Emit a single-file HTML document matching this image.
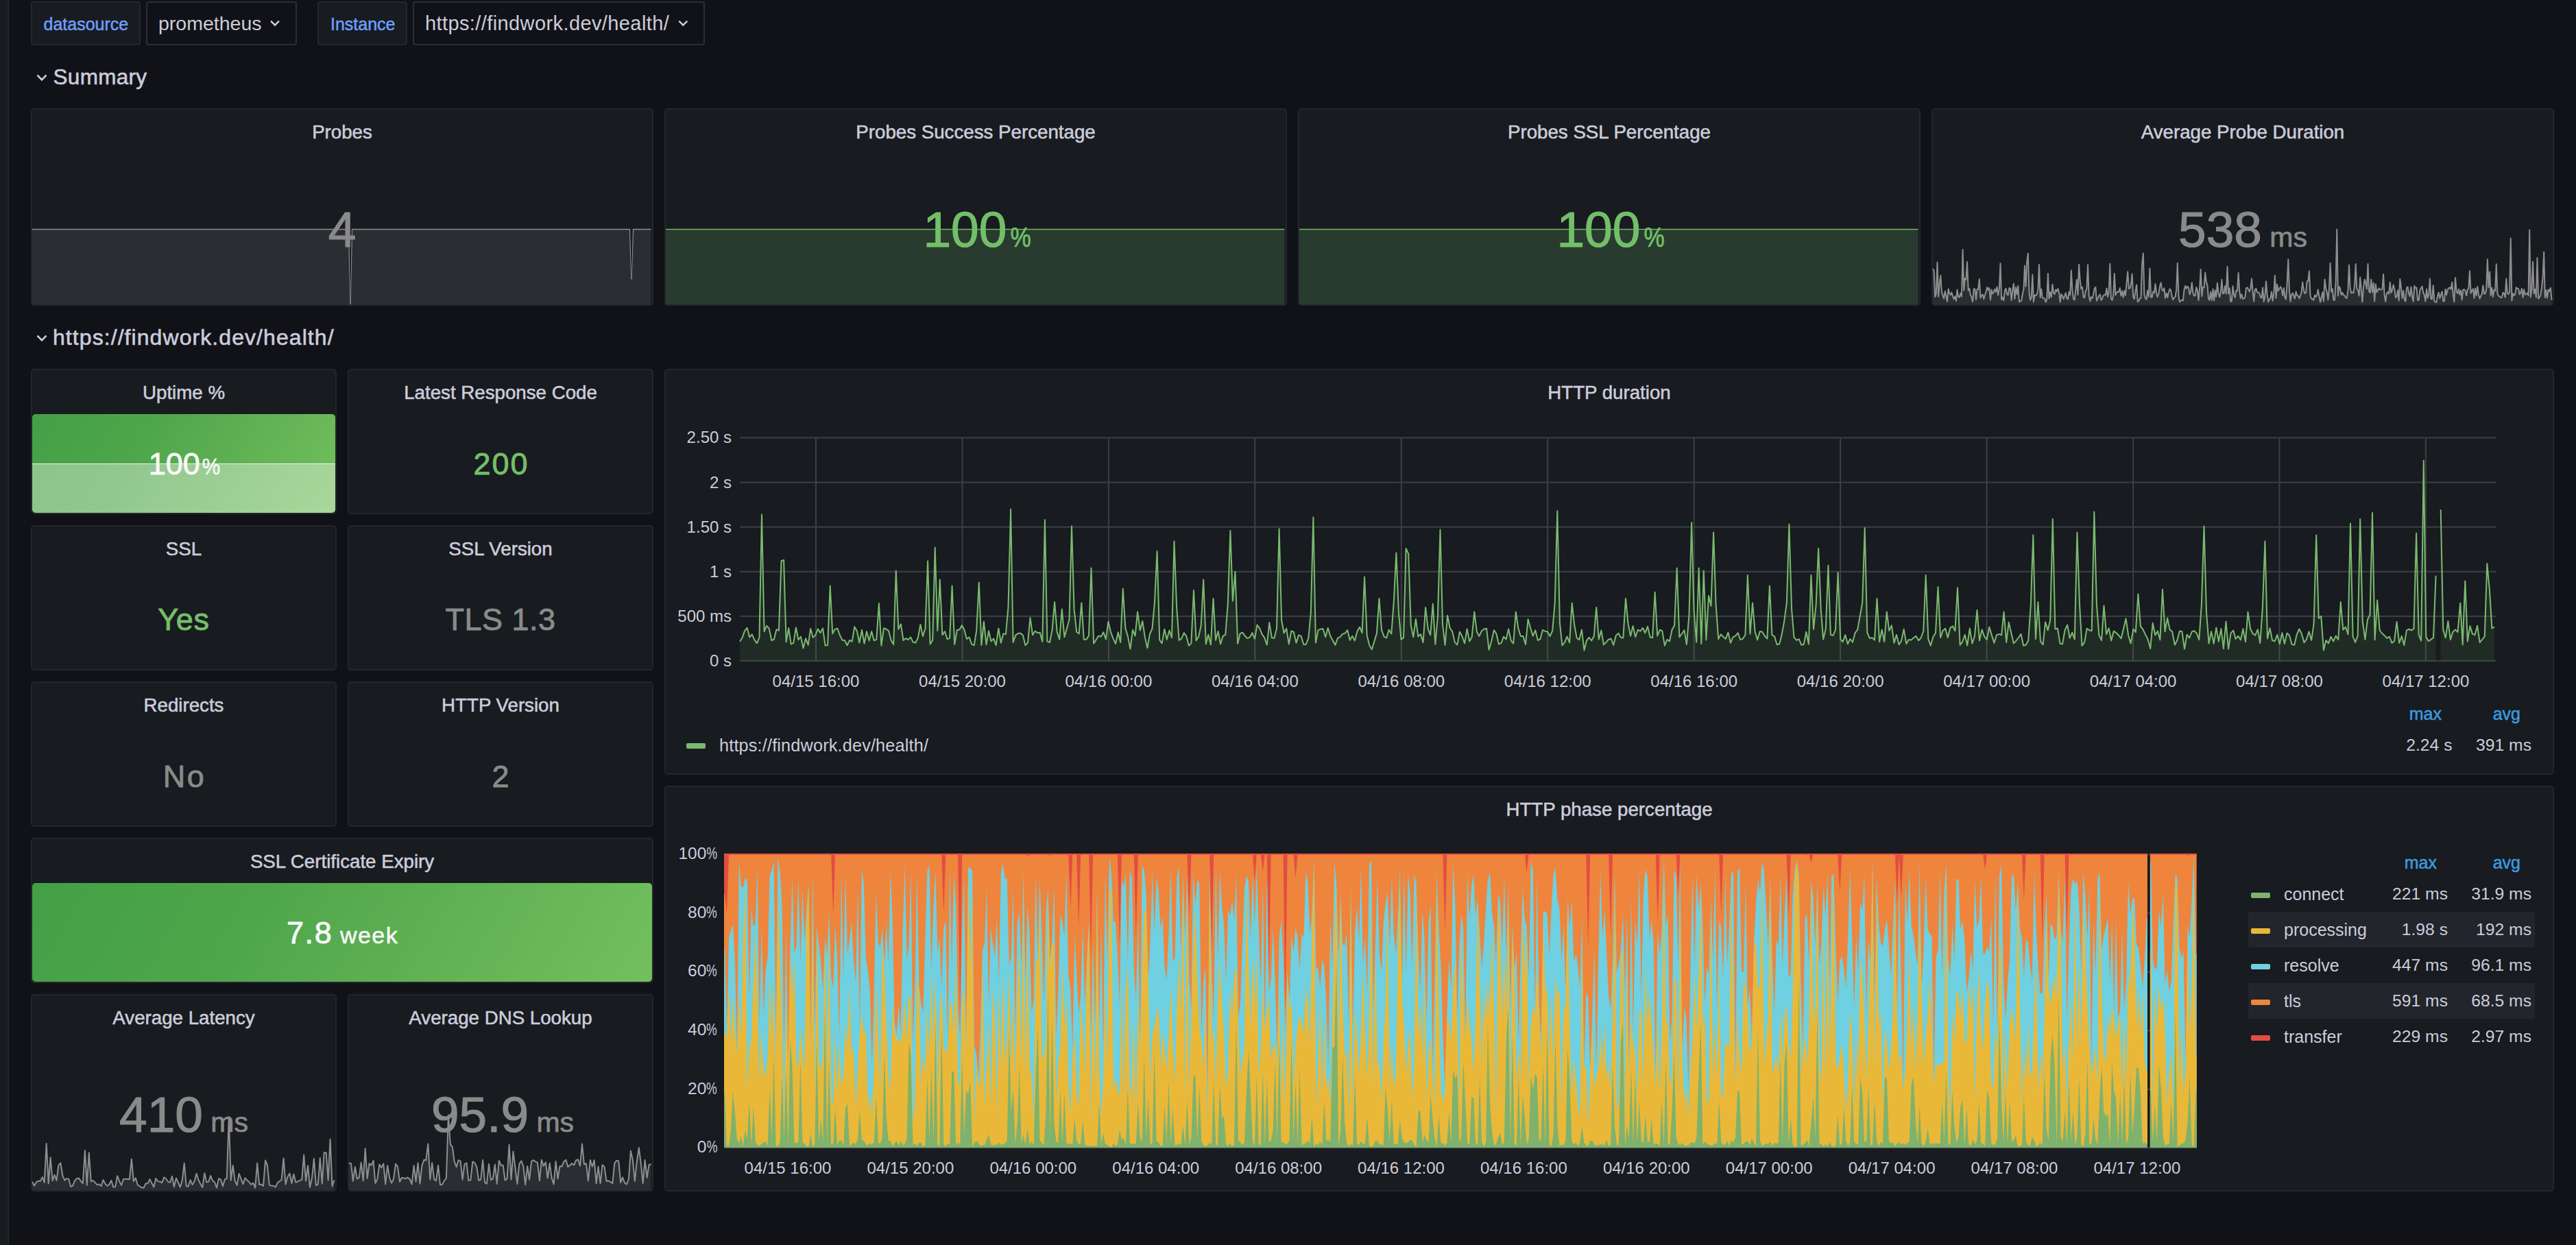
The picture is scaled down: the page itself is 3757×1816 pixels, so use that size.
<!DOCTYPE html>
<html lang="en"><head><meta charset="utf-8"><title>Blackbox Exporter (HTTP prober) - Grafana</title>
<style>
html,body{margin:0;padding:0}
body{width:3757px;height:1816px;background:#111217;overflow:hidden;position:relative;font-family:"Liberation Sans", sans-serif;}
div{position:absolute;box-sizing:border-box}
.t{white-space:pre}
.panel{background:#181b1f;border:2px solid #24262c;border-radius:5px;overflow:hidden}
.lbl{background:#181b1f;border:2px solid #24272c;border-radius:4px}
.val{background:#111217;border:2px solid #2c2f35;border-radius:4px}
svg{position:absolute;left:0;top:0;overflow:visible}
</style></head><body>

<div class="" style="left:0px;top:0px;width:13px;height:1816px;background:#181b1f;border-right:2px solid #23262b"></div>
<div class="lbl" style="left:45px;top:2px;width:160px;height:64px;"></div>
<div class="t" style="left:63.5px;top:22.54px;font-size:25px;line-height:25px;color:#6e9fff;font-weight:400;-webkit-text-stroke:0.5px #6e9fff;">datasource</div>
<div class="val" style="left:213px;top:2px;width:220px;height:64px;"></div>
<div class="t" style="left:231px;top:20.37px;font-size:28.5px;line-height:28.5px;color:#ccccdc;font-weight:400;">prometheus</div>
<div class="lbl" style="left:463px;top:2px;width:131px;height:64px;"></div>
<div class="t" style="left:482px;top:22.54px;font-size:25px;line-height:25px;color:#6e9fff;font-weight:400;-webkit-text-stroke:0.5px #6e9fff;">Instance</div>
<div class="val" style="left:602px;top:2px;width:426px;height:64px;"></div>
<div class="t" style="left:620px;top:19.95px;font-size:29px;line-height:29px;color:#ccccdc;font-weight:400;letter-spacing:0.4px;">https://findwork.dev/health/</div>
<svg width="3757" height="1816" style="pointer-events:none"><path d="M395.00 30.70 L401.00 36.70 L407.00 30.70" fill="none" stroke="#ccccdc" stroke-width="2.4" stroke-linejoin="miter"/></svg>
<svg width="3757" height="1816" style="pointer-events:none"><path d="M990.30 30.70 L996.30 36.70 L1002.30 30.70" fill="none" stroke="#ccccdc" stroke-width="2.4" stroke-linejoin="miter"/></svg>
<svg width="3757" height="1816" style="pointer-events:none"><path d="M54.50 109.60 L61.00 116.40 L67.50 109.60" fill="none" stroke="#ccccdc" stroke-width="2.7" stroke-linejoin="miter"/></svg>
<div class="t" style="left:77.5px;top:96.64px;font-size:31.5px;line-height:31.5px;color:#ccccdc;font-weight:400;letter-spacing:0.3px;-webkit-text-stroke:0.6px #ccccdc;">Summary</div>
<svg width="3757" height="1816" style="pointer-events:none"><path d="M54.50 489.60 L61.00 496.40 L67.50 489.60" fill="none" stroke="#ccccdc" stroke-width="2.7" stroke-linejoin="miter"/></svg>
<div class="t" style="left:77px;top:476.21px;font-size:32px;line-height:32px;color:#ccccdc;font-weight:400;letter-spacing:1.07px;-webkit-text-stroke:0.6px #ccccdc;">https://findwork.dev/health/</div>
<div class="panel" style="left:45px;top:158px;width:908px;height:288px;"></div>
<div class="t" style="left:499.0px;top:178.55px;font-size:27.7px;line-height:27.7px;color:#ccccdc;font-weight:400;-webkit-text-stroke:0.55px #ccccdc;transform:translateX(-50%);">Probes</div>
<div class="panel" style="left:969px;top:158px;width:908px;height:288px;"></div>
<div class="t" style="left:1423.0px;top:178.55px;font-size:27.7px;line-height:27.7px;color:#ccccdc;font-weight:400;-webkit-text-stroke:0.55px #ccccdc;transform:translateX(-50%);">Probes Success Percentage</div>
<div class="panel" style="left:1893px;top:158px;width:908px;height:288px;"></div>
<div class="t" style="left:2347.0px;top:178.55px;font-size:27.7px;line-height:27.7px;color:#ccccdc;font-weight:400;-webkit-text-stroke:0.55px #ccccdc;transform:translateX(-50%);">Probes SSL Percentage</div>
<div class="panel" style="left:2817px;top:158px;width:908px;height:288px;"></div>
<div class="t" style="left:3271.0px;top:178.55px;font-size:27.7px;line-height:27.7px;color:#ccccdc;font-weight:400;-webkit-text-stroke:0.55px #ccccdc;transform:translateX(-50%);">Average Probe Duration</div>
<svg width="3757" height="1816">
<rect x="47" y="334.5" width="902.5" height="109.5" fill="#2a2e32"/>
<path d="M47 334.5 L508.6 334.5 L511 444 L513.4 334.5 L918.6 334.5 L921 407.5 L923.4 334.5 L949.5 334.5" fill="none" stroke="#8e8e8e" stroke-width="1.5"/>
<path d="M509.2 334.5 L511 444 L512.8 334.5 Z M919.2 334.5 L921 407.5 L922.8 334.5 Z" fill="#181b1f"/>
<rect x="971" y="334.5" width="902.5" height="109.5" fill="#293b2e"/>
<rect x="971" y="333.8" width="902.5" height="1.4" fill="#73bf69"/>
<rect x="1895" y="334.5" width="902.5" height="109.5" fill="#293b2e"/>
<rect x="1895" y="333.8" width="902.5" height="1.4" fill="#73bf69"/>
</svg>
<div class="t" style="left:499.0px;top:297.71px;line-height:73px;color:#8a8a8a;transform:translateX(-50%)"><span style="font-size:73px;letter-spacing:0px;-webkit-text-stroke:1.2px #8a8a8a">4</span></div>
<div class="t" style="left:1425.0px;top:297.71px;line-height:73px;color:#73bf69;transform:translateX(-50%)"><span style="font-size:73px;letter-spacing:0px;-webkit-text-stroke:1.2px #73bf69">100</span><span style="font-size:41px;letter-spacing:0px;-webkit-text-stroke:0.72px #73bf69;margin-left:5px;display:inline-block;transform:scaleX(0.83);transform-origin:0 50%;margin-right:-6.2px;">%</span></div>
<div class="t" style="left:2349.0px;top:297.71px;line-height:73px;color:#73bf69;transform:translateX(-50%)"><span style="font-size:73px;letter-spacing:0px;-webkit-text-stroke:1.2px #73bf69">100</span><span style="font-size:41px;letter-spacing:0px;-webkit-text-stroke:0.72px #73bf69;margin-left:5px;display:inline-block;transform:scaleX(0.83);transform-origin:0 50%;margin-right:-6.2px;">%</span></div>
<svg width="3757" height="1816">
<path d="M2819.0 392.0 L2820.6 395.0 L2822.2 433.1 L2823.8 429.1 L2825.5 382.5 L2827.1 432.7 L2828.7 414.6 L2830.3 401.8 L2831.9 425.8 L2833.5 430.8 L2835.1 435.4 L2836.8 424.7 L2838.4 431.6 L2840.0 439.9 L2841.6 421.5 L2843.2 428.0 L2844.8 430.3 L2846.4 426.5 L2848.1 432.3 L2849.7 436.2 L2851.3 432.3 L2852.9 439.0 L2854.5 422.8 L2856.1 432.9 L2857.7 433.5 L2859.4 427.8 L2861.0 432.6 L2862.6 364.1 L2864.2 423.6 L2865.8 405.9 L2867.4 407.9 L2869.0 382.0 L2870.7 423.7 L2872.3 420.7 L2873.9 430.5 L2875.5 433.2 L2877.1 440.2 L2878.7 421.3 L2880.4 421.8 L2882.0 437.1 L2883.6 421.9 L2885.2 422.0 L2886.8 407.0 L2888.4 434.6 L2890.0 430.9 L2891.7 429.5 L2893.3 436.2 L2894.9 430.2 L2896.5 426.2 L2898.1 419.0 L2899.7 423.2 L2901.3 420.0 L2903.0 437.4 L2904.6 422.6 L2906.2 428.5 L2907.8 426.5 L2909.4 421.6 L2911.0 426.0 L2912.6 418.6 L2914.3 430.7 L2915.9 420.6 L2917.5 384.2 L2919.1 436.9 L2920.7 433.6 L2922.3 438.4 L2923.9 423.8 L2925.6 420.7 L2927.2 429.5 L2928.8 430.2 L2930.4 420.1 L2932.0 420.6 L2933.6 438.1 L2935.2 423.5 L2936.9 413.7 L2938.5 435.9 L2940.1 419.0 L2941.7 429.4 L2943.3 417.0 L2944.9 440.3 L2946.5 439.3 L2948.2 438.4 L2949.8 428.8 L2951.4 422.8 L2953.0 387.5 L2954.6 418.0 L2956.2 382.4 L2957.8 369.5 L2959.5 427.3 L2961.1 437.6 L2962.7 433.9 L2964.3 400.5 L2965.9 440.4 L2967.5 430.3 L2969.1 431.3 L2970.8 429.6 L2972.4 422.5 L2974.0 386.0 L2975.6 433.9 L2977.2 421.7 L2978.8 434.3 L2980.4 434.9 L2982.1 435.4 L2983.7 440.7 L2985.3 436.3 L2986.9 398.9 L2988.5 435.6 L2990.1 426.3 L2991.8 433.6 L2993.4 414.7 L2995.0 427.0 L2996.6 429.2 L2998.2 422.6 L2999.8 425.1 L3001.4 420.9 L3003.1 427.0 L3004.7 440.6 L3006.3 429.0 L3007.9 431.4 L3009.5 436.2 L3011.1 432.3 L3012.7 427.2 L3014.4 435.2 L3016.0 436.6 L3017.6 425.6 L3019.2 430.5 L3020.8 394.3 L3022.4 422.8 L3024.0 436.1 L3025.7 437.6 L3027.3 422.8 L3028.9 407.8 L3030.5 429.9 L3032.1 385.7 L3033.7 409.2 L3035.3 421.0 L3037.0 418.8 L3038.6 433.2 L3040.2 434.5 L3041.8 424.2 L3043.4 421.3 L3045.0 386.2 L3046.6 430.8 L3048.3 439.6 L3049.9 433.2 L3051.5 435.0 L3053.1 429.8 L3054.7 420.9 L3056.3 418.9 L3057.9 438.7 L3059.6 435.1 L3061.2 431.7 L3062.8 429.4 L3064.4 438.0 L3066.0 436.0 L3067.6 431.0 L3069.2 430.1 L3070.9 430.4 L3072.5 420.4 L3074.1 433.1 L3075.7 425.8 L3077.3 384.7 L3078.9 435.6 L3080.5 437.9 L3082.2 430.8 L3083.8 399.0 L3085.4 430.6 L3087.0 426.8 L3088.6 425.3 L3090.2 425.9 L3091.8 420.0 L3093.5 431.5 L3095.1 424.5 L3096.7 433.9 L3098.3 424.1 L3099.9 430.7 L3101.5 414.3 L3103.2 396.2 L3104.8 421.0 L3106.4 420.3 L3108.0 414.9 L3109.6 399.6 L3111.2 433.0 L3112.8 436.2 L3114.5 424.5 L3116.1 415.4 L3117.7 440.1 L3119.3 438.9 L3120.9 435.1 L3122.5 434.8 L3124.1 385.5 L3125.8 369.5 L3127.4 430.3 L3129.0 435.2 L3130.6 436.7 L3132.2 423.8 L3133.8 432.8 L3135.4 391.5 L3137.1 433.6 L3138.7 433.5 L3140.3 425.2 L3141.9 427.1 L3143.5 414.2 L3145.1 428.3 L3146.7 433.1 L3148.4 428.1 L3150.0 418.1 L3151.6 412.3 L3153.2 422.3 L3154.8 424.3 L3156.4 420.3 L3158.0 435.0 L3159.7 427.7 L3161.3 434.0 L3162.9 426.3 L3164.5 421.4 L3166.1 423.3 L3167.7 432.1 L3169.3 437.1 L3171.0 434.0 L3172.6 432.9 L3174.2 422.4 L3175.8 383.8 L3177.4 431.8 L3179.0 440.4 L3180.6 438.8 L3182.3 437.5 L3183.9 438.3 L3185.5 423.0 L3187.1 417.0 L3188.7 420.9 L3190.3 417.7 L3191.9 419.5 L3193.6 429.4 L3195.2 424.8 L3196.8 412.2 L3198.4 427.6 L3200.0 431.5 L3201.6 430.9 L3203.2 419.1 L3204.9 423.9 L3206.5 437.9 L3208.1 420.5 L3209.7 393.0 L3211.3 432.4 L3212.9 418.9 L3214.6 419.2 L3216.2 397.5 L3217.8 411.4 L3219.4 415.7 L3221.0 436.2 L3222.6 437.6 L3224.2 425.8 L3225.9 438.2 L3227.5 421.6 L3229.1 438.4 L3230.7 423.2 L3232.3 432.8 L3233.9 412.8 L3235.5 426.7 L3237.2 433.4 L3238.8 427.2 L3240.4 407.8 L3242.0 427.9 L3243.6 427.9 L3245.2 417.0 L3246.8 428.4 L3248.5 388.8 L3250.1 428.4 L3251.7 420.2 L3253.3 439.8 L3254.9 439.4 L3256.5 417.3 L3258.1 429.6 L3259.8 433.9 L3261.4 423.6 L3263.0 424.4 L3264.6 397.9 L3266.2 424.3 L3267.8 434.9 L3269.4 429.3 L3271.1 436.0 L3272.7 435.5 L3274.3 433.6 L3275.9 420.8 L3277.5 419.3 L3279.1 421.9 L3280.7 425.1 L3282.4 420.4 L3284.0 406.6 L3285.6 425.5 L3287.2 439.3 L3288.8 422.8 L3290.4 420.7 L3292.0 426.2 L3293.7 426.8 L3295.3 427.7 L3296.9 433.7 L3298.5 434.5 L3300.1 419.6 L3301.7 440.0 L3303.3 433.1 L3305.0 410.2 L3306.6 429.8 L3308.2 440.6 L3309.8 436.7 L3311.4 435.0 L3313.0 425.4 L3314.6 438.9 L3316.3 427.0 L3317.9 401.8 L3319.5 435.0 L3321.1 414.8 L3322.7 424.2 L3324.3 421.6 L3325.9 418.2 L3327.6 421.5 L3329.2 431.2 L3330.8 420.0 L3332.4 433.6 L3334.0 436.6 L3335.6 414.2 L3337.3 378.3 L3338.9 423.8 L3340.5 440.0 L3342.1 429.8 L3343.7 427.5 L3345.3 431.3 L3346.9 435.7 L3348.6 425.4 L3350.2 430.8 L3351.8 431.5 L3353.4 435.2 L3355.0 431.8 L3356.6 426.4 L3358.2 411.6 L3359.9 423.6 L3361.5 428.1 L3363.1 426.7 L3364.7 410.2 L3366.3 410.0 L3367.9 395.5 L3369.5 431.5 L3371.2 435.8 L3372.8 435.9 L3374.4 437.9 L3376.0 430.4 L3377.6 433.0 L3379.2 430.5 L3380.8 422.5 L3382.5 432.5 L3384.1 440.7 L3385.7 434.1 L3387.3 426.3 L3388.9 439.5 L3390.5 407.5 L3392.1 419.9 L3393.8 426.5 L3395.4 437.4 L3397.0 421.2 L3398.6 383.8 L3400.2 425.5 L3401.8 421.4 L3403.4 437.7 L3405.1 437.6 L3406.7 409.8 L3408.3 334.5 L3409.9 431.5 L3411.5 418.1 L3413.1 420.3 L3414.7 430.1 L3416.4 427.0 L3418.0 430.3 L3419.6 431.2 L3421.2 434.3 L3422.8 434.8 L3424.4 423.4 L3426.0 386.5 L3427.7 421.3 L3429.3 427.5 L3430.9 426.3 L3432.5 427.2 L3434.1 416.3 L3435.7 385.0 L3437.3 420.7 L3439.0 423.5 L3440.6 431.5 L3442.2 404.4 L3443.8 423.0 L3445.4 440.4 L3447.0 419.2 L3448.7 407.7 L3450.3 412.0 L3451.9 421.4 L3453.5 385.0 L3455.1 425.1 L3456.7 426.9 L3458.3 407.4 L3460.0 426.5 L3461.6 412.5 L3463.2 439.4 L3464.8 414.5 L3466.4 426.6 L3468.0 423.5 L3469.6 420.4 L3471.3 422.6 L3472.9 422.5 L3474.5 421.3 L3476.1 400.1 L3477.7 431.5 L3479.3 439.8 L3480.9 428.2 L3482.6 425.7 L3484.2 428.6 L3485.8 411.7 L3487.4 426.9 L3489.0 423.4 L3490.6 415.6 L3492.2 421.3 L3493.9 434.0 L3495.5 432.8 L3497.1 423.3 L3498.7 438.4 L3500.3 406.9 L3501.9 419.0 L3503.5 435.0 L3505.2 423.9 L3506.8 437.3 L3508.4 439.6 L3510.0 420.0 L3511.6 418.4 L3513.2 428.4 L3514.8 432.1 L3516.5 418.4 L3518.1 433.0 L3519.7 439.7 L3521.3 417.1 L3522.9 420.1 L3524.5 419.5 L3526.1 438.0 L3527.8 437.6 L3529.4 423.2 L3531.0 420.3 L3532.6 417.7 L3534.2 427.0 L3535.8 430.3 L3537.4 439.5 L3539.1 421.6 L3540.7 434.8 L3542.3 430.0 L3543.9 406.5 L3545.5 436.1 L3547.1 436.3 L3548.7 416.3 L3550.4 439.5 L3552.0 440.4 L3553.6 440.7 L3555.2 431.2 L3556.8 426.7 L3558.4 435.2 L3560.1 429.9 L3561.7 425.2 L3563.3 439.3 L3564.9 439.5 L3566.5 421.8 L3568.1 430.3 L3569.7 422.5 L3571.4 420.3 L3573.0 419.3 L3574.6 421.8 L3576.2 411.8 L3577.8 429.9 L3579.4 440.3 L3581.0 405.0 L3582.7 425.2 L3584.3 428.1 L3585.9 421.7 L3587.5 429.9 L3589.1 423.4 L3590.7 437.5 L3592.3 422.6 L3594.0 422.3 L3595.6 423.7 L3597.2 431.2 L3598.8 422.9 L3600.4 419.7 L3602.0 395.1 L3603.6 427.7 L3605.3 423.7 L3606.9 421.3 L3608.5 434.9 L3610.1 420.5 L3611.7 431.2 L3613.3 418.1 L3614.9 429.5 L3616.6 435.6 L3618.2 431.8 L3619.8 428.8 L3621.4 416.4 L3623.0 428.7 L3624.6 428.1 L3626.2 422.9 L3627.9 378.3 L3629.5 419.1 L3631.1 396.4 L3632.7 431.1 L3634.3 419.7 L3635.9 433.0 L3637.5 422.7 L3639.2 424.1 L3640.8 385.2 L3642.4 427.9 L3644.0 431.6 L3645.6 432.4 L3647.2 434.3 L3648.8 433.7 L3650.5 426.7 L3652.1 428.1 L3653.7 433.6 L3655.3 406.5 L3656.9 428.3 L3658.5 428.9 L3660.1 425.7 L3661.8 347.6 L3663.4 438.5 L3665.0 428.1 L3666.6 431.1 L3668.2 429.1 L3669.8 419.3 L3671.5 421.1 L3673.1 421.3 L3674.7 429.5 L3676.3 426.9 L3677.9 420.9 L3679.5 434.0 L3681.1 422.3 L3682.8 429.8 L3684.4 429.1 L3686.0 427.2 L3687.6 431.1 L3689.2 335.6 L3690.8 433.6 L3692.4 422.0 L3694.1 381.5 L3695.7 428.0 L3697.3 422.0 L3698.9 433.8 L3700.5 376.1 L3702.1 435.4 L3703.7 433.9 L3705.4 430.3 L3707.0 419.4 L3708.6 404.2 L3710.2 367.4 L3711.8 434.0 L3713.4 423.2 L3715.0 434.8 L3716.7 422.4 L3718.3 424.9 L3719.9 419.9 L3721.5 437.8 L3721.5 444.0 L2819.0 444.0 Z" fill="#2a2e32"/><path d="M2819.0 392.0 L2820.6 395.0 L2822.2 433.1 L2823.8 429.1 L2825.5 382.5 L2827.1 432.7 L2828.7 414.6 L2830.3 401.8 L2831.9 425.8 L2833.5 430.8 L2835.1 435.4 L2836.8 424.7 L2838.4 431.6 L2840.0 439.9 L2841.6 421.5 L2843.2 428.0 L2844.8 430.3 L2846.4 426.5 L2848.1 432.3 L2849.7 436.2 L2851.3 432.3 L2852.9 439.0 L2854.5 422.8 L2856.1 432.9 L2857.7 433.5 L2859.4 427.8 L2861.0 432.6 L2862.6 364.1 L2864.2 423.6 L2865.8 405.9 L2867.4 407.9 L2869.0 382.0 L2870.7 423.7 L2872.3 420.7 L2873.9 430.5 L2875.5 433.2 L2877.1 440.2 L2878.7 421.3 L2880.4 421.8 L2882.0 437.1 L2883.6 421.9 L2885.2 422.0 L2886.8 407.0 L2888.4 434.6 L2890.0 430.9 L2891.7 429.5 L2893.3 436.2 L2894.9 430.2 L2896.5 426.2 L2898.1 419.0 L2899.7 423.2 L2901.3 420.0 L2903.0 437.4 L2904.6 422.6 L2906.2 428.5 L2907.8 426.5 L2909.4 421.6 L2911.0 426.0 L2912.6 418.6 L2914.3 430.7 L2915.9 420.6 L2917.5 384.2 L2919.1 436.9 L2920.7 433.6 L2922.3 438.4 L2923.9 423.8 L2925.6 420.7 L2927.2 429.5 L2928.8 430.2 L2930.4 420.1 L2932.0 420.6 L2933.6 438.1 L2935.2 423.5 L2936.9 413.7 L2938.5 435.9 L2940.1 419.0 L2941.7 429.4 L2943.3 417.0 L2944.9 440.3 L2946.5 439.3 L2948.2 438.4 L2949.8 428.8 L2951.4 422.8 L2953.0 387.5 L2954.6 418.0 L2956.2 382.4 L2957.8 369.5 L2959.5 427.3 L2961.1 437.6 L2962.7 433.9 L2964.3 400.5 L2965.9 440.4 L2967.5 430.3 L2969.1 431.3 L2970.8 429.6 L2972.4 422.5 L2974.0 386.0 L2975.6 433.9 L2977.2 421.7 L2978.8 434.3 L2980.4 434.9 L2982.1 435.4 L2983.7 440.7 L2985.3 436.3 L2986.9 398.9 L2988.5 435.6 L2990.1 426.3 L2991.8 433.6 L2993.4 414.7 L2995.0 427.0 L2996.6 429.2 L2998.2 422.6 L2999.8 425.1 L3001.4 420.9 L3003.1 427.0 L3004.7 440.6 L3006.3 429.0 L3007.9 431.4 L3009.5 436.2 L3011.1 432.3 L3012.7 427.2 L3014.4 435.2 L3016.0 436.6 L3017.6 425.6 L3019.2 430.5 L3020.8 394.3 L3022.4 422.8 L3024.0 436.1 L3025.7 437.6 L3027.3 422.8 L3028.9 407.8 L3030.5 429.9 L3032.1 385.7 L3033.7 409.2 L3035.3 421.0 L3037.0 418.8 L3038.6 433.2 L3040.2 434.5 L3041.8 424.2 L3043.4 421.3 L3045.0 386.2 L3046.6 430.8 L3048.3 439.6 L3049.9 433.2 L3051.5 435.0 L3053.1 429.8 L3054.7 420.9 L3056.3 418.9 L3057.9 438.7 L3059.6 435.1 L3061.2 431.7 L3062.8 429.4 L3064.4 438.0 L3066.0 436.0 L3067.6 431.0 L3069.2 430.1 L3070.9 430.4 L3072.5 420.4 L3074.1 433.1 L3075.7 425.8 L3077.3 384.7 L3078.9 435.6 L3080.5 437.9 L3082.2 430.8 L3083.8 399.0 L3085.4 430.6 L3087.0 426.8 L3088.6 425.3 L3090.2 425.9 L3091.8 420.0 L3093.5 431.5 L3095.1 424.5 L3096.7 433.9 L3098.3 424.1 L3099.9 430.7 L3101.5 414.3 L3103.2 396.2 L3104.8 421.0 L3106.4 420.3 L3108.0 414.9 L3109.6 399.6 L3111.2 433.0 L3112.8 436.2 L3114.5 424.5 L3116.1 415.4 L3117.7 440.1 L3119.3 438.9 L3120.9 435.1 L3122.5 434.8 L3124.1 385.5 L3125.8 369.5 L3127.4 430.3 L3129.0 435.2 L3130.6 436.7 L3132.2 423.8 L3133.8 432.8 L3135.4 391.5 L3137.1 433.6 L3138.7 433.5 L3140.3 425.2 L3141.9 427.1 L3143.5 414.2 L3145.1 428.3 L3146.7 433.1 L3148.4 428.1 L3150.0 418.1 L3151.6 412.3 L3153.2 422.3 L3154.8 424.3 L3156.4 420.3 L3158.0 435.0 L3159.7 427.7 L3161.3 434.0 L3162.9 426.3 L3164.5 421.4 L3166.1 423.3 L3167.7 432.1 L3169.3 437.1 L3171.0 434.0 L3172.6 432.9 L3174.2 422.4 L3175.8 383.8 L3177.4 431.8 L3179.0 440.4 L3180.6 438.8 L3182.3 437.5 L3183.9 438.3 L3185.5 423.0 L3187.1 417.0 L3188.7 420.9 L3190.3 417.7 L3191.9 419.5 L3193.6 429.4 L3195.2 424.8 L3196.8 412.2 L3198.4 427.6 L3200.0 431.5 L3201.6 430.9 L3203.2 419.1 L3204.9 423.9 L3206.5 437.9 L3208.1 420.5 L3209.7 393.0 L3211.3 432.4 L3212.9 418.9 L3214.6 419.2 L3216.2 397.5 L3217.8 411.4 L3219.4 415.7 L3221.0 436.2 L3222.6 437.6 L3224.2 425.8 L3225.9 438.2 L3227.5 421.6 L3229.1 438.4 L3230.7 423.2 L3232.3 432.8 L3233.9 412.8 L3235.5 426.7 L3237.2 433.4 L3238.8 427.2 L3240.4 407.8 L3242.0 427.9 L3243.6 427.9 L3245.2 417.0 L3246.8 428.4 L3248.5 388.8 L3250.1 428.4 L3251.7 420.2 L3253.3 439.8 L3254.9 439.4 L3256.5 417.3 L3258.1 429.6 L3259.8 433.9 L3261.4 423.6 L3263.0 424.4 L3264.6 397.9 L3266.2 424.3 L3267.8 434.9 L3269.4 429.3 L3271.1 436.0 L3272.7 435.5 L3274.3 433.6 L3275.9 420.8 L3277.5 419.3 L3279.1 421.9 L3280.7 425.1 L3282.4 420.4 L3284.0 406.6 L3285.6 425.5 L3287.2 439.3 L3288.8 422.8 L3290.4 420.7 L3292.0 426.2 L3293.7 426.8 L3295.3 427.7 L3296.9 433.7 L3298.5 434.5 L3300.1 419.6 L3301.7 440.0 L3303.3 433.1 L3305.0 410.2 L3306.6 429.8 L3308.2 440.6 L3309.8 436.7 L3311.4 435.0 L3313.0 425.4 L3314.6 438.9 L3316.3 427.0 L3317.9 401.8 L3319.5 435.0 L3321.1 414.8 L3322.7 424.2 L3324.3 421.6 L3325.9 418.2 L3327.6 421.5 L3329.2 431.2 L3330.8 420.0 L3332.4 433.6 L3334.0 436.6 L3335.6 414.2 L3337.3 378.3 L3338.9 423.8 L3340.5 440.0 L3342.1 429.8 L3343.7 427.5 L3345.3 431.3 L3346.9 435.7 L3348.6 425.4 L3350.2 430.8 L3351.8 431.5 L3353.4 435.2 L3355.0 431.8 L3356.6 426.4 L3358.2 411.6 L3359.9 423.6 L3361.5 428.1 L3363.1 426.7 L3364.7 410.2 L3366.3 410.0 L3367.9 395.5 L3369.5 431.5 L3371.2 435.8 L3372.8 435.9 L3374.4 437.9 L3376.0 430.4 L3377.6 433.0 L3379.2 430.5 L3380.8 422.5 L3382.5 432.5 L3384.1 440.7 L3385.7 434.1 L3387.3 426.3 L3388.9 439.5 L3390.5 407.5 L3392.1 419.9 L3393.8 426.5 L3395.4 437.4 L3397.0 421.2 L3398.6 383.8 L3400.2 425.5 L3401.8 421.4 L3403.4 437.7 L3405.1 437.6 L3406.7 409.8 L3408.3 334.5 L3409.9 431.5 L3411.5 418.1 L3413.1 420.3 L3414.7 430.1 L3416.4 427.0 L3418.0 430.3 L3419.6 431.2 L3421.2 434.3 L3422.8 434.8 L3424.4 423.4 L3426.0 386.5 L3427.7 421.3 L3429.3 427.5 L3430.9 426.3 L3432.5 427.2 L3434.1 416.3 L3435.7 385.0 L3437.3 420.7 L3439.0 423.5 L3440.6 431.5 L3442.2 404.4 L3443.8 423.0 L3445.4 440.4 L3447.0 419.2 L3448.7 407.7 L3450.3 412.0 L3451.9 421.4 L3453.5 385.0 L3455.1 425.1 L3456.7 426.9 L3458.3 407.4 L3460.0 426.5 L3461.6 412.5 L3463.2 439.4 L3464.8 414.5 L3466.4 426.6 L3468.0 423.5 L3469.6 420.4 L3471.3 422.6 L3472.9 422.5 L3474.5 421.3 L3476.1 400.1 L3477.7 431.5 L3479.3 439.8 L3480.9 428.2 L3482.6 425.7 L3484.2 428.6 L3485.8 411.7 L3487.4 426.9 L3489.0 423.4 L3490.6 415.6 L3492.2 421.3 L3493.9 434.0 L3495.5 432.8 L3497.1 423.3 L3498.7 438.4 L3500.3 406.9 L3501.9 419.0 L3503.5 435.0 L3505.2 423.9 L3506.8 437.3 L3508.4 439.6 L3510.0 420.0 L3511.6 418.4 L3513.2 428.4 L3514.8 432.1 L3516.5 418.4 L3518.1 433.0 L3519.7 439.7 L3521.3 417.1 L3522.9 420.1 L3524.5 419.5 L3526.1 438.0 L3527.8 437.6 L3529.4 423.2 L3531.0 420.3 L3532.6 417.7 L3534.2 427.0 L3535.8 430.3 L3537.4 439.5 L3539.1 421.6 L3540.7 434.8 L3542.3 430.0 L3543.9 406.5 L3545.5 436.1 L3547.1 436.3 L3548.7 416.3 L3550.4 439.5 L3552.0 440.4 L3553.6 440.7 L3555.2 431.2 L3556.8 426.7 L3558.4 435.2 L3560.1 429.9 L3561.7 425.2 L3563.3 439.3 L3564.9 439.5 L3566.5 421.8 L3568.1 430.3 L3569.7 422.5 L3571.4 420.3 L3573.0 419.3 L3574.6 421.8 L3576.2 411.8 L3577.8 429.9 L3579.4 440.3 L3581.0 405.0 L3582.7 425.2 L3584.3 428.1 L3585.9 421.7 L3587.5 429.9 L3589.1 423.4 L3590.7 437.5 L3592.3 422.6 L3594.0 422.3 L3595.6 423.7 L3597.2 431.2 L3598.8 422.9 L3600.4 419.7 L3602.0 395.1 L3603.6 427.7 L3605.3 423.7 L3606.9 421.3 L3608.5 434.9 L3610.1 420.5 L3611.7 431.2 L3613.3 418.1 L3614.9 429.5 L3616.6 435.6 L3618.2 431.8 L3619.8 428.8 L3621.4 416.4 L3623.0 428.7 L3624.6 428.1 L3626.2 422.9 L3627.9 378.3 L3629.5 419.1 L3631.1 396.4 L3632.7 431.1 L3634.3 419.7 L3635.9 433.0 L3637.5 422.7 L3639.2 424.1 L3640.8 385.2 L3642.4 427.9 L3644.0 431.6 L3645.6 432.4 L3647.2 434.3 L3648.8 433.7 L3650.5 426.7 L3652.1 428.1 L3653.7 433.6 L3655.3 406.5 L3656.9 428.3 L3658.5 428.9 L3660.1 425.7 L3661.8 347.6 L3663.4 438.5 L3665.0 428.1 L3666.6 431.1 L3668.2 429.1 L3669.8 419.3 L3671.5 421.1 L3673.1 421.3 L3674.7 429.5 L3676.3 426.9 L3677.9 420.9 L3679.5 434.0 L3681.1 422.3 L3682.8 429.8 L3684.4 429.1 L3686.0 427.2 L3687.6 431.1 L3689.2 335.6 L3690.8 433.6 L3692.4 422.0 L3694.1 381.5 L3695.7 428.0 L3697.3 422.0 L3698.9 433.8 L3700.5 376.1 L3702.1 435.4 L3703.7 433.9 L3705.4 430.3 L3707.0 419.4 L3708.6 404.2 L3710.2 367.4 L3711.8 434.0 L3713.4 423.2 L3715.0 434.8 L3716.7 422.4 L3718.3 424.9 L3719.9 419.9 L3721.5 437.8" fill="none" stroke="#8e8e8e" stroke-width="2" stroke-linejoin="round"/>
</svg>
<div class="t" style="left:3271.0px;top:297.71px;line-height:73px;color:#8a8a8a;transform:translateX(-50%)"><span style="font-size:73px;letter-spacing:0px;-webkit-text-stroke:1.2px #8a8a8a">538</span><span style="font-size:41px;letter-spacing:0px;-webkit-text-stroke:0.72px #8a8a8a;margin-left:0px;"> ms</span></div>
<div class="panel" style="left:45px;top:538px;width:446px;height:212px;"></div>
<div class="t" style="left:268.0px;top:558.55px;font-size:27.7px;line-height:27.7px;color:#ccccdc;font-weight:400;-webkit-text-stroke:0.55px #ccccdc;transform:translateX(-50%);">Uptime %</div>
<div class="panel" style="left:507px;top:538px;width:446px;height:212px;"></div>
<div class="t" style="left:730.0px;top:558.55px;font-size:27.7px;line-height:27.7px;color:#ccccdc;font-weight:400;-webkit-text-stroke:0.55px #ccccdc;transform:translateX(-50%);">Latest Response Code</div>
<div class="panel" style="left:45px;top:766px;width:446px;height:212px;"></div>
<div class="t" style="left:268.0px;top:786.55px;font-size:27.7px;line-height:27.7px;color:#ccccdc;font-weight:400;-webkit-text-stroke:0.55px #ccccdc;transform:translateX(-50%);">SSL</div>
<div class="panel" style="left:507px;top:766px;width:446px;height:212px;"></div>
<div class="t" style="left:730.0px;top:786.55px;font-size:27.7px;line-height:27.7px;color:#ccccdc;font-weight:400;-webkit-text-stroke:0.55px #ccccdc;transform:translateX(-50%);">SSL Version</div>
<div class="panel" style="left:45px;top:994px;width:446px;height:212px;"></div>
<div class="t" style="left:268.0px;top:1014.55px;font-size:27.7px;line-height:27.7px;color:#ccccdc;font-weight:400;-webkit-text-stroke:0.55px #ccccdc;transform:translateX(-50%);">Redirects</div>
<div class="panel" style="left:507px;top:994px;width:446px;height:212px;"></div>
<div class="t" style="left:730.0px;top:1014.55px;font-size:27.7px;line-height:27.7px;color:#ccccdc;font-weight:400;-webkit-text-stroke:0.55px #ccccdc;transform:translateX(-50%);">HTTP Version</div>
<div class="panel" style="left:45px;top:1222px;width:908px;height:212px;"></div>
<div class="t" style="left:499.0px;top:1242.55px;font-size:27.7px;line-height:27.7px;color:#ccccdc;font-weight:400;-webkit-text-stroke:0.55px #ccccdc;transform:translateX(-50%);">SSL Certificate Expiry</div>
<div class="panel" style="left:45px;top:1450px;width:446px;height:288px;"></div>
<div class="t" style="left:268.0px;top:1470.55px;font-size:27.7px;line-height:27.7px;color:#ccccdc;font-weight:400;-webkit-text-stroke:0.55px #ccccdc;transform:translateX(-50%);">Average Latency</div>
<div class="panel" style="left:507px;top:1450px;width:446px;height:288px;"></div>
<div class="t" style="left:730.0px;top:1470.55px;font-size:27.7px;line-height:27.7px;color:#ccccdc;font-weight:400;-webkit-text-stroke:0.55px #ccccdc;transform:translateX(-50%);">Average DNS Lookup</div>
<div class="" style="left:47px;top:604px;width:442px;height:144px;background:linear-gradient(120deg,#43a047 0%,#4fa64a 35%,#73bf5e 100%);border-radius:5px;overflow:hidden"><div style="left:0;top:72px;width:442px;height:72px;background:rgba(255,255,255,0.38)"></div><div style="left:0;top:71.5px;width:442px;height:1.2px;background:rgba(255,255,255,0.8)"></div></div>
<div class="t" style="left:269.0px;top:653.91px;line-height:45px;color:#f7f8fa;transform:translateX(-50%)"><span style="font-size:45px;letter-spacing:0px;-webkit-text-stroke:0.9px #f7f8fa">100</span><span style="font-size:33px;letter-spacing:0px;-webkit-text-stroke:0.54px #f7f8fa;margin-left:3px;display:inline-block;transform:scaleX(0.9);transform-origin:0 50%;margin-right:-2.9px;">%</span></div>
<div class="t" style="left:731.0px;top:653.61px;line-height:45px;color:#73bf69;transform:translateX(-50%)"><span style="font-size:45px;letter-spacing:2px;-webkit-text-stroke:0.9px #73bf69">200</span></div>
<div class="t" style="left:268.0px;top:881.41px;line-height:45px;color:#73bf69;transform:translateX(-50%)"><span style="font-size:45px;letter-spacing:0.7px;-webkit-text-stroke:0.9px #73bf69">Yes</span></div>
<div class="t" style="left:730.0px;top:881.41px;line-height:45px;color:#8a8a8a;transform:translateX(-50%)"><span style="font-size:45px;letter-spacing:0.5px;-webkit-text-stroke:0.9px #8a8a8a">TLS 1.3</span></div>
<div class="t" style="left:269.0px;top:1109.91px;line-height:45px;color:#8a8a8a;transform:translateX(-50%)"><span style="font-size:45px;letter-spacing:2.5px;-webkit-text-stroke:0.9px #8a8a8a">No</span></div>
<div class="t" style="left:730.0px;top:1109.91px;line-height:45px;color:#8a8a8a;transform:translateX(-50%)"><span style="font-size:45px;letter-spacing:0px;-webkit-text-stroke:0.9px #8a8a8a">2</span></div>
<div class="" style="left:47px;top:1288px;width:904px;height:144px;background:linear-gradient(120deg,#43a047 0%,#4fa64a 35%,#73bf5e 100%);border-radius:5px"></div>
<div class="t" style="left:499.5px;top:1337.91px;line-height:45px;color:#f7f8fa;transform:translateX(-50%)"><span style="font-size:45px;letter-spacing:1.6px;-webkit-text-stroke:0.9px #f7f8fa">7.8</span><span style="font-size:34px;letter-spacing:1.4px;-webkit-text-stroke:0.54px #f7f8fa;margin-left:0px;"> week</span></div>
<svg width="3757" height="1816">
<path d="M47.0 1723.7 L50.0 1729.5 L52.9 1724.4 L55.9 1722.6 L58.8 1722.9 L61.8 1717.0 L64.7 1725.0 L67.7 1668.1 L70.7 1726.5 L73.6 1688.3 L76.6 1722.5 L79.5 1713.6 L82.5 1721.9 L85.4 1699.6 L88.4 1696.3 L91.3 1714.6 L94.3 1721.7 L97.3 1719.1 L100.2 1719.8 L103.2 1730.9 L106.1 1729.5 L109.1 1722.1 L112.0 1719.0 L115.0 1718.5 L118.0 1723.1 L120.9 1726.1 L123.9 1678.0 L126.8 1728.7 L129.8 1681.2 L132.7 1723.3 L135.7 1721.9 L138.6 1724.8 L141.6 1728.1 L144.6 1727.6 L147.5 1730.1 L150.5 1721.0 L153.4 1726.6 L156.4 1729.7 L159.3 1727.7 L162.3 1721.7 L165.3 1731.4 L168.2 1731.0 L171.2 1715.2 L174.1 1723.1 L177.1 1728.7 L180.0 1719.8 L183.0 1719.8 L185.9 1720.0 L188.9 1720.1 L191.9 1690.7 L194.8 1723.1 L197.8 1718.2 L200.7 1728.1 L203.7 1730.2 L206.6 1732.1 L209.6 1732.7 L212.6 1726.2 L215.5 1726.3 L218.5 1720.1 L221.4 1725.9 L224.4 1731.4 L227.3 1718.8 L230.3 1723.2 L233.3 1723.4 L236.2 1725.3 L239.2 1717.3 L242.1 1719.3 L245.1 1723.8 L248.0 1724.8 L251.0 1715.7 L253.9 1731.3 L256.9 1718.5 L259.9 1724.8 L262.8 1731.6 L265.8 1721.8 L268.7 1696.6 L271.7 1730.1 L274.6 1730.6 L277.6 1721.1 L280.6 1728.1 L283.5 1723.2 L286.5 1711.9 L289.4 1721.0 L292.4 1727.0 L295.3 1732.0 L298.3 1711.2 L301.2 1724.4 L304.2 1723.6 L307.2 1714.9 L310.1 1722.2 L313.1 1724.5 L316.0 1732.5 L319.0 1719.3 L321.9 1720.2 L324.9 1730.3 L327.9 1720.1 L330.8 1719.0 L333.8 1628.7 L336.7 1721.5 L339.7 1700.0 L342.6 1722.4 L345.6 1728.7 L348.6 1711.9 L351.5 1719.3 L354.5 1727.2 L357.4 1718.3 L360.4 1721.4 L363.3 1724.3 L366.3 1727.8 L369.2 1725.5 L372.2 1732.6 L375.2 1696.5 L378.1 1728.0 L381.1 1727.5 L384.0 1730.0 L387.0 1692.5 L389.9 1699.5 L392.9 1728.6 L395.9 1729.6 L398.8 1729.7 L401.8 1731.5 L404.7 1725.3 L407.7 1722.9 L410.6 1721.2 L413.6 1689.4 L416.5 1727.6 L419.5 1716.4 L422.5 1711.5 L425.4 1726.1 L428.4 1712.8 L431.3 1724.5 L434.3 1723.5 L437.2 1721.8 L440.2 1720.9 L443.2 1684.5 L446.1 1722.7 L449.1 1700.2 L452.0 1731.8 L455.0 1718.3 L457.9 1690.0 L460.9 1729.0 L463.8 1727.4 L466.8 1689.0 L469.8 1726.6 L472.7 1681.2 L475.7 1681.2 L478.6 1721.6 L481.6 1661.5 L484.5 1730.3 L487.5 1721.2 L487.5 1736.0 L47.0 1736.0 Z" fill="#2a2e32"/><path d="M47.0 1723.7 L50.0 1729.5 L52.9 1724.4 L55.9 1722.6 L58.8 1722.9 L61.8 1717.0 L64.7 1725.0 L67.7 1668.1 L70.7 1726.5 L73.6 1688.3 L76.6 1722.5 L79.5 1713.6 L82.5 1721.9 L85.4 1699.6 L88.4 1696.3 L91.3 1714.6 L94.3 1721.7 L97.3 1719.1 L100.2 1719.8 L103.2 1730.9 L106.1 1729.5 L109.1 1722.1 L112.0 1719.0 L115.0 1718.5 L118.0 1723.1 L120.9 1726.1 L123.9 1678.0 L126.8 1728.7 L129.8 1681.2 L132.7 1723.3 L135.7 1721.9 L138.6 1724.8 L141.6 1728.1 L144.6 1727.6 L147.5 1730.1 L150.5 1721.0 L153.4 1726.6 L156.4 1729.7 L159.3 1727.7 L162.3 1721.7 L165.3 1731.4 L168.2 1731.0 L171.2 1715.2 L174.1 1723.1 L177.1 1728.7 L180.0 1719.8 L183.0 1719.8 L185.9 1720.0 L188.9 1720.1 L191.9 1690.7 L194.8 1723.1 L197.8 1718.2 L200.7 1728.1 L203.7 1730.2 L206.6 1732.1 L209.6 1732.7 L212.6 1726.2 L215.5 1726.3 L218.5 1720.1 L221.4 1725.9 L224.4 1731.4 L227.3 1718.8 L230.3 1723.2 L233.3 1723.4 L236.2 1725.3 L239.2 1717.3 L242.1 1719.3 L245.1 1723.8 L248.0 1724.8 L251.0 1715.7 L253.9 1731.3 L256.9 1718.5 L259.9 1724.8 L262.8 1731.6 L265.8 1721.8 L268.7 1696.6 L271.7 1730.1 L274.6 1730.6 L277.6 1721.1 L280.6 1728.1 L283.5 1723.2 L286.5 1711.9 L289.4 1721.0 L292.4 1727.0 L295.3 1732.0 L298.3 1711.2 L301.2 1724.4 L304.2 1723.6 L307.2 1714.9 L310.1 1722.2 L313.1 1724.5 L316.0 1732.5 L319.0 1719.3 L321.9 1720.2 L324.9 1730.3 L327.9 1720.1 L330.8 1719.0 L333.8 1628.7 L336.7 1721.5 L339.7 1700.0 L342.6 1722.4 L345.6 1728.7 L348.6 1711.9 L351.5 1719.3 L354.5 1727.2 L357.4 1718.3 L360.4 1721.4 L363.3 1724.3 L366.3 1727.8 L369.2 1725.5 L372.2 1732.6 L375.2 1696.5 L378.1 1728.0 L381.1 1727.5 L384.0 1730.0 L387.0 1692.5 L389.9 1699.5 L392.9 1728.6 L395.9 1729.6 L398.8 1729.7 L401.8 1731.5 L404.7 1725.3 L407.7 1722.9 L410.6 1721.2 L413.6 1689.4 L416.5 1727.6 L419.5 1716.4 L422.5 1711.5 L425.4 1726.1 L428.4 1712.8 L431.3 1724.5 L434.3 1723.5 L437.2 1721.8 L440.2 1720.9 L443.2 1684.5 L446.1 1722.7 L449.1 1700.2 L452.0 1731.8 L455.0 1718.3 L457.9 1690.0 L460.9 1729.0 L463.8 1727.4 L466.8 1689.0 L469.8 1726.6 L472.7 1681.2 L475.7 1681.2 L478.6 1721.6 L481.6 1661.5 L484.5 1730.3 L487.5 1721.2" fill="none" stroke="#8e8e8e" stroke-width="2" stroke-linejoin="round"/>
<path d="M509.0 1696.4 L512.0 1697.0 L514.9 1722.7 L517.9 1702.0 L520.8 1719.5 L523.8 1717.6 L526.7 1695.7 L529.7 1722.5 L532.7 1675.2 L535.6 1719.1 L538.6 1697.1 L541.5 1699.8 L544.5 1693.0 L547.4 1725.8 L550.4 1719.9 L553.3 1698.5 L556.3 1703.1 L559.3 1697.5 L562.2 1727.5 L565.2 1699.9 L568.1 1717.8 L571.1 1725.6 L574.0 1719.6 L577.0 1697.8 L580.0 1701.6 L582.9 1723.7 L585.9 1717.7 L588.8 1718.6 L591.8 1719.0 L594.7 1717.5 L597.7 1719.9 L600.6 1727.5 L603.6 1700.2 L606.6 1723.4 L609.5 1696.2 L612.5 1726.6 L615.4 1700.1 L618.4 1691.8 L621.3 1692.5 L624.3 1668.6 L627.3 1720.6 L630.2 1696.0 L633.2 1720.4 L636.1 1722.2 L639.1 1699.8 L642.0 1728.2 L645.0 1727.7 L647.9 1722.1 L650.9 1718.6 L653.9 1626.5 L656.8 1669.3 L659.8 1672.9 L662.7 1694.4 L665.7 1702.2 L668.6 1692.3 L671.6 1693.6 L674.6 1720.8 L677.5 1698.1 L680.5 1696.3 L683.4 1722.0 L686.4 1721.3 L689.3 1694.4 L692.3 1696.2 L695.3 1702.1 L698.2 1721.8 L701.2 1720.7 L704.1 1692.1 L707.1 1725.0 L710.0 1726.5 L713.0 1697.8 L715.9 1721.0 L718.9 1719.5 L721.9 1698.5 L724.8 1726.8 L727.8 1692.9 L730.7 1699.8 L733.7 1699.8 L736.6 1721.5 L739.6 1719.1 L742.6 1669.8 L745.5 1720.6 L748.5 1679.5 L751.4 1702.9 L754.4 1726.8 L757.3 1697.8 L760.3 1693.4 L763.2 1700.7 L766.2 1728.2 L769.2 1701.0 L772.1 1720.7 L775.1 1694.0 L778.0 1692.2 L781.0 1694.4 L783.9 1695.6 L786.9 1722.1 L789.9 1691.8 L792.8 1700.7 L795.8 1695.4 L798.7 1718.5 L801.7 1696.7 L804.6 1718.4 L807.6 1727.4 L810.6 1693.9 L813.5 1719.5 L816.5 1701.1 L819.4 1701.5 L822.4 1694.4 L825.3 1691.8 L828.3 1702.1 L831.2 1699.7 L834.2 1696.9 L837.2 1699.4 L840.1 1692.3 L843.1 1691.5 L846.0 1700.7 L849.0 1668.5 L851.9 1698.3 L854.9 1697.2 L857.9 1722.4 L860.8 1692.0 L863.8 1701.6 L866.7 1692.3 L869.7 1726.2 L872.6 1701.6 L875.6 1726.2 L878.5 1699.3 L881.5 1701.9 L884.5 1722.7 L887.4 1722.5 L890.4 1723.8 L893.3 1726.1 L896.3 1696.8 L899.2 1692.8 L902.2 1693.4 L905.2 1724.9 L908.1 1717.4 L911.1 1725.7 L914.0 1727.3 L917.0 1719.7 L919.9 1678.6 L922.9 1692.2 L925.8 1722.8 L928.8 1694.9 L931.8 1674.0 L934.7 1696.3 L937.7 1726.1 L940.6 1692.0 L943.6 1717.9 L946.5 1699.2 L949.5 1698.0 L949.5 1736.0 L509.0 1736.0 Z" fill="#2a2e32"/><path d="M509.0 1696.4 L512.0 1697.0 L514.9 1722.7 L517.9 1702.0 L520.8 1719.5 L523.8 1717.6 L526.7 1695.7 L529.7 1722.5 L532.7 1675.2 L535.6 1719.1 L538.6 1697.1 L541.5 1699.8 L544.5 1693.0 L547.4 1725.8 L550.4 1719.9 L553.3 1698.5 L556.3 1703.1 L559.3 1697.5 L562.2 1727.5 L565.2 1699.9 L568.1 1717.8 L571.1 1725.6 L574.0 1719.6 L577.0 1697.8 L580.0 1701.6 L582.9 1723.7 L585.9 1717.7 L588.8 1718.6 L591.8 1719.0 L594.7 1717.5 L597.7 1719.9 L600.6 1727.5 L603.6 1700.2 L606.6 1723.4 L609.5 1696.2 L612.5 1726.6 L615.4 1700.1 L618.4 1691.8 L621.3 1692.5 L624.3 1668.6 L627.3 1720.6 L630.2 1696.0 L633.2 1720.4 L636.1 1722.2 L639.1 1699.8 L642.0 1728.2 L645.0 1727.7 L647.9 1722.1 L650.9 1718.6 L653.9 1626.5 L656.8 1669.3 L659.8 1672.9 L662.7 1694.4 L665.7 1702.2 L668.6 1692.3 L671.6 1693.6 L674.6 1720.8 L677.5 1698.1 L680.5 1696.3 L683.4 1722.0 L686.4 1721.3 L689.3 1694.4 L692.3 1696.2 L695.3 1702.1 L698.2 1721.8 L701.2 1720.7 L704.1 1692.1 L707.1 1725.0 L710.0 1726.5 L713.0 1697.8 L715.9 1721.0 L718.9 1719.5 L721.9 1698.5 L724.8 1726.8 L727.8 1692.9 L730.7 1699.8 L733.7 1699.8 L736.6 1721.5 L739.6 1719.1 L742.6 1669.8 L745.5 1720.6 L748.5 1679.5 L751.4 1702.9 L754.4 1726.8 L757.3 1697.8 L760.3 1693.4 L763.2 1700.7 L766.2 1728.2 L769.2 1701.0 L772.1 1720.7 L775.1 1694.0 L778.0 1692.2 L781.0 1694.4 L783.9 1695.6 L786.9 1722.1 L789.9 1691.8 L792.8 1700.7 L795.8 1695.4 L798.7 1718.5 L801.7 1696.7 L804.6 1718.4 L807.6 1727.4 L810.6 1693.9 L813.5 1719.5 L816.5 1701.1 L819.4 1701.5 L822.4 1694.4 L825.3 1691.8 L828.3 1702.1 L831.2 1699.7 L834.2 1696.9 L837.2 1699.4 L840.1 1692.3 L843.1 1691.5 L846.0 1700.7 L849.0 1668.5 L851.9 1698.3 L854.9 1697.2 L857.9 1722.4 L860.8 1692.0 L863.8 1701.6 L866.7 1692.3 L869.7 1726.2 L872.6 1701.6 L875.6 1726.2 L878.5 1699.3 L881.5 1701.9 L884.5 1722.7 L887.4 1722.5 L890.4 1723.8 L893.3 1726.1 L896.3 1696.8 L899.2 1692.8 L902.2 1693.4 L905.2 1724.9 L908.1 1717.4 L911.1 1725.7 L914.0 1727.3 L917.0 1719.7 L919.9 1678.6 L922.9 1692.2 L925.8 1722.8 L928.8 1694.9 L931.8 1674.0 L934.7 1696.3 L937.7 1726.1 L940.6 1692.0 L943.6 1717.9 L946.5 1699.2 L949.5 1698.0" fill="none" stroke="#8e8e8e" stroke-width="2" stroke-linejoin="round"/>
</svg>
<div class="t" style="left:268.0px;top:1589.21px;line-height:73px;color:#8a8a8a;transform:translateX(-50%)"><span style="font-size:73px;letter-spacing:0px;-webkit-text-stroke:1.2px #8a8a8a">410</span><span style="font-size:41px;letter-spacing:0px;-webkit-text-stroke:0.72px #8a8a8a;margin-left:0px;"> ms</span></div>
<div class="t" style="left:733.0px;top:1589.21px;line-height:73px;color:#8a8a8a;transform:translateX(-50%)"><span style="font-size:73px;letter-spacing:0px;-webkit-text-stroke:1.2px #8a8a8a">95.9</span><span style="font-size:41px;letter-spacing:0px;-webkit-text-stroke:0.72px #8a8a8a;margin-left:0px;"> ms</span></div>
<div class="panel" style="left:969px;top:538px;width:2756px;height:592px;"></div>
<div class="t" style="left:2347.0px;top:558.55px;font-size:27.7px;line-height:27.7px;color:#ccccdc;font-weight:400;-webkit-text-stroke:0.55px #ccccdc;transform:translateX(-50%);">HTTP duration</div>
<svg width="3757" height="1816">
<rect x="1079" y="963.0" width="2562" height="2" fill="#3d3f44"/>
<rect x="1079" y="897.9" width="2562" height="2" fill="#3d3f44"/>
<rect x="1079" y="832.8" width="2562" height="2" fill="#3d3f44"/>
<rect x="1079" y="767.7" width="2562" height="2" fill="#3d3f44"/>
<rect x="1079" y="702.6" width="2562" height="2" fill="#3d3f44"/>
<rect x="1079" y="637.5" width="2562" height="2" fill="#3d3f44"/>
<rect x="1189.0" y="638" width="2" height="327" fill="#3d3f44"/>
<rect x="1402.5" y="638" width="2" height="327" fill="#3d3f44"/>
<rect x="1615.9" y="638" width="2" height="327" fill="#3d3f44"/>
<rect x="1829.3" y="638" width="2" height="327" fill="#3d3f44"/>
<rect x="2042.8" y="638" width="2" height="327" fill="#3d3f44"/>
<rect x="2256.2" y="638" width="2" height="327" fill="#3d3f44"/>
<rect x="2469.7" y="638" width="2" height="327" fill="#3d3f44"/>
<rect x="2683.1" y="638" width="2" height="327" fill="#3d3f44"/>
<rect x="2896.6" y="638" width="2" height="327" fill="#3d3f44"/>
<rect x="3110.1" y="638" width="2" height="327" fill="#3d3f44"/>
<rect x="3323.5" y="638" width="2" height="327" fill="#3d3f44"/>
<rect x="3536.9" y="638" width="2" height="327" fill="#3d3f44"/>
<path d="M1079.0 935.7 L1082.6 930.2 L1086.1 920.1 L1089.7 915.9 L1093.2 929.5 L1096.8 925.3 L1100.4 933.4 L1103.9 938.3 L1107.5 929.6 L1111.0 750.5 L1114.6 921.0 L1118.2 912.8 L1121.7 916.7 L1125.3 934.0 L1128.8 932.7 L1132.4 918.3 L1135.9 919.6 L1139.5 818.2 L1143.1 816.9 L1146.6 936.4 L1150.2 916.1 L1153.7 939.6 L1157.3 937.9 L1160.9 915.3 L1164.4 933.2 L1168.0 928.7 L1171.5 945.6 L1175.1 931.2 L1178.7 940.8 L1182.2 916.9 L1185.8 929.9 L1189.3 926.4 L1192.9 917.4 L1196.5 923.1 L1200.0 916.4 L1203.6 941.6 L1207.1 941.3 L1210.7 854.6 L1214.2 924.2 L1217.8 917.7 L1221.4 916.8 L1224.9 926.4 L1228.5 933.7 L1232.0 934.0 L1235.6 941.2 L1239.2 933.8 L1242.7 935.7 L1246.3 914.3 L1249.8 920.2 L1253.4 937.5 L1257.0 918.8 L1260.5 938.7 L1264.1 920.9 L1267.6 934.6 L1271.2 920.9 L1274.8 934.3 L1278.3 932.8 L1281.9 880.0 L1285.4 941.7 L1289.0 916.2 L1292.5 917.7 L1296.1 920.1 L1299.7 934.3 L1303.2 940.1 L1306.8 832.5 L1310.3 917.8 L1313.9 910.3 L1317.5 934.1 L1321.0 931.1 L1324.6 933.0 L1328.1 929.4 L1331.7 936.7 L1335.3 937.4 L1338.8 930.5 L1342.4 910.9 L1345.9 928.1 L1349.5 916.8 L1353.1 818.2 L1356.6 939.6 L1360.2 933.7 L1363.7 798.6 L1367.3 920.0 L1370.8 845.5 L1374.4 926.1 L1378.0 921.0 L1381.5 932.2 L1385.1 930.9 L1388.6 854.6 L1392.2 940.0 L1395.8 919.0 L1399.3 918.5 L1402.9 912.1 L1406.4 918.8 L1410.0 932.0 L1413.6 929.5 L1417.1 939.3 L1420.7 941.3 L1424.2 919.9 L1427.8 849.4 L1431.4 940.9 L1434.9 906.7 L1438.5 940.3 L1442.0 920.3 L1445.6 935.4 L1449.1 931.6 L1452.7 941.2 L1456.3 916.5 L1459.8 937.7 L1463.4 924.3 L1466.9 925.1 L1470.5 885.5 L1474.1 742.7 L1477.6 937.0 L1481.2 926.6 L1484.7 923.9 L1488.3 923.5 L1491.9 926.6 L1495.4 941.3 L1499.0 937.4 L1502.5 901.0 L1506.1 926.3 L1509.7 920.5 L1513.2 923.1 L1516.8 922.8 L1520.3 935.9 L1523.9 758.3 L1527.4 935.6 L1531.0 937.0 L1534.6 918.4 L1538.1 878.1 L1541.7 921.6 L1545.2 932.6 L1548.8 888.5 L1552.4 929.2 L1555.9 917.0 L1559.5 903.8 L1563.0 767.4 L1566.6 888.9 L1570.2 921.8 L1573.7 924.3 L1577.3 879.4 L1580.8 932.8 L1584.4 932.7 L1588.0 927.1 L1591.5 828.6 L1595.1 938.7 L1598.6 933.2 L1602.2 927.4 L1605.7 928.7 L1609.3 922.2 L1612.9 932.5 L1616.4 906.7 L1620.0 921.8 L1623.5 931.4 L1627.1 939.0 L1630.7 922.2 L1634.2 937.1 L1637.8 858.5 L1641.3 915.8 L1644.9 928.1 L1648.5 946.6 L1652.0 918.7 L1655.6 927.5 L1659.1 892.4 L1662.7 919.5 L1666.3 906.0 L1669.8 929.1 L1673.4 945.3 L1676.9 925.0 L1680.5 916.9 L1684.0 878.3 L1687.6 803.9 L1691.2 933.5 L1694.7 938.4 L1698.3 917.7 L1701.8 932.9 L1705.4 919.4 L1709.0 930.3 L1712.5 789.5 L1716.1 884.8 L1719.6 933.9 L1723.2 931.4 L1726.8 923.1 L1730.3 928.1 L1733.9 941.8 L1737.4 938.1 L1741.0 861.1 L1744.6 934.4 L1748.1 928.8 L1751.7 912.8 L1755.2 845.5 L1758.8 939.4 L1762.3 925.7 L1765.9 940.5 L1769.5 872.9 L1773.0 934.0 L1776.6 920.7 L1780.1 939.4 L1783.7 927.5 L1787.3 925.9 L1790.8 880.4 L1794.4 773.9 L1797.9 876.6 L1801.5 833.8 L1805.1 938.9 L1808.6 924.2 L1812.2 922.6 L1815.7 927.5 L1819.3 931.1 L1822.9 929.4 L1826.4 923.1 L1830.0 931.8 L1833.5 911.6 L1837.1 916.3 L1840.6 925.1 L1844.2 930.2 L1847.8 940.7 L1851.3 908.1 L1854.9 930.3 L1858.4 931.1 L1862.0 916.7 L1865.6 771.3 L1869.1 904.5 L1872.7 923.5 L1876.2 916.7 L1879.8 939.6 L1883.4 920.3 L1886.9 922.0 L1890.5 937.7 L1894.0 926.4 L1897.6 927.8 L1901.2 939.9 L1904.7 940.0 L1908.3 930.9 L1911.8 893.8 L1915.4 754.4 L1918.9 937.6 L1922.5 919.1 L1926.1 917.6 L1929.6 917.2 L1933.2 929.3 L1936.7 915.9 L1940.3 928.0 L1943.9 934.2 L1947.4 940.8 L1951.0 930.6 L1954.5 929.1 L1958.1 924.7 L1961.7 923.6 L1965.2 919.1 L1968.8 933.7 L1972.3 927.8 L1975.9 934.4 L1979.5 920.8 L1983.0 914.7 L1986.6 923.2 L1990.1 841.6 L1993.7 927.0 L1997.3 941.5 L2000.8 947.3 L2004.4 935.4 L2007.9 923.9 L2011.5 872.9 L2015.0 918.7 L2018.6 928.6 L2022.2 930.4 L2025.7 918.5 L2029.3 924.5 L2032.8 877.7 L2036.4 806.5 L2040.0 894.7 L2043.5 932.7 L2047.1 930.1 L2050.6 799.9 L2054.2 807.8 L2057.8 912.3 L2061.3 929.2 L2064.9 902.9 L2068.4 928.5 L2072.0 925.1 L2075.6 937.1 L2079.1 885.9 L2082.7 917.3 L2086.2 926.4 L2089.8 880.7 L2093.3 939.8 L2096.9 900.5 L2100.5 772.6 L2104.0 910.7 L2107.6 940.9 L2111.1 897.7 L2114.7 916.0 L2118.3 921.4 L2121.8 936.9 L2125.4 940.6 L2128.9 921.4 L2132.5 928.2 L2136.1 938.3 L2139.6 917.4 L2143.2 935.5 L2146.7 929.2 L2150.3 892.4 L2153.9 921.5 L2157.4 927.9 L2161.0 920.2 L2164.5 917.6 L2168.1 916.8 L2171.6 947.8 L2175.2 935.2 L2178.8 919.2 L2182.3 924.0 L2185.9 939.5 L2189.4 938.1 L2193.0 928.7 L2196.6 932.5 L2200.1 917.5 L2203.7 934.4 L2207.2 938.7 L2210.8 892.4 L2214.4 916.7 L2217.9 928.0 L2221.5 928.1 L2225.0 940.1 L2228.6 903.3 L2232.2 916.3 L2235.7 927.6 L2239.3 919.3 L2242.8 934.0 L2246.4 932.2 L2249.9 919.0 L2253.5 920.6 L2257.1 921.5 L2260.6 928.0 L2264.2 920.1 L2267.7 879.7 L2271.3 745.3 L2274.9 908.6 L2278.4 941.3 L2282.0 937.1 L2285.5 928.5 L2289.1 937.5 L2292.7 879.4 L2296.2 912.0 L2299.8 930.9 L2303.3 933.2 L2306.9 918.8 L2310.5 948.4 L2314.0 934.3 L2317.6 929.7 L2321.1 934.5 L2324.7 928.1 L2328.2 885.9 L2331.8 932.6 L2335.4 919.5 L2338.9 940.3 L2342.5 936.8 L2346.0 932.7 L2349.6 931.5 L2353.2 940.9 L2356.7 927.3 L2360.3 923.6 L2363.8 929.7 L2367.4 930.4 L2371.0 872.9 L2374.5 909.4 L2378.1 927.8 L2381.6 913.1 L2385.2 929.1 L2388.8 918.5 L2392.3 920.6 L2395.9 915.9 L2399.4 923.2 L2403.0 913.8 L2406.5 929.4 L2410.1 930.2 L2413.7 863.7 L2417.2 927.5 L2420.8 918.8 L2424.3 920.1 L2427.9 941.6 L2431.5 932.7 L2435.0 935.4 L2438.6 918.5 L2442.1 912.4 L2445.7 828.6 L2449.3 929.3 L2452.8 924.5 L2456.4 919.2 L2459.9 940.1 L2463.5 897.4 L2467.1 762.2 L2470.6 891.2 L2474.2 936.7 L2477.7 828.6 L2481.3 939.3 L2484.8 832.5 L2488.4 933.4 L2492.0 869.0 L2495.5 883.9 L2499.1 776.5 L2502.6 881.8 L2506.2 932.1 L2509.8 925.2 L2513.3 928.7 L2516.9 931.9 L2520.4 922.4 L2524.0 937.7 L2527.6 929.2 L2531.1 927.7 L2534.7 923.2 L2538.2 933.0 L2541.8 931.7 L2545.4 926.0 L2548.9 839.0 L2552.5 924.7 L2556.0 879.4 L2559.6 920.9 L2563.1 933.4 L2566.7 921.0 L2570.3 921.8 L2573.8 927.7 L2577.4 931.6 L2580.9 854.6 L2584.5 926.2 L2588.1 928.3 L2591.6 940.2 L2595.2 939.3 L2598.7 925.6 L2602.3 905.7 L2605.9 878.8 L2609.4 764.8 L2613.0 887.5 L2616.5 929.3 L2620.1 933.9 L2623.7 932.1 L2627.2 940.7 L2630.8 939.7 L2634.3 921.8 L2637.9 939.7 L2641.4 839.0 L2645.0 917.7 L2648.6 882.7 L2652.1 799.9 L2655.7 888.4 L2659.2 932.6 L2662.8 917.0 L2666.4 824.7 L2669.9 926.0 L2673.5 926.9 L2677.0 918.9 L2680.6 835.1 L2684.2 932.4 L2687.7 936.2 L2691.3 926.1 L2694.8 939.2 L2698.4 932.0 L2702.0 936.7 L2705.5 923.2 L2709.1 918.7 L2712.6 899.3 L2716.2 879.4 L2719.7 770.0 L2723.3 923.0 L2726.9 930.9 L2730.4 930.3 L2734.0 933.6 L2737.5 872.9 L2741.1 936.1 L2744.7 918.4 L2748.2 936.2 L2751.8 892.4 L2755.3 920.1 L2758.9 912.4 L2762.5 937.8 L2766.0 925.9 L2769.6 940.4 L2773.1 934.4 L2776.7 917.8 L2780.3 939.1 L2783.8 932.9 L2787.4 933.5 L2790.9 930.3 L2794.5 927.7 L2798.1 934.3 L2801.6 930.5 L2805.2 920.5 L2808.7 839.0 L2812.3 932.1 L2815.8 941.6 L2819.4 929.0 L2823.0 923.2 L2826.5 855.9 L2830.1 930.0 L2833.6 920.0 L2837.2 916.8 L2840.8 930.1 L2844.3 915.9 L2847.9 913.3 L2851.4 920.2 L2855.0 857.2 L2858.6 940.9 L2862.1 936.3 L2865.7 925.7 L2869.2 941.5 L2872.8 916.6 L2876.4 938.5 L2879.9 928.3 L2883.5 889.8 L2887.0 934.5 L2890.6 918.4 L2894.1 928.3 L2897.7 933.1 L2901.3 914.5 L2904.8 926.4 L2908.4 937.8 L2911.9 926.2 L2915.5 924.9 L2919.1 926.2 L2922.6 892.4 L2926.2 936.9 L2929.7 907.6 L2933.3 923.3 L2936.9 938.4 L2940.4 934.6 L2944.0 930.0 L2947.5 924.7 L2951.1 941.8 L2954.7 940.7 L2958.2 934.2 L2961.8 882.4 L2965.3 780.4 L2968.9 932.1 L2972.4 878.1 L2976.0 935.7 L2979.6 940.3 L2983.1 907.2 L2986.7 919.4 L2990.2 904.5 L2993.8 757.0 L2997.4 917.6 L3000.9 916.5 L3004.5 938.7 L3008.0 939.4 L3011.6 919.0 L3015.2 911.5 L3018.7 930.7 L3022.3 922.6 L3025.8 932.6 L3029.4 776.5 L3033.0 881.6 L3036.5 941.9 L3040.1 936.8 L3043.6 916.8 L3047.2 919.2 L3050.7 920.3 L3054.3 746.6 L3057.9 881.4 L3061.4 926.9 L3065.0 934.0 L3068.5 883.3 L3072.1 925.1 L3075.7 916.4 L3079.2 934.6 L3082.8 920.5 L3086.3 923.1 L3089.9 926.5 L3093.5 931.4 L3097.0 917.2 L3100.6 902.3 L3104.1 926.7 L3107.7 938.6 L3111.3 917.6 L3114.8 922.2 L3118.4 866.4 L3121.9 913.4 L3125.5 918.1 L3129.0 925.6 L3132.6 932.6 L3136.2 946.1 L3139.7 908.7 L3143.3 926.5 L3146.8 920.4 L3150.4 933.5 L3154.0 859.8 L3157.5 921.2 L3161.1 901.5 L3164.6 918.5 L3168.2 921.4 L3171.8 940.7 L3175.3 934.0 L3178.9 920.4 L3182.4 920.9 L3186.0 946.5 L3189.6 925.7 L3193.1 930.5 L3196.7 921.5 L3200.2 920.1 L3203.8 923.7 L3207.3 933.1 L3210.9 881.2 L3214.5 767.4 L3218.0 893.5 L3221.6 938.6 L3225.1 921.1 L3228.7 938.9 L3232.3 915.6 L3235.8 935.7 L3239.4 917.0 L3242.9 946.2 L3246.5 906.6 L3250.1 946.6 L3253.6 923.4 L3257.2 919.6 L3260.7 931.9 L3264.3 927.6 L3267.9 933.5 L3271.4 917.3 L3275.0 936.3 L3278.5 892.4 L3282.1 917.3 L3285.6 924.1 L3289.2 926.7 L3292.8 918.2 L3296.3 938.1 L3299.9 886.4 L3303.4 789.5 L3307.0 931.5 L3310.6 916.2 L3314.1 934.0 L3317.7 935.2 L3321.2 926.0 L3324.8 939.3 L3328.4 923.3 L3331.9 939.0 L3335.5 923.4 L3339.0 926.7 L3342.6 939.9 L3346.2 940.8 L3349.7 925.9 L3353.3 917.5 L3356.8 924.2 L3360.4 937.3 L3363.9 932.7 L3367.5 921.2 L3371.1 933.8 L3374.6 910.2 L3378.2 780.4 L3381.7 901.8 L3385.3 898.9 L3388.9 948.4 L3392.4 934.0 L3396.0 938.3 L3399.5 928.7 L3403.1 935.4 L3406.7 927.5 L3410.2 933.0 L3413.8 878.1 L3417.3 918.6 L3420.9 914.5 L3424.5 925.2 L3428.0 763.5 L3431.6 928.3 L3435.1 936.9 L3438.7 927.2 L3442.2 757.0 L3445.8 906.5 L3449.4 932.9 L3452.9 903.9 L3456.5 896.8 L3460.0 747.9 L3463.6 933.2 L3467.2 875.5 L3470.7 919.5 L3474.3 924.0 L3477.8 927.1 L3481.4 930.9 L3485.0 928.6 L3488.5 938.0 L3492.1 934.7 L3495.6 907.1 L3499.2 938.0 L3502.8 927.9 L3506.3 941.2 L3509.9 919.6 L3513.4 917.6 L3517.0 919.5 L3520.5 916.9 L3524.1 777.8 L3527.7 926.2 L3531.2 934.7 L3534.8 671.7 L3538.3 928.7 L3541.9 935.2 L3545.5 932.8 L3549.0 930.1 L3552.6 839.7 L3552.6 964 L1079.0 964 Z" fill="rgba(115,191,105,0.10)"/><path d="M1079.0 935.7 L1082.6 930.2 L1086.1 920.1 L1089.7 915.9 L1093.2 929.5 L1096.8 925.3 L1100.4 933.4 L1103.9 938.3 L1107.5 929.6 L1111.0 750.5 L1114.6 921.0 L1118.2 912.8 L1121.7 916.7 L1125.3 934.0 L1128.8 932.7 L1132.4 918.3 L1135.9 919.6 L1139.5 818.2 L1143.1 816.9 L1146.6 936.4 L1150.2 916.1 L1153.7 939.6 L1157.3 937.9 L1160.9 915.3 L1164.4 933.2 L1168.0 928.7 L1171.5 945.6 L1175.1 931.2 L1178.7 940.8 L1182.2 916.9 L1185.8 929.9 L1189.3 926.4 L1192.9 917.4 L1196.5 923.1 L1200.0 916.4 L1203.6 941.6 L1207.1 941.3 L1210.7 854.6 L1214.2 924.2 L1217.8 917.7 L1221.4 916.8 L1224.9 926.4 L1228.5 933.7 L1232.0 934.0 L1235.6 941.2 L1239.2 933.8 L1242.7 935.7 L1246.3 914.3 L1249.8 920.2 L1253.4 937.5 L1257.0 918.8 L1260.5 938.7 L1264.1 920.9 L1267.6 934.6 L1271.2 920.9 L1274.8 934.3 L1278.3 932.8 L1281.9 880.0 L1285.4 941.7 L1289.0 916.2 L1292.5 917.7 L1296.1 920.1 L1299.7 934.3 L1303.2 940.1 L1306.8 832.5 L1310.3 917.8 L1313.9 910.3 L1317.5 934.1 L1321.0 931.1 L1324.6 933.0 L1328.1 929.4 L1331.7 936.7 L1335.3 937.4 L1338.8 930.5 L1342.4 910.9 L1345.9 928.1 L1349.5 916.8 L1353.1 818.2 L1356.6 939.6 L1360.2 933.7 L1363.7 798.6 L1367.3 920.0 L1370.8 845.5 L1374.4 926.1 L1378.0 921.0 L1381.5 932.2 L1385.1 930.9 L1388.6 854.6 L1392.2 940.0 L1395.8 919.0 L1399.3 918.5 L1402.9 912.1 L1406.4 918.8 L1410.0 932.0 L1413.6 929.5 L1417.1 939.3 L1420.7 941.3 L1424.2 919.9 L1427.8 849.4 L1431.4 940.9 L1434.9 906.7 L1438.5 940.3 L1442.0 920.3 L1445.6 935.4 L1449.1 931.6 L1452.7 941.2 L1456.3 916.5 L1459.8 937.7 L1463.4 924.3 L1466.9 925.1 L1470.5 885.5 L1474.1 742.7 L1477.6 937.0 L1481.2 926.6 L1484.7 923.9 L1488.3 923.5 L1491.9 926.6 L1495.4 941.3 L1499.0 937.4 L1502.5 901.0 L1506.1 926.3 L1509.7 920.5 L1513.2 923.1 L1516.8 922.8 L1520.3 935.9 L1523.9 758.3 L1527.4 935.6 L1531.0 937.0 L1534.6 918.4 L1538.1 878.1 L1541.7 921.6 L1545.2 932.6 L1548.8 888.5 L1552.4 929.2 L1555.9 917.0 L1559.5 903.8 L1563.0 767.4 L1566.6 888.9 L1570.2 921.8 L1573.7 924.3 L1577.3 879.4 L1580.8 932.8 L1584.4 932.7 L1588.0 927.1 L1591.5 828.6 L1595.1 938.7 L1598.6 933.2 L1602.2 927.4 L1605.7 928.7 L1609.3 922.2 L1612.9 932.5 L1616.4 906.7 L1620.0 921.8 L1623.5 931.4 L1627.1 939.0 L1630.7 922.2 L1634.2 937.1 L1637.8 858.5 L1641.3 915.8 L1644.9 928.1 L1648.5 946.6 L1652.0 918.7 L1655.6 927.5 L1659.1 892.4 L1662.7 919.5 L1666.3 906.0 L1669.8 929.1 L1673.4 945.3 L1676.9 925.0 L1680.5 916.9 L1684.0 878.3 L1687.6 803.9 L1691.2 933.5 L1694.7 938.4 L1698.3 917.7 L1701.8 932.9 L1705.4 919.4 L1709.0 930.3 L1712.5 789.5 L1716.1 884.8 L1719.6 933.9 L1723.2 931.4 L1726.8 923.1 L1730.3 928.1 L1733.9 941.8 L1737.4 938.1 L1741.0 861.1 L1744.6 934.4 L1748.1 928.8 L1751.7 912.8 L1755.2 845.5 L1758.8 939.4 L1762.3 925.7 L1765.9 940.5 L1769.5 872.9 L1773.0 934.0 L1776.6 920.7 L1780.1 939.4 L1783.7 927.5 L1787.3 925.9 L1790.8 880.4 L1794.4 773.9 L1797.9 876.6 L1801.5 833.8 L1805.1 938.9 L1808.6 924.2 L1812.2 922.6 L1815.7 927.5 L1819.3 931.1 L1822.9 929.4 L1826.4 923.1 L1830.0 931.8 L1833.5 911.6 L1837.1 916.3 L1840.6 925.1 L1844.2 930.2 L1847.8 940.7 L1851.3 908.1 L1854.9 930.3 L1858.4 931.1 L1862.0 916.7 L1865.6 771.3 L1869.1 904.5 L1872.7 923.5 L1876.2 916.7 L1879.8 939.6 L1883.4 920.3 L1886.9 922.0 L1890.5 937.7 L1894.0 926.4 L1897.6 927.8 L1901.2 939.9 L1904.7 940.0 L1908.3 930.9 L1911.8 893.8 L1915.4 754.4 L1918.9 937.6 L1922.5 919.1 L1926.1 917.6 L1929.6 917.2 L1933.2 929.3 L1936.7 915.9 L1940.3 928.0 L1943.9 934.2 L1947.4 940.8 L1951.0 930.6 L1954.5 929.1 L1958.1 924.7 L1961.7 923.6 L1965.2 919.1 L1968.8 933.7 L1972.3 927.8 L1975.9 934.4 L1979.5 920.8 L1983.0 914.7 L1986.6 923.2 L1990.1 841.6 L1993.7 927.0 L1997.3 941.5 L2000.8 947.3 L2004.4 935.4 L2007.9 923.9 L2011.5 872.9 L2015.0 918.7 L2018.6 928.6 L2022.2 930.4 L2025.7 918.5 L2029.3 924.5 L2032.8 877.7 L2036.4 806.5 L2040.0 894.7 L2043.5 932.7 L2047.1 930.1 L2050.6 799.9 L2054.2 807.8 L2057.8 912.3 L2061.3 929.2 L2064.9 902.9 L2068.4 928.5 L2072.0 925.1 L2075.6 937.1 L2079.1 885.9 L2082.7 917.3 L2086.2 926.4 L2089.8 880.7 L2093.3 939.8 L2096.9 900.5 L2100.5 772.6 L2104.0 910.7 L2107.6 940.9 L2111.1 897.7 L2114.7 916.0 L2118.3 921.4 L2121.8 936.9 L2125.4 940.6 L2128.9 921.4 L2132.5 928.2 L2136.1 938.3 L2139.6 917.4 L2143.2 935.5 L2146.7 929.2 L2150.3 892.4 L2153.9 921.5 L2157.4 927.9 L2161.0 920.2 L2164.5 917.6 L2168.1 916.8 L2171.6 947.8 L2175.2 935.2 L2178.8 919.2 L2182.3 924.0 L2185.9 939.5 L2189.4 938.1 L2193.0 928.7 L2196.6 932.5 L2200.1 917.5 L2203.7 934.4 L2207.2 938.7 L2210.8 892.4 L2214.4 916.7 L2217.9 928.0 L2221.5 928.1 L2225.0 940.1 L2228.6 903.3 L2232.2 916.3 L2235.7 927.6 L2239.3 919.3 L2242.8 934.0 L2246.4 932.2 L2249.9 919.0 L2253.5 920.6 L2257.1 921.5 L2260.6 928.0 L2264.2 920.1 L2267.7 879.7 L2271.3 745.3 L2274.9 908.6 L2278.4 941.3 L2282.0 937.1 L2285.5 928.5 L2289.1 937.5 L2292.7 879.4 L2296.2 912.0 L2299.8 930.9 L2303.3 933.2 L2306.9 918.8 L2310.5 948.4 L2314.0 934.3 L2317.6 929.7 L2321.1 934.5 L2324.7 928.1 L2328.2 885.9 L2331.8 932.6 L2335.4 919.5 L2338.9 940.3 L2342.5 936.8 L2346.0 932.7 L2349.6 931.5 L2353.2 940.9 L2356.7 927.3 L2360.3 923.6 L2363.8 929.7 L2367.4 930.4 L2371.0 872.9 L2374.5 909.4 L2378.1 927.8 L2381.6 913.1 L2385.2 929.1 L2388.8 918.5 L2392.3 920.6 L2395.9 915.9 L2399.4 923.2 L2403.0 913.8 L2406.5 929.4 L2410.1 930.2 L2413.7 863.7 L2417.2 927.5 L2420.8 918.8 L2424.3 920.1 L2427.9 941.6 L2431.5 932.7 L2435.0 935.4 L2438.6 918.5 L2442.1 912.4 L2445.7 828.6 L2449.3 929.3 L2452.8 924.5 L2456.4 919.2 L2459.9 940.1 L2463.5 897.4 L2467.1 762.2 L2470.6 891.2 L2474.2 936.7 L2477.7 828.6 L2481.3 939.3 L2484.8 832.5 L2488.4 933.4 L2492.0 869.0 L2495.5 883.9 L2499.1 776.5 L2502.6 881.8 L2506.2 932.1 L2509.8 925.2 L2513.3 928.7 L2516.9 931.9 L2520.4 922.4 L2524.0 937.7 L2527.6 929.2 L2531.1 927.7 L2534.7 923.2 L2538.2 933.0 L2541.8 931.7 L2545.4 926.0 L2548.9 839.0 L2552.5 924.7 L2556.0 879.4 L2559.6 920.9 L2563.1 933.4 L2566.7 921.0 L2570.3 921.8 L2573.8 927.7 L2577.4 931.6 L2580.9 854.6 L2584.5 926.2 L2588.1 928.3 L2591.6 940.2 L2595.2 939.3 L2598.7 925.6 L2602.3 905.7 L2605.9 878.8 L2609.4 764.8 L2613.0 887.5 L2616.5 929.3 L2620.1 933.9 L2623.7 932.1 L2627.2 940.7 L2630.8 939.7 L2634.3 921.8 L2637.9 939.7 L2641.4 839.0 L2645.0 917.7 L2648.6 882.7 L2652.1 799.9 L2655.7 888.4 L2659.2 932.6 L2662.8 917.0 L2666.4 824.7 L2669.9 926.0 L2673.5 926.9 L2677.0 918.9 L2680.6 835.1 L2684.2 932.4 L2687.7 936.2 L2691.3 926.1 L2694.8 939.2 L2698.4 932.0 L2702.0 936.7 L2705.5 923.2 L2709.1 918.7 L2712.6 899.3 L2716.2 879.4 L2719.7 770.0 L2723.3 923.0 L2726.9 930.9 L2730.4 930.3 L2734.0 933.6 L2737.5 872.9 L2741.1 936.1 L2744.7 918.4 L2748.2 936.2 L2751.8 892.4 L2755.3 920.1 L2758.9 912.4 L2762.5 937.8 L2766.0 925.9 L2769.6 940.4 L2773.1 934.4 L2776.7 917.8 L2780.3 939.1 L2783.8 932.9 L2787.4 933.5 L2790.9 930.3 L2794.5 927.7 L2798.1 934.3 L2801.6 930.5 L2805.2 920.5 L2808.7 839.0 L2812.3 932.1 L2815.8 941.6 L2819.4 929.0 L2823.0 923.2 L2826.5 855.9 L2830.1 930.0 L2833.6 920.0 L2837.2 916.8 L2840.8 930.1 L2844.3 915.9 L2847.9 913.3 L2851.4 920.2 L2855.0 857.2 L2858.6 940.9 L2862.1 936.3 L2865.7 925.7 L2869.2 941.5 L2872.8 916.6 L2876.4 938.5 L2879.9 928.3 L2883.5 889.8 L2887.0 934.5 L2890.6 918.4 L2894.1 928.3 L2897.7 933.1 L2901.3 914.5 L2904.8 926.4 L2908.4 937.8 L2911.9 926.2 L2915.5 924.9 L2919.1 926.2 L2922.6 892.4 L2926.2 936.9 L2929.7 907.6 L2933.3 923.3 L2936.9 938.4 L2940.4 934.6 L2944.0 930.0 L2947.5 924.7 L2951.1 941.8 L2954.7 940.7 L2958.2 934.2 L2961.8 882.4 L2965.3 780.4 L2968.9 932.1 L2972.4 878.1 L2976.0 935.7 L2979.6 940.3 L2983.1 907.2 L2986.7 919.4 L2990.2 904.5 L2993.8 757.0 L2997.4 917.6 L3000.9 916.5 L3004.5 938.7 L3008.0 939.4 L3011.6 919.0 L3015.2 911.5 L3018.7 930.7 L3022.3 922.6 L3025.8 932.6 L3029.4 776.5 L3033.0 881.6 L3036.5 941.9 L3040.1 936.8 L3043.6 916.8 L3047.2 919.2 L3050.7 920.3 L3054.3 746.6 L3057.9 881.4 L3061.4 926.9 L3065.0 934.0 L3068.5 883.3 L3072.1 925.1 L3075.7 916.4 L3079.2 934.6 L3082.8 920.5 L3086.3 923.1 L3089.9 926.5 L3093.5 931.4 L3097.0 917.2 L3100.6 902.3 L3104.1 926.7 L3107.7 938.6 L3111.3 917.6 L3114.8 922.2 L3118.4 866.4 L3121.9 913.4 L3125.5 918.1 L3129.0 925.6 L3132.6 932.6 L3136.2 946.1 L3139.7 908.7 L3143.3 926.5 L3146.8 920.4 L3150.4 933.5 L3154.0 859.8 L3157.5 921.2 L3161.1 901.5 L3164.6 918.5 L3168.2 921.4 L3171.8 940.7 L3175.3 934.0 L3178.9 920.4 L3182.4 920.9 L3186.0 946.5 L3189.6 925.7 L3193.1 930.5 L3196.7 921.5 L3200.2 920.1 L3203.8 923.7 L3207.3 933.1 L3210.9 881.2 L3214.5 767.4 L3218.0 893.5 L3221.6 938.6 L3225.1 921.1 L3228.7 938.9 L3232.3 915.6 L3235.8 935.7 L3239.4 917.0 L3242.9 946.2 L3246.5 906.6 L3250.1 946.6 L3253.6 923.4 L3257.2 919.6 L3260.7 931.9 L3264.3 927.6 L3267.9 933.5 L3271.4 917.3 L3275.0 936.3 L3278.5 892.4 L3282.1 917.3 L3285.6 924.1 L3289.2 926.7 L3292.8 918.2 L3296.3 938.1 L3299.9 886.4 L3303.4 789.5 L3307.0 931.5 L3310.6 916.2 L3314.1 934.0 L3317.7 935.2 L3321.2 926.0 L3324.8 939.3 L3328.4 923.3 L3331.9 939.0 L3335.5 923.4 L3339.0 926.7 L3342.6 939.9 L3346.2 940.8 L3349.7 925.9 L3353.3 917.5 L3356.8 924.2 L3360.4 937.3 L3363.9 932.7 L3367.5 921.2 L3371.1 933.8 L3374.6 910.2 L3378.2 780.4 L3381.7 901.8 L3385.3 898.9 L3388.9 948.4 L3392.4 934.0 L3396.0 938.3 L3399.5 928.7 L3403.1 935.4 L3406.7 927.5 L3410.2 933.0 L3413.8 878.1 L3417.3 918.6 L3420.9 914.5 L3424.5 925.2 L3428.0 763.5 L3431.6 928.3 L3435.1 936.9 L3438.7 927.2 L3442.2 757.0 L3445.8 906.5 L3449.4 932.9 L3452.9 903.9 L3456.5 896.8 L3460.0 747.9 L3463.6 933.2 L3467.2 875.5 L3470.7 919.5 L3474.3 924.0 L3477.8 927.1 L3481.4 930.9 L3485.0 928.6 L3488.5 938.0 L3492.1 934.7 L3495.6 907.1 L3499.2 938.0 L3502.8 927.9 L3506.3 941.2 L3509.9 919.6 L3513.4 917.6 L3517.0 919.5 L3520.5 916.9 L3524.1 777.8 L3527.7 926.2 L3531.2 934.7 L3534.8 671.7 L3538.3 928.7 L3541.9 935.2 L3545.5 932.8 L3549.0 930.1 L3552.6 839.7" fill="none" stroke="#7ab96f" stroke-width="2" stroke-linejoin="round"/>
<path d="M3559.7 743.3 L3563.3 918.4 L3566.8 930.3 L3570.4 905.9 L3573.9 933.0 L3577.5 921.4 L3581.1 918.4 L3584.6 922.0 L3588.2 879.4 L3591.7 940.5 L3595.3 847.5 L3598.8 935.6 L3602.4 913.1 L3606.0 924.6 L3609.5 926.2 L3613.1 912.7 L3616.6 937.1 L3620.2 932.8 L3623.8 928.3 L3627.3 822.1 L3630.9 859.8 L3634.4 916.4 L3638.0 914.5 L3638.0 964 L3559.7 964 Z" fill="rgba(115,191,105,0.10)"/><path d="M3559.7 743.3 L3563.3 918.4 L3566.8 930.3 L3570.4 905.9 L3573.9 933.0 L3577.5 921.4 L3581.1 918.4 L3584.6 922.0 L3588.2 879.4 L3591.7 940.5 L3595.3 847.5 L3598.8 935.6 L3602.4 913.1 L3606.0 924.6 L3609.5 926.2 L3613.1 912.7 L3616.6 937.1 L3620.2 932.8 L3623.8 928.3 L3627.3 822.1 L3630.9 859.8 L3634.4 916.4 L3638.0 914.5" fill="none" stroke="#7ab96f" stroke-width="2" stroke-linejoin="round"/>
</svg>
<div class="t" style="left:1067px;top:951.98px;font-size:24px;line-height:24px;color:#ccccdc;font-weight:400;transform:translateX(-100%);">0 s</div>
<div class="t" style="left:1067px;top:886.88px;font-size:24px;line-height:24px;color:#ccccdc;font-weight:400;transform:translateX(-100%);">500 ms</div>
<div class="t" style="left:1067px;top:821.78px;font-size:24px;line-height:24px;color:#ccccdc;font-weight:400;transform:translateX(-100%);">1 s</div>
<div class="t" style="left:1067px;top:756.68px;font-size:24px;line-height:24px;color:#ccccdc;font-weight:400;transform:translateX(-100%);">1.50 s</div>
<div class="t" style="left:1067px;top:691.58px;font-size:24px;line-height:24px;color:#ccccdc;font-weight:400;transform:translateX(-100%);">2 s</div>
<div class="t" style="left:1067px;top:626.48px;font-size:24px;line-height:24px;color:#ccccdc;font-weight:400;transform:translateX(-100%);">2.50 s</div>
<div class="t" style="left:1190.0px;top:982.18px;font-size:24px;line-height:24px;color:#ccccdc;font-weight:400;transform:translateX(-50%);">04/15 16:00</div>
<div class="t" style="left:1403.45px;top:982.18px;font-size:24px;line-height:24px;color:#ccccdc;font-weight:400;transform:translateX(-50%);">04/15 20:00</div>
<div class="t" style="left:1616.9px;top:982.18px;font-size:24px;line-height:24px;color:#ccccdc;font-weight:400;transform:translateX(-50%);">04/16 00:00</div>
<div class="t" style="left:1830.35px;top:982.18px;font-size:24px;line-height:24px;color:#ccccdc;font-weight:400;transform:translateX(-50%);">04/16 04:00</div>
<div class="t" style="left:2043.8px;top:982.18px;font-size:24px;line-height:24px;color:#ccccdc;font-weight:400;transform:translateX(-50%);">04/16 08:00</div>
<div class="t" style="left:2257.25px;top:982.18px;font-size:24px;line-height:24px;color:#ccccdc;font-weight:400;transform:translateX(-50%);">04/16 12:00</div>
<div class="t" style="left:2470.7px;top:982.18px;font-size:24px;line-height:24px;color:#ccccdc;font-weight:400;transform:translateX(-50%);">04/16 16:00</div>
<div class="t" style="left:2684.1499999999996px;top:982.18px;font-size:24px;line-height:24px;color:#ccccdc;font-weight:400;transform:translateX(-50%);">04/16 20:00</div>
<div class="t" style="left:2897.6px;top:982.18px;font-size:24px;line-height:24px;color:#ccccdc;font-weight:400;transform:translateX(-50%);">04/17 00:00</div>
<div class="t" style="left:3111.05px;top:982.18px;font-size:24px;line-height:24px;color:#ccccdc;font-weight:400;transform:translateX(-50%);">04/17 04:00</div>
<div class="t" style="left:3324.5px;top:982.18px;font-size:24px;line-height:24px;color:#ccccdc;font-weight:400;transform:translateX(-50%);">04/17 08:00</div>
<div class="t" style="left:3537.95px;top:982.18px;font-size:24px;line-height:24px;color:#ccccdc;font-weight:400;transform:translateX(-50%);">04/17 12:00</div>
<div class="" style="left:1001px;top:1084px;width:28px;height:8px;background:#7ab96f;border-radius:2px"></div>
<div class="t" style="left:1049px;top:1074.58px;font-size:25.3px;line-height:25.3px;color:#ccccdc;font-weight:400;letter-spacing:0.15px;">https://findwork.dev/health/</div>
<div class="t" style="left:3561px;top:1028.84px;font-size:25px;line-height:25px;color:#3c9be0;font-weight:400;-webkit-text-stroke:0.5px #3c9be0;transform:translateX(-100%);">max</div>
<div class="t" style="left:3676px;top:1028.84px;font-size:25px;line-height:25px;color:#3c9be0;font-weight:400;-webkit-text-stroke:0.5px #3c9be0;transform:translateX(-100%);">avg</div>
<div class="t" style="left:3576.5px;top:1075.09px;font-size:24.7px;line-height:24.7px;color:#ccccdc;font-weight:400;transform:translateX(-100%);">2.24 s</div>
<div class="t" style="left:3692px;top:1075.09px;font-size:24.7px;line-height:24.7px;color:#ccccdc;font-weight:400;transform:translateX(-100%);">391 ms</div>
<div class="panel" style="left:969px;top:1146px;width:2756px;height:592px;"></div>
<div class="t" style="left:2347.0px;top:1166.55px;font-size:27.7px;line-height:27.7px;color:#ccccdc;font-weight:400;-webkit-text-stroke:0.55px #ccccdc;transform:translateX(-50%);">HTTP phase percentage</div>
<svg width="3757" height="1816">
<rect x="1057" y="1673.5" width="2147.0" height="2" fill="#3d3f44"/>
<rect x="1057" y="1587.9" width="2147.0" height="2" fill="#3d3f44"/>
<rect x="1057" y="1502.3" width="2147.0" height="2" fill="#3d3f44"/>
<rect x="1057" y="1416.7" width="2147.0" height="2" fill="#3d3f44"/>
<rect x="1057" y="1331.1" width="2147.0" height="2" fill="#3d3f44"/>
<rect x="1057" y="1245.5" width="2147.0" height="2" fill="#3d3f44"/>
<path d="M1056.0 1674 L1056.0 1245.0 L1057.0 1245.0 L1060.0 1245.0 L1063.0 1245.0 L1066.0 1245.0 L1068.9 1245.0 L1071.9 1245.0 L1074.9 1245.0 L1077.9 1245.0 L1080.9 1245.0 L1083.9 1245.0 L1086.8 1245.0 L1089.8 1245.0 L1092.8 1245.0 L1095.8 1245.0 L1098.8 1245.0 L1101.8 1245.0 L1104.7 1245.0 L1107.7 1245.0 L1110.7 1245.0 L1113.7 1245.0 L1116.7 1245.0 L1119.7 1245.0 L1122.6 1245.0 L1125.6 1245.0 L1128.6 1245.0 L1131.6 1245.0 L1134.6 1245.0 L1137.6 1245.0 L1140.6 1245.0 L1143.5 1245.0 L1146.5 1245.0 L1149.5 1245.0 L1152.5 1245.0 L1155.5 1245.0 L1158.5 1245.0 L1161.4 1245.0 L1164.4 1245.0 L1167.4 1245.0 L1170.4 1245.0 L1173.4 1245.0 L1176.4 1245.0 L1179.3 1245.0 L1182.3 1245.0 L1185.3 1245.0 L1188.3 1245.0 L1191.3 1245.0 L1194.3 1245.0 L1197.2 1245.0 L1200.2 1245.0 L1203.2 1245.0 L1206.2 1245.0 L1209.2 1245.0 L1212.2 1245.0 L1215.2 1245.0 L1218.1 1245.0 L1221.1 1245.0 L1224.1 1245.0 L1227.1 1245.0 L1230.1 1245.0 L1233.1 1245.0 L1236.0 1245.0 L1239.0 1245.0 L1242.0 1245.0 L1245.0 1245.0 L1248.0 1245.0 L1251.0 1245.0 L1253.9 1245.0 L1256.9 1245.0 L1259.9 1245.0 L1262.9 1245.0 L1265.9 1245.0 L1268.9 1245.0 L1271.8 1245.0 L1274.8 1245.0 L1277.8 1245.0 L1280.8 1245.0 L1283.8 1245.0 L1286.8 1245.0 L1289.8 1245.0 L1292.7 1245.0 L1295.7 1245.0 L1298.7 1245.0 L1301.7 1245.0 L1304.7 1245.0 L1307.7 1245.0 L1310.6 1245.0 L1313.6 1245.0 L1316.6 1245.0 L1319.6 1245.0 L1322.6 1245.0 L1325.6 1245.0 L1328.5 1245.0 L1331.5 1245.0 L1334.5 1245.0 L1337.5 1245.0 L1340.5 1245.0 L1343.5 1245.0 L1346.4 1245.0 L1349.4 1245.0 L1352.4 1245.0 L1355.4 1245.0 L1358.4 1245.0 L1361.4 1245.0 L1364.4 1245.0 L1367.3 1245.0 L1370.3 1245.0 L1373.3 1245.0 L1376.3 1245.0 L1379.3 1245.0 L1382.3 1245.0 L1385.2 1245.0 L1388.2 1245.0 L1391.2 1245.0 L1394.2 1245.0 L1397.2 1245.0 L1400.2 1245.0 L1403.1 1245.0 L1406.1 1245.0 L1409.1 1245.0 L1412.1 1245.0 L1415.1 1245.0 L1418.1 1245.0 L1421.0 1245.0 L1424.0 1245.0 L1427.0 1245.0 L1430.0 1245.0 L1433.0 1245.0 L1436.0 1245.0 L1439.0 1245.0 L1441.9 1245.0 L1444.9 1245.0 L1447.9 1245.0 L1450.9 1245.0 L1453.9 1245.0 L1456.9 1245.0 L1459.8 1245.0 L1462.8 1245.0 L1465.8 1245.0 L1468.8 1245.0 L1471.8 1245.0 L1474.8 1245.0 L1477.7 1245.0 L1480.7 1245.0 L1483.7 1245.0 L1486.7 1245.0 L1489.7 1245.0 L1492.7 1245.0 L1495.6 1245.0 L1498.6 1245.0 L1501.6 1245.0 L1504.6 1245.0 L1507.6 1245.0 L1510.6 1245.0 L1513.6 1245.0 L1516.5 1245.0 L1519.5 1245.0 L1522.5 1245.0 L1525.5 1245.0 L1528.5 1245.0 L1531.5 1245.0 L1534.4 1245.0 L1537.4 1245.0 L1540.4 1245.0 L1543.4 1245.0 L1546.4 1245.0 L1549.4 1245.0 L1552.3 1245.0 L1555.3 1245.0 L1558.3 1245.0 L1561.3 1245.0 L1564.3 1245.0 L1567.3 1245.0 L1570.2 1245.0 L1573.2 1245.0 L1576.2 1245.0 L1579.2 1245.0 L1582.2 1245.0 L1585.2 1245.0 L1588.2 1245.0 L1591.1 1245.0 L1594.1 1245.0 L1597.1 1245.0 L1600.1 1245.0 L1603.1 1245.0 L1606.1 1245.0 L1609.0 1245.0 L1612.0 1245.0 L1615.0 1245.0 L1618.0 1245.0 L1621.0 1245.0 L1624.0 1245.0 L1626.9 1245.0 L1629.9 1245.0 L1632.9 1245.0 L1635.9 1245.0 L1638.9 1245.0 L1641.9 1245.0 L1644.8 1245.0 L1647.8 1245.0 L1650.8 1245.0 L1653.8 1245.0 L1656.8 1245.0 L1659.8 1245.0 L1662.8 1245.0 L1665.7 1245.0 L1668.7 1245.0 L1671.7 1245.0 L1674.7 1245.0 L1677.7 1245.0 L1680.7 1245.0 L1683.6 1245.0 L1686.6 1245.0 L1689.6 1245.0 L1692.6 1245.0 L1695.6 1245.0 L1698.6 1245.0 L1701.5 1245.0 L1704.5 1245.0 L1707.5 1245.0 L1710.5 1245.0 L1713.5 1245.0 L1716.5 1245.0 L1719.4 1245.0 L1722.4 1245.0 L1725.4 1245.0 L1728.4 1245.0 L1731.4 1245.0 L1734.4 1245.0 L1737.4 1245.0 L1740.3 1245.0 L1743.3 1245.0 L1746.3 1245.0 L1749.3 1245.0 L1752.3 1245.0 L1755.3 1245.0 L1758.2 1245.0 L1761.2 1245.0 L1764.2 1245.0 L1767.2 1245.0 L1770.2 1245.0 L1773.2 1245.0 L1776.1 1245.0 L1779.1 1245.0 L1782.1 1245.0 L1785.1 1245.0 L1788.1 1245.0 L1791.1 1245.0 L1794.0 1245.0 L1797.0 1245.0 L1800.0 1245.0 L1803.0 1245.0 L1806.0 1245.0 L1809.0 1245.0 L1812.0 1245.0 L1814.9 1245.0 L1817.9 1245.0 L1820.9 1245.0 L1823.9 1245.0 L1826.9 1245.0 L1829.9 1245.0 L1832.8 1245.0 L1835.8 1245.0 L1838.8 1245.0 L1841.8 1245.0 L1844.8 1245.0 L1847.8 1245.0 L1850.7 1245.0 L1853.7 1245.0 L1856.7 1245.0 L1859.7 1245.0 L1862.7 1245.0 L1865.7 1245.0 L1868.6 1245.0 L1871.6 1245.0 L1874.6 1245.0 L1877.6 1245.0 L1880.6 1245.0 L1883.6 1245.0 L1886.6 1245.0 L1889.5 1245.0 L1892.5 1245.0 L1895.5 1245.0 L1898.5 1245.0 L1901.5 1245.0 L1904.5 1245.0 L1907.4 1245.0 L1910.4 1245.0 L1913.4 1245.0 L1916.4 1245.0 L1919.4 1245.0 L1922.4 1245.0 L1925.3 1245.0 L1928.3 1245.0 L1931.3 1245.0 L1934.3 1245.0 L1937.3 1245.0 L1940.3 1245.0 L1943.2 1245.0 L1946.2 1245.0 L1949.2 1245.0 L1952.2 1245.0 L1955.2 1245.0 L1958.2 1245.0 L1961.2 1245.0 L1964.1 1245.0 L1967.1 1245.0 L1970.1 1245.0 L1973.1 1245.0 L1976.1 1245.0 L1979.1 1245.0 L1982.0 1245.0 L1985.0 1245.0 L1988.0 1245.0 L1991.0 1245.0 L1994.0 1245.0 L1997.0 1245.0 L1999.9 1245.0 L2002.9 1245.0 L2005.9 1245.0 L2008.9 1245.0 L2011.9 1245.0 L2014.9 1245.0 L2017.8 1245.0 L2020.8 1245.0 L2023.8 1245.0 L2026.8 1245.0 L2029.8 1245.0 L2032.8 1245.0 L2035.8 1245.0 L2038.7 1245.0 L2041.7 1245.0 L2044.7 1245.0 L2047.7 1245.0 L2050.7 1245.0 L2053.7 1245.0 L2056.6 1245.0 L2059.6 1245.0 L2062.6 1245.0 L2065.6 1245.0 L2068.6 1245.0 L2071.6 1245.0 L2074.5 1245.0 L2077.5 1245.0 L2080.5 1245.0 L2083.5 1245.0 L2086.5 1245.0 L2089.5 1245.0 L2092.4 1245.0 L2095.4 1245.0 L2098.4 1245.0 L2101.4 1245.0 L2104.4 1245.0 L2107.4 1245.0 L2110.4 1245.0 L2113.3 1245.0 L2116.3 1245.0 L2119.3 1245.0 L2122.3 1245.0 L2125.3 1245.0 L2128.3 1245.0 L2131.2 1245.0 L2134.2 1245.0 L2137.2 1245.0 L2140.2 1245.0 L2143.2 1245.0 L2146.2 1245.0 L2149.1 1245.0 L2152.1 1245.0 L2155.1 1245.0 L2158.1 1245.0 L2161.1 1245.0 L2164.1 1245.0 L2167.1 1245.0 L2170.0 1245.0 L2173.0 1245.0 L2176.0 1245.0 L2179.0 1245.0 L2182.0 1245.0 L2185.0 1245.0 L2187.9 1245.0 L2190.9 1245.0 L2193.9 1245.0 L2196.9 1245.0 L2199.9 1245.0 L2202.9 1245.0 L2205.8 1245.0 L2208.8 1245.0 L2211.8 1245.0 L2214.8 1245.0 L2217.8 1245.0 L2220.8 1245.0 L2223.7 1245.0 L2226.7 1245.0 L2229.7 1245.0 L2232.7 1245.0 L2235.7 1245.0 L2238.7 1245.0 L2241.7 1245.0 L2244.6 1245.0 L2247.6 1245.0 L2250.6 1245.0 L2253.6 1245.0 L2256.6 1245.0 L2259.6 1245.0 L2262.5 1245.0 L2265.5 1245.0 L2268.5 1245.0 L2271.5 1245.0 L2274.5 1245.0 L2277.5 1245.0 L2280.4 1245.0 L2283.4 1245.0 L2286.4 1245.0 L2289.4 1245.0 L2292.4 1245.0 L2295.4 1245.0 L2298.3 1245.0 L2301.3 1245.0 L2304.3 1245.0 L2307.3 1245.0 L2310.3 1245.0 L2313.3 1245.0 L2316.3 1245.0 L2319.2 1245.0 L2322.2 1245.0 L2325.2 1245.0 L2328.2 1245.0 L2331.2 1245.0 L2334.2 1245.0 L2337.1 1245.0 L2340.1 1245.0 L2343.1 1245.0 L2346.1 1245.0 L2349.1 1245.0 L2352.1 1245.0 L2355.0 1245.0 L2358.0 1245.0 L2361.0 1245.0 L2364.0 1245.0 L2367.0 1245.0 L2370.0 1245.0 L2372.9 1245.0 L2375.9 1245.0 L2378.9 1245.0 L2381.9 1245.0 L2384.9 1245.0 L2387.9 1245.0 L2390.9 1245.0 L2393.8 1245.0 L2396.8 1245.0 L2399.8 1245.0 L2402.8 1245.0 L2405.8 1245.0 L2408.8 1245.0 L2411.7 1245.0 L2414.7 1245.0 L2417.7 1245.0 L2420.7 1245.0 L2423.7 1245.0 L2426.7 1245.0 L2429.6 1245.0 L2432.6 1245.0 L2435.6 1245.0 L2438.6 1245.0 L2441.6 1245.0 L2444.6 1245.0 L2447.5 1245.0 L2450.5 1245.0 L2453.5 1245.0 L2456.5 1245.0 L2459.5 1245.0 L2462.5 1245.0 L2465.5 1245.0 L2468.4 1245.0 L2471.4 1245.0 L2474.4 1245.0 L2477.4 1245.0 L2480.4 1245.0 L2483.4 1245.0 L2486.3 1245.0 L2489.3 1245.0 L2492.3 1245.0 L2495.3 1245.0 L2498.3 1245.0 L2501.3 1245.0 L2504.2 1245.0 L2507.2 1245.0 L2510.2 1245.0 L2513.2 1245.0 L2516.2 1245.0 L2519.2 1245.0 L2522.1 1245.0 L2525.1 1245.0 L2528.1 1245.0 L2531.1 1245.0 L2534.1 1245.0 L2537.1 1245.0 L2540.1 1245.0 L2543.0 1245.0 L2546.0 1245.0 L2549.0 1245.0 L2552.0 1245.0 L2555.0 1245.0 L2558.0 1245.0 L2560.9 1245.0 L2563.9 1245.0 L2566.9 1245.0 L2569.9 1245.0 L2572.9 1245.0 L2575.9 1245.0 L2578.8 1245.0 L2581.8 1245.0 L2584.8 1245.0 L2587.8 1245.0 L2590.8 1245.0 L2593.8 1245.0 L2596.7 1245.0 L2599.7 1245.0 L2602.7 1245.0 L2605.7 1245.0 L2608.7 1245.0 L2611.7 1245.0 L2614.7 1245.0 L2617.6 1245.0 L2620.6 1245.0 L2623.6 1245.0 L2626.6 1245.0 L2629.6 1245.0 L2632.6 1245.0 L2635.5 1245.0 L2638.5 1245.0 L2641.5 1245.0 L2644.5 1245.0 L2647.5 1245.0 L2650.5 1245.0 L2653.4 1245.0 L2656.4 1245.0 L2659.4 1245.0 L2662.4 1245.0 L2665.4 1245.0 L2668.4 1245.0 L2671.3 1245.0 L2674.3 1245.0 L2677.3 1245.0 L2680.3 1245.0 L2683.3 1245.0 L2686.3 1245.0 L2689.3 1245.0 L2692.2 1245.0 L2695.2 1245.0 L2698.2 1245.0 L2701.2 1245.0 L2704.2 1245.0 L2707.2 1245.0 L2710.1 1245.0 L2713.1 1245.0 L2716.1 1245.0 L2719.1 1245.0 L2722.1 1245.0 L2725.1 1245.0 L2728.0 1245.0 L2731.0 1245.0 L2734.0 1245.0 L2737.0 1245.0 L2740.0 1245.0 L2743.0 1245.0 L2745.9 1245.0 L2748.9 1245.0 L2751.9 1245.0 L2754.9 1245.0 L2757.9 1245.0 L2760.9 1245.0 L2763.9 1245.0 L2766.8 1245.0 L2769.8 1245.0 L2772.8 1245.0 L2775.8 1245.0 L2778.8 1245.0 L2781.8 1245.0 L2784.7 1245.0 L2787.7 1245.0 L2790.7 1245.0 L2793.7 1245.0 L2796.7 1245.0 L2799.7 1245.0 L2802.6 1245.0 L2805.6 1245.0 L2808.6 1245.0 L2811.6 1245.0 L2814.6 1245.0 L2817.6 1245.0 L2820.5 1245.0 L2823.5 1245.0 L2826.5 1245.0 L2829.5 1245.0 L2832.5 1245.0 L2835.5 1245.0 L2838.5 1245.0 L2841.4 1245.0 L2844.4 1245.0 L2847.4 1245.0 L2850.4 1245.0 L2853.4 1245.0 L2856.4 1245.0 L2859.3 1245.0 L2862.3 1245.0 L2865.3 1245.0 L2868.3 1245.0 L2871.3 1245.0 L2874.3 1245.0 L2877.2 1245.0 L2880.2 1245.0 L2883.2 1245.0 L2886.2 1245.0 L2889.2 1245.0 L2892.2 1245.0 L2895.1 1245.0 L2898.1 1245.0 L2901.1 1245.0 L2904.1 1245.0 L2907.1 1245.0 L2910.1 1245.0 L2913.1 1245.0 L2916.0 1245.0 L2919.0 1245.0 L2922.0 1245.0 L2925.0 1245.0 L2928.0 1245.0 L2931.0 1245.0 L2933.9 1245.0 L2936.9 1245.0 L2939.9 1245.0 L2942.9 1245.0 L2945.9 1245.0 L2948.9 1245.0 L2951.8 1245.0 L2954.8 1245.0 L2957.8 1245.0 L2960.8 1245.0 L2963.8 1245.0 L2966.8 1245.0 L2969.7 1245.0 L2972.7 1245.0 L2975.7 1245.0 L2978.7 1245.0 L2981.7 1245.0 L2984.7 1245.0 L2987.7 1245.0 L2990.6 1245.0 L2993.6 1245.0 L2996.6 1245.0 L2999.6 1245.0 L3002.6 1245.0 L3005.6 1245.0 L3008.5 1245.0 L3011.5 1245.0 L3014.5 1245.0 L3017.5 1245.0 L3020.5 1245.0 L3023.5 1245.0 L3026.4 1245.0 L3029.4 1245.0 L3032.4 1245.0 L3035.4 1245.0 L3038.4 1245.0 L3041.4 1245.0 L3044.3 1245.0 L3047.3 1245.0 L3050.3 1245.0 L3053.3 1245.0 L3056.3 1245.0 L3059.3 1245.0 L3062.3 1245.0 L3065.2 1245.0 L3068.2 1245.0 L3071.2 1245.0 L3074.2 1245.0 L3077.2 1245.0 L3080.2 1245.0 L3083.1 1245.0 L3086.1 1245.0 L3089.1 1245.0 L3092.1 1245.0 L3095.1 1245.0 L3098.1 1245.0 L3101.0 1245.0 L3104.0 1245.0 L3107.0 1245.0 L3110.0 1245.0 L3113.0 1245.0 L3116.0 1245.0 L3118.9 1245.0 L3121.9 1245.0 L3124.9 1245.0 L3127.9 1245.0 L3130.9 1245.0 L3131.9 1245.0 L3131.9 1674 Z" fill="#e24d42"/>
<path d="M1056.0 1674 L1056.0 1304.0 L1057.0 1304.0 L1060.0 1332.6 L1063.0 1245.4 L1066.0 1245.4 L1068.9 1245.3 L1071.9 1245.3 L1074.9 1246.1 L1077.9 1245.6 L1080.9 1247.2 L1083.9 1245.3 L1086.8 1245.1 L1089.8 1245.8 L1092.8 1245.1 L1095.8 1245.8 L1098.8 1245.3 L1101.8 1246.6 L1104.7 1245.4 L1107.7 1245.3 L1110.7 1245.3 L1113.7 1245.2 L1116.7 1245.3 L1119.7 1245.4 L1122.6 1245.5 L1125.6 1245.8 L1128.6 1245.5 L1131.6 1245.3 L1134.6 1245.1 L1137.6 1245.8 L1140.6 1245.4 L1143.5 1246.1 L1146.5 1245.1 L1149.5 1245.2 L1152.5 1245.5 L1155.5 1245.9 L1158.5 1245.3 L1161.4 1245.7 L1164.4 1245.2 L1167.4 1245.4 L1170.4 1245.2 L1173.4 1245.6 L1176.4 1245.1 L1179.3 1245.1 L1182.3 1247.3 L1185.3 1245.2 L1188.3 1245.1 L1191.3 1245.4 L1194.3 1245.5 L1197.2 1245.6 L1200.2 1245.9 L1203.2 1245.6 L1206.2 1245.4 L1209.2 1246.7 L1212.2 1245.3 L1215.2 1336.2 L1218.1 1245.1 L1221.1 1245.3 L1224.1 1246.0 L1227.1 1245.9 L1230.1 1245.7 L1233.1 1245.2 L1236.0 1245.6 L1239.0 1245.1 L1242.0 1245.3 L1245.0 1245.4 L1248.0 1245.5 L1251.0 1245.6 L1253.9 1245.5 L1256.9 1245.8 L1259.9 1246.0 L1262.9 1245.3 L1265.9 1245.1 L1268.9 1245.4 L1271.8 1245.4 L1274.8 1245.9 L1277.8 1245.5 L1280.8 1246.0 L1283.8 1245.4 L1286.8 1246.9 L1289.8 1245.2 L1292.7 1245.2 L1295.7 1245.9 L1298.7 1245.8 L1301.7 1245.2 L1304.7 1245.9 L1307.7 1246.1 L1310.6 1245.5 L1313.6 1246.0 L1316.6 1245.6 L1319.6 1245.6 L1322.6 1246.4 L1325.6 1245.1 L1328.5 1245.7 L1331.5 1245.2 L1334.5 1245.6 L1337.5 1245.5 L1340.5 1245.8 L1343.5 1245.7 L1346.4 1245.3 L1349.4 1245.5 L1352.4 1245.3 L1355.4 1245.5 L1358.4 1245.7 L1361.4 1245.6 L1364.4 1245.4 L1367.3 1245.5 L1370.3 1245.2 L1373.3 1245.2 L1376.3 1333.5 L1379.3 1245.2 L1382.3 1245.5 L1385.2 1245.6 L1388.2 1245.2 L1391.2 1245.8 L1394.2 1245.5 L1397.2 1246.1 L1400.2 1480.4 L1403.1 1245.6 L1406.1 1247.2 L1409.1 1246.0 L1412.1 1246.2 L1415.1 1245.7 L1418.1 1245.1 L1421.0 1246.3 L1424.0 1246.3 L1427.0 1247.1 L1430.0 1245.1 L1433.0 1245.8 L1436.0 1245.7 L1439.0 1247.0 L1441.9 1245.6 L1444.9 1245.4 L1447.9 1245.3 L1450.9 1245.7 L1453.9 1246.0 L1456.9 1245.5 L1459.8 1245.8 L1462.8 1245.4 L1465.8 1245.7 L1468.8 1245.6 L1471.8 1246.0 L1474.8 1245.6 L1477.7 1246.1 L1480.7 1245.3 L1483.7 1245.2 L1486.7 1245.1 L1489.7 1245.3 L1492.7 1245.1 L1495.6 1245.7 L1498.6 1249.8 L1501.6 1245.6 L1504.6 1245.3 L1507.6 1245.2 L1510.6 1245.3 L1513.6 1246.0 L1516.5 1245.1 L1519.5 1245.2 L1522.5 1245.5 L1525.5 1245.9 L1528.5 1246.0 L1531.5 1248.6 L1534.4 1245.3 L1537.4 1245.3 L1540.4 1246.0 L1543.4 1245.5 L1546.4 1245.5 L1549.4 1245.4 L1552.3 1245.5 L1555.3 1245.9 L1558.3 1245.6 L1561.3 1326.8 L1564.3 1246.0 L1567.3 1245.5 L1570.2 1245.4 L1573.2 1353.5 L1576.2 1246.3 L1579.2 1245.6 L1582.2 1245.2 L1585.2 1245.7 L1588.2 1245.4 L1591.1 1396.0 L1594.1 1245.6 L1597.1 1245.7 L1600.1 1245.3 L1603.1 1245.5 L1606.1 1245.6 L1609.0 1245.4 L1612.0 1245.6 L1615.0 1245.6 L1618.0 1245.1 L1621.0 1245.0 L1624.0 1245.1 L1626.9 1245.8 L1629.9 1245.4 L1632.9 1380.2 L1635.9 1246.5 L1638.9 1246.0 L1641.9 1246.1 L1644.8 1245.4 L1647.8 1246.2 L1650.8 1245.8 L1653.8 1245.4 L1656.8 1370.3 L1659.8 1245.6 L1662.8 1246.8 L1665.7 1245.1 L1668.7 1245.5 L1671.7 1246.1 L1674.7 1245.6 L1677.7 1245.7 L1680.7 1246.2 L1683.6 1245.5 L1686.6 1245.9 L1689.6 1246.5 L1692.6 1245.3 L1695.6 1245.1 L1698.6 1245.8 L1701.5 1245.9 L1704.5 1245.2 L1707.5 1245.3 L1710.5 1245.5 L1713.5 1245.4 L1716.5 1245.6 L1719.4 1246.0 L1722.4 1245.8 L1725.4 1245.2 L1728.4 1245.4 L1731.4 1246.0 L1734.4 1337.5 L1737.4 1246.7 L1740.3 1245.8 L1743.3 1245.5 L1746.3 1246.3 L1749.3 1246.1 L1752.3 1246.8 L1755.3 1245.8 L1758.2 1245.6 L1761.2 1245.5 L1764.2 1246.1 L1767.2 1391.2 L1770.2 1245.9 L1773.2 1245.4 L1776.1 1245.5 L1779.1 1245.2 L1782.1 1245.1 L1785.1 1245.4 L1788.1 1245.5 L1791.1 1245.3 L1794.0 1245.7 L1797.0 1245.7 L1800.0 1245.4 L1803.0 1245.4 L1806.0 1246.3 L1809.0 1246.1 L1812.0 1245.3 L1814.9 1245.9 L1817.9 1246.4 L1820.9 1245.8 L1823.9 1245.4 L1826.9 1245.6 L1829.9 1284.7 L1832.8 1245.6 L1835.8 1245.5 L1838.8 1245.8 L1841.8 1271.4 L1844.8 1245.3 L1847.8 1245.4 L1850.7 1423.6 L1853.7 1245.6 L1856.7 1245.3 L1859.7 1245.1 L1862.7 1246.0 L1865.7 1245.8 L1868.6 1245.8 L1871.6 1245.4 L1874.6 1471.2 L1877.6 1245.2 L1880.6 1245.3 L1883.6 1245.6 L1886.6 1245.7 L1889.5 1281.6 L1892.5 1245.5 L1895.5 1245.3 L1898.5 1245.1 L1901.5 1245.5 L1904.5 1245.9 L1907.4 1246.1 L1910.4 1245.3 L1913.4 1245.1 L1916.4 1245.1 L1919.4 1245.9 L1922.4 1245.4 L1925.3 1245.4 L1928.3 1245.5 L1931.3 1245.4 L1934.3 1245.2 L1937.3 1245.3 L1940.3 1245.2 L1943.2 1245.8 L1946.2 1245.6 L1949.2 1245.7 L1952.2 1245.6 L1955.2 1245.3 L1958.2 1245.8 L1961.2 1245.4 L1964.1 1245.5 L1967.1 1245.4 L1970.1 1245.7 L1973.1 1245.3 L1976.1 1245.5 L1979.1 1245.3 L1982.0 1245.6 L1985.0 1245.2 L1988.0 1245.9 L1991.0 1245.8 L1994.0 1245.5 L1997.0 1245.2 L1999.9 1245.2 L2002.9 1245.8 L2005.9 1245.3 L2008.9 1246.1 L2011.9 1245.1 L2014.9 1245.5 L2017.8 1245.2 L2020.8 1245.4 L2023.8 1245.1 L2026.8 1245.4 L2029.8 1246.0 L2032.8 1245.8 L2035.8 1245.2 L2038.7 1245.4 L2041.7 1245.2 L2044.7 1245.8 L2047.7 1245.1 L2050.7 1245.1 L2053.7 1246.9 L2056.6 1246.1 L2059.6 1246.0 L2062.6 1245.9 L2065.6 1245.1 L2068.6 1245.1 L2071.6 1245.4 L2074.5 1245.3 L2077.5 1247.2 L2080.5 1245.5 L2083.5 1245.8 L2086.5 1245.3 L2089.5 1245.7 L2092.4 1245.4 L2095.4 1245.2 L2098.4 1245.4 L2101.4 1245.3 L2104.4 1245.7 L2107.4 1360.0 L2110.4 1246.1 L2113.3 1245.1 L2116.3 1245.7 L2119.3 1245.7 L2122.3 1245.2 L2125.3 1246.7 L2128.3 1245.8 L2131.2 1246.0 L2134.2 1245.4 L2137.2 1245.3 L2140.2 1245.2 L2143.2 1245.1 L2146.2 1245.7 L2149.1 1245.5 L2152.1 1245.6 L2155.1 1245.3 L2158.1 1245.1 L2161.1 1245.6 L2164.1 1245.3 L2167.1 1246.4 L2170.0 1245.4 L2173.0 1245.2 L2176.0 1246.3 L2179.0 1245.4 L2182.0 1245.3 L2185.0 1245.7 L2187.9 1246.8 L2190.9 1245.6 L2193.9 1246.0 L2196.9 1245.5 L2199.9 1246.6 L2202.9 1245.1 L2205.8 1245.4 L2208.8 1245.2 L2211.8 1245.2 L2214.8 1245.5 L2217.8 1245.3 L2220.8 1245.2 L2223.7 1245.1 L2226.7 1272.6 L2229.7 1245.5 L2232.7 1245.7 L2235.7 1245.6 L2238.7 1245.6 L2241.7 1245.3 L2244.6 1246.5 L2247.6 1246.6 L2250.6 1245.4 L2253.6 1245.3 L2256.6 1245.8 L2259.6 1245.6 L2262.5 1245.3 L2265.5 1245.4 L2268.5 1245.4 L2271.5 1245.2 L2274.5 1245.3 L2277.5 1245.7 L2280.4 1245.2 L2283.4 1246.0 L2286.4 1245.3 L2289.4 1245.3 L2292.4 1246.5 L2295.4 1245.8 L2298.3 1245.7 L2301.3 1245.2 L2304.3 1245.3 L2307.3 1246.1 L2310.3 1246.5 L2313.3 1245.7 L2316.3 1381.1 L2319.2 1245.8 L2322.2 1245.6 L2325.2 1245.2 L2328.2 1245.1 L2331.2 1245.3 L2334.2 1245.3 L2337.1 1245.6 L2340.1 1245.5 L2343.1 1246.2 L2346.1 1245.1 L2349.1 1367.7 L2352.1 1245.1 L2355.0 1245.2 L2358.0 1245.3 L2361.0 1245.6 L2364.0 1245.5 L2367.0 1245.6 L2370.0 1245.2 L2372.9 1245.1 L2375.9 1246.4 L2378.9 1245.5 L2381.9 1245.7 L2384.9 1245.5 L2387.9 1245.9 L2390.9 1246.3 L2393.8 1245.2 L2396.8 1246.3 L2399.8 1245.5 L2402.8 1245.5 L2405.8 1245.2 L2408.8 1245.4 L2411.7 1245.6 L2414.7 1245.6 L2417.7 1347.2 L2420.7 1245.5 L2423.7 1245.6 L2426.7 1245.2 L2429.6 1245.6 L2432.6 1245.3 L2435.6 1245.2 L2438.6 1245.2 L2441.6 1245.4 L2444.6 1245.7 L2447.5 1304.2 L2450.5 1245.5 L2453.5 1246.3 L2456.5 1245.4 L2459.5 1245.4 L2462.5 1245.2 L2465.5 1246.0 L2468.4 1245.4 L2471.4 1245.3 L2474.4 1246.0 L2477.4 1245.2 L2480.4 1245.2 L2483.4 1245.2 L2486.3 1245.3 L2489.3 1245.2 L2492.3 1245.8 L2495.3 1245.3 L2498.3 1245.1 L2501.3 1245.7 L2504.2 1245.7 L2507.2 1245.3 L2510.2 1334.9 L2513.2 1245.5 L2516.2 1246.1 L2519.2 1245.3 L2522.1 1245.5 L2525.1 1245.2 L2528.1 1245.4 L2531.1 1246.8 L2534.1 1245.1 L2537.1 1245.9 L2540.1 1245.3 L2543.0 1245.9 L2546.0 1245.2 L2549.0 1245.3 L2552.0 1245.1 L2555.0 1245.6 L2558.0 1245.8 L2560.9 1245.2 L2563.9 1245.6 L2566.9 1246.4 L2569.9 1245.2 L2572.9 1245.2 L2575.9 1245.5 L2578.8 1245.2 L2581.8 1245.1 L2584.8 1245.2 L2587.8 1245.8 L2590.8 1245.5 L2593.8 1245.7 L2596.7 1245.5 L2599.7 1245.1 L2602.7 1245.5 L2605.7 1245.2 L2608.7 1337.1 L2611.7 1245.7 L2614.7 1245.2 L2617.6 1245.1 L2620.6 1245.2 L2623.6 1246.2 L2626.6 1245.4 L2629.6 1245.7 L2632.6 1247.3 L2635.5 1247.4 L2638.5 1245.9 L2641.5 1259.0 L2644.5 1245.1 L2647.5 1245.7 L2650.5 1245.2 L2653.4 1245.9 L2656.4 1245.9 L2659.4 1245.1 L2662.4 1245.3 L2665.4 1245.0 L2668.4 1245.5 L2671.3 1245.8 L2674.3 1245.1 L2677.3 1245.2 L2680.3 1245.3 L2683.3 1301.2 L2686.3 1245.5 L2689.3 1245.2 L2692.2 1246.1 L2695.2 1245.4 L2698.2 1245.3 L2701.2 1245.1 L2704.2 1246.0 L2707.2 1245.7 L2710.1 1245.7 L2713.1 1245.7 L2716.1 1245.2 L2719.1 1245.7 L2722.1 1245.3 L2725.1 1245.1 L2728.0 1245.5 L2731.0 1245.2 L2734.0 1245.4 L2737.0 1245.5 L2740.0 1245.2 L2743.0 1246.0 L2745.9 1245.9 L2748.9 1245.2 L2751.9 1245.4 L2754.9 1245.7 L2757.9 1245.5 L2760.9 1245.2 L2763.9 1245.0 L2766.8 1318.8 L2769.8 1245.6 L2772.8 1312.1 L2775.8 1245.3 L2778.8 1245.7 L2781.8 1245.8 L2784.7 1245.8 L2787.7 1245.5 L2790.7 1245.6 L2793.7 1245.5 L2796.7 1245.4 L2799.7 1245.4 L2802.6 1245.6 L2805.6 1245.4 L2808.6 1245.6 L2811.6 1245.1 L2814.6 1245.5 L2817.6 1245.2 L2820.5 1245.2 L2823.5 1245.6 L2826.5 1245.2 L2829.5 1245.6 L2832.5 1245.5 L2835.5 1245.7 L2838.5 1245.3 L2841.4 1245.5 L2844.4 1245.9 L2847.4 1245.4 L2850.4 1245.6 L2853.4 1246.4 L2856.4 1246.9 L2859.3 1245.3 L2862.3 1245.4 L2865.3 1245.3 L2868.3 1245.3 L2871.3 1245.5 L2874.3 1245.7 L2877.2 1246.5 L2880.2 1246.1 L2883.2 1245.3 L2886.2 1245.4 L2889.2 1245.8 L2892.2 1246.0 L2895.1 1268.1 L2898.1 1245.2 L2901.1 1245.3 L2904.1 1245.5 L2907.1 1245.4 L2910.1 1245.8 L2913.1 1245.4 L2916.0 1245.5 L2919.0 1245.4 L2922.0 1245.9 L2925.0 1246.0 L2928.0 1245.3 L2931.0 1245.3 L2933.9 1245.8 L2936.9 1246.2 L2939.9 1246.4 L2942.9 1245.1 L2945.9 1245.4 L2948.9 1245.6 L2951.8 1312.1 L2954.8 1245.4 L2957.8 1245.1 L2960.8 1245.4 L2963.8 1245.3 L2966.8 1245.7 L2969.7 1245.5 L2972.7 1245.2 L2975.7 1245.1 L2978.7 1375.6 L2981.7 1245.5 L2984.7 1247.7 L2987.7 1245.8 L2990.6 1245.6 L2993.6 1245.5 L2996.6 1245.5 L2999.6 1245.2 L3002.6 1246.4 L3005.6 1247.1 L3008.5 1246.2 L3011.5 1245.5 L3014.5 1362.8 L3017.5 1245.6 L3020.5 1245.9 L3023.5 1245.2 L3026.4 1246.0 L3029.4 1246.3 L3032.4 1245.1 L3035.4 1245.3 L3038.4 1245.2 L3041.4 1245.2 L3044.3 1245.6 L3047.3 1245.3 L3050.3 1245.2 L3053.3 1245.9 L3056.3 1245.4 L3059.3 1245.2 L3062.3 1245.4 L3065.2 1245.2 L3068.2 1245.1 L3071.2 1245.7 L3074.2 1245.1 L3077.2 1245.9 L3080.2 1245.5 L3083.1 1246.4 L3086.1 1245.4 L3089.1 1245.6 L3092.1 1246.1 L3095.1 1245.9 L3098.1 1245.8 L3101.0 1245.3 L3104.0 1246.2 L3107.0 1245.1 L3110.0 1247.2 L3113.0 1245.2 L3116.0 1245.5 L3118.9 1245.1 L3121.9 1245.5 L3124.9 1245.9 L3127.9 1246.0 L3130.9 1245.1 L3131.9 1245.1 L3131.9 1674 Z" fill="#ef843c"/>
<path d="M1056.0 1674 L1056.0 1383.6 L1057.0 1383.6 L1060.0 1502.1 L1063.0 1367.3 L1066.0 1357.3 L1068.9 1347.7 L1071.9 1399.2 L1074.9 1533.7 L1077.9 1256.2 L1080.9 1293.1 L1083.9 1294.4 L1086.8 1280.1 L1089.8 1283.7 L1092.8 1457.4 L1095.8 1326.0 L1098.8 1351.3 L1101.8 1347.2 L1104.7 1262.8 L1107.7 1498.4 L1110.7 1350.5 L1113.7 1480.7 L1116.7 1412.6 L1119.7 1395.5 L1122.6 1278.3 L1125.6 1269.2 L1128.6 1256.1 L1131.6 1503.5 L1134.6 1248.9 L1137.6 1271.4 L1140.6 1320.3 L1143.5 1527.9 L1146.5 1352.4 L1149.5 1550.9 L1152.5 1384.1 L1155.5 1280.5 L1158.5 1390.8 L1161.4 1380.4 L1164.4 1279.8 L1167.4 1404.8 L1170.4 1298.0 L1173.4 1373.4 L1176.4 1324.9 L1179.3 1288.6 L1182.3 1524.1 L1185.3 1271.3 L1188.3 1496.2 L1191.3 1351.4 L1194.3 1377.2 L1197.2 1401.3 L1200.2 1443.7 L1203.2 1368.2 L1206.2 1391.8 L1209.2 1331.2 L1212.2 1425.2 L1215.2 1440.7 L1218.1 1348.7 L1221.1 1395.3 L1224.1 1511.8 L1227.1 1273.9 L1230.1 1425.2 L1233.1 1275.2 L1236.0 1392.7 L1239.0 1370.4 L1242.0 1343.8 L1245.0 1401.5 L1248.0 1432.6 L1251.0 1295.0 L1253.9 1502.7 L1256.9 1266.9 L1259.9 1289.9 L1262.9 1398.5 L1265.9 1415.7 L1268.9 1446.3 L1271.8 1556.1 L1274.8 1442.2 L1277.8 1298.8 L1280.8 1375.2 L1283.8 1381.7 L1286.8 1353.8 L1289.8 1404.6 L1292.7 1344.5 L1295.7 1404.7 L1298.7 1268.8 L1301.7 1340.7 L1304.7 1489.2 L1307.7 1509.5 L1310.6 1465.3 L1313.6 1507.5 L1316.6 1356.4 L1319.6 1260.7 L1322.6 1399.4 L1325.6 1379.4 L1328.5 1268.0 L1331.5 1522.3 L1334.5 1433.8 L1337.5 1273.9 L1340.5 1437.9 L1343.5 1465.4 L1346.4 1475.3 L1349.4 1367.2 L1352.4 1270.8 L1355.4 1261.4 L1358.4 1414.7 L1361.4 1320.8 L1364.4 1269.0 L1367.3 1389.0 L1370.3 1367.3 L1373.3 1439.7 L1376.3 1353.0 L1379.3 1343.0 L1382.3 1522.7 L1385.2 1267.3 L1388.2 1409.0 L1391.2 1273.9 L1394.2 1321.5 L1397.2 1467.9 L1400.2 1514.6 L1403.1 1369.5 L1406.1 1276.3 L1409.1 1526.6 L1412.1 1264.5 L1415.1 1266.4 L1418.1 1269.9 L1421.0 1525.1 L1424.0 1537.8 L1427.0 1570.9 L1430.0 1500.0 L1433.0 1384.0 L1436.0 1377.0 L1439.0 1294.4 L1441.9 1465.1 L1444.9 1353.8 L1447.9 1375.2 L1450.9 1394.7 L1453.9 1338.9 L1456.9 1433.6 L1459.8 1273.0 L1462.8 1260.2 L1465.8 1282.1 L1468.8 1280.6 L1471.8 1407.0 L1474.8 1396.7 L1477.7 1294.6 L1480.7 1505.5 L1483.7 1347.2 L1486.7 1329.7 L1489.7 1410.2 L1492.7 1271.6 L1495.6 1431.6 L1498.6 1320.7 L1501.6 1359.9 L1504.6 1477.7 L1507.6 1455.7 L1510.6 1274.1 L1513.6 1394.8 L1516.5 1282.6 L1519.5 1366.5 L1522.5 1463.7 L1525.5 1329.8 L1528.5 1295.9 L1531.5 1398.3 L1534.4 1372.4 L1537.4 1289.3 L1540.4 1511.6 L1543.4 1439.9 L1546.4 1335.0 L1549.4 1344.3 L1552.3 1365.9 L1555.3 1272.0 L1558.3 1422.2 L1561.3 1441.9 L1564.3 1529.9 L1567.3 1363.7 L1570.2 1420.2 L1573.2 1478.0 L1576.2 1452.7 L1579.2 1347.9 L1582.2 1464.1 L1585.2 1401.0 L1588.2 1342.2 L1591.1 1511.2 L1594.1 1371.1 L1597.1 1495.1 L1600.1 1296.0 L1603.1 1495.8 L1606.1 1348.2 L1609.0 1537.2 L1612.0 1270.1 L1615.0 1399.2 L1618.0 1249.8 L1621.0 1273.5 L1624.0 1345.0 L1626.9 1344.2 L1629.9 1391.7 L1632.9 1466.4 L1635.9 1281.7 L1638.9 1293.8 L1641.9 1275.0 L1644.8 1401.2 L1647.8 1268.5 L1650.8 1280.7 L1653.8 1412.2 L1656.8 1458.9 L1659.8 1338.8 L1662.8 1517.3 L1665.7 1263.8 L1668.7 1267.3 L1671.7 1304.9 L1674.7 1426.0 L1677.7 1368.2 L1680.7 1269.5 L1683.6 1358.9 L1686.6 1280.5 L1689.6 1298.3 L1692.6 1353.6 L1695.6 1336.9 L1698.6 1411.2 L1701.5 1428.8 L1704.5 1363.7 L1707.5 1263.3 L1710.5 1401.7 L1713.5 1397.0 L1716.5 1279.9 L1719.4 1264.3 L1722.4 1388.2 L1725.4 1274.6 L1728.4 1366.3 L1731.4 1275.1 L1734.4 1427.8 L1737.4 1471.8 L1740.3 1270.1 L1743.3 1321.0 L1746.3 1282.9 L1749.3 1289.4 L1752.3 1509.1 L1755.3 1431.6 L1758.2 1410.7 L1761.2 1599.2 L1764.2 1264.4 L1767.2 1416.4 L1770.2 1491.5 L1773.2 1262.3 L1776.1 1401.2 L1779.1 1269.9 L1782.1 1321.1 L1785.1 1349.1 L1788.1 1431.9 L1791.1 1326.9 L1794.0 1335.8 L1797.0 1313.7 L1800.0 1341.3 L1803.0 1274.0 L1806.0 1483.7 L1809.0 1462.8 L1812.0 1376.7 L1814.9 1297.8 L1817.9 1276.7 L1820.9 1285.2 L1823.9 1370.6 L1826.9 1274.1 L1829.9 1347.6 L1832.8 1264.3 L1835.8 1355.5 L1838.8 1441.0 L1841.8 1288.7 L1844.8 1494.8 L1847.8 1272.5 L1850.7 1445.8 L1853.7 1428.1 L1856.7 1353.7 L1859.7 1432.0 L1862.7 1535.4 L1865.7 1365.0 L1868.6 1342.6 L1871.6 1397.2 L1874.6 1505.0 L1877.6 1415.5 L1880.6 1459.1 L1883.6 1363.9 L1886.6 1388.9 L1889.5 1352.1 L1892.5 1366.7 L1895.5 1414.1 L1898.5 1362.2 L1901.5 1367.0 L1904.5 1270.0 L1907.4 1287.7 L1910.4 1362.1 L1913.4 1335.8 L1916.4 1252.2 L1919.4 1413.3 L1922.4 1410.9 L1925.3 1440.7 L1928.3 1399.7 L1931.3 1408.7 L1934.3 1460.4 L1937.3 1555.5 L1940.3 1338.5 L1943.2 1412.9 L1946.2 1256.1 L1949.2 1290.4 L1952.2 1399.5 L1955.2 1300.7 L1958.2 1377.5 L1961.2 1378.9 L1964.1 1360.6 L1967.1 1500.5 L1970.1 1291.5 L1973.1 1504.1 L1976.1 1362.6 L1979.1 1320.7 L1982.0 1374.5 L1985.0 1263.1 L1988.0 1405.5 L1991.0 1365.3 L1994.0 1446.5 L1997.0 1259.9 L1999.9 1255.5 L2002.9 1471.9 L2005.9 1377.0 L2008.9 1278.8 L2011.9 1391.0 L2014.9 1417.3 L2017.8 1344.8 L2020.8 1317.2 L2023.8 1300.9 L2026.8 1380.7 L2029.8 1278.2 L2032.8 1360.9 L2035.8 1391.6 L2038.7 1339.1 L2041.7 1266.9 L2044.7 1435.9 L2047.7 1270.7 L2050.7 1420.7 L2053.7 1274.8 L2056.6 1300.7 L2059.6 1408.7 L2062.6 1275.2 L2065.6 1288.5 L2068.6 1385.7 L2071.6 1446.4 L2074.5 1327.9 L2077.5 1367.7 L2080.5 1491.9 L2083.5 1346.7 L2086.5 1318.5 L2089.5 1556.0 L2092.4 1437.0 L2095.4 1271.0 L2098.4 1356.2 L2101.4 1407.6 L2104.4 1509.8 L2107.4 1584.4 L2110.4 1477.5 L2113.3 1397.1 L2116.3 1444.7 L2119.3 1260.0 L2122.3 1317.7 L2125.3 1482.6 L2128.3 1379.8 L2131.2 1335.3 L2134.2 1353.2 L2137.2 1510.0 L2140.2 1271.2 L2143.2 1341.5 L2146.2 1291.0 L2149.1 1275.0 L2152.1 1336.6 L2155.1 1309.9 L2158.1 1360.4 L2161.1 1411.1 L2164.1 1376.9 L2167.1 1322.9 L2170.0 1282.4 L2173.0 1272.9 L2176.0 1331.5 L2179.0 1350.5 L2182.0 1402.6 L2185.0 1304.7 L2187.9 1312.4 L2190.9 1382.8 L2193.9 1276.1 L2196.9 1397.2 L2199.9 1291.8 L2202.9 1472.9 L2205.8 1347.3 L2208.8 1414.0 L2211.8 1388.0 L2214.8 1523.2 L2217.8 1393.3 L2220.8 1295.0 L2223.7 1339.7 L2226.7 1351.3 L2229.7 1425.4 L2232.7 1257.4 L2235.7 1267.9 L2238.7 1473.1 L2241.7 1280.4 L2244.6 1457.6 L2247.6 1517.9 L2250.6 1331.4 L2253.6 1329.0 L2256.6 1333.4 L2259.6 1393.7 L2262.5 1327.2 L2265.5 1276.3 L2268.5 1265.8 L2271.5 1313.4 L2274.5 1323.8 L2277.5 1400.9 L2280.4 1347.8 L2283.4 1442.3 L2286.4 1310.7 L2289.4 1351.8 L2292.4 1312.4 L2295.4 1403.3 L2298.3 1391.3 L2301.3 1407.0 L2304.3 1441.5 L2307.3 1339.5 L2310.3 1552.7 L2313.3 1446.7 L2316.3 1455.7 L2319.2 1559.0 L2322.2 1485.9 L2325.2 1382.5 L2328.2 1562.3 L2331.2 1400.9 L2334.2 1269.6 L2337.1 1368.6 L2340.1 1326.5 L2343.1 1387.1 L2346.1 1451.8 L2349.1 1472.6 L2352.1 1401.0 L2355.0 1275.0 L2358.0 1417.9 L2361.0 1404.9 L2364.0 1384.0 L2367.0 1332.6 L2370.0 1449.7 L2372.9 1333.2 L2375.9 1559.6 L2378.9 1306.3 L2381.9 1506.0 L2384.9 1343.6 L2387.9 1378.1 L2390.9 1265.8 L2393.8 1461.3 L2396.8 1304.3 L2399.8 1267.7 L2402.8 1277.7 L2405.8 1368.6 L2408.8 1342.4 L2411.7 1374.5 L2414.7 1566.9 L2417.7 1358.5 L2420.7 1393.1 L2423.7 1352.5 L2426.7 1250.5 L2429.6 1350.2 L2432.6 1332.4 L2435.6 1521.5 L2438.6 1483.3 L2441.6 1268.8 L2444.6 1277.4 L2447.5 1411.0 L2450.5 1257.7 L2453.5 1531.7 L2456.5 1468.1 L2459.5 1485.0 L2462.5 1588.9 L2465.5 1405.7 L2468.4 1274.0 L2471.4 1408.5 L2474.4 1275.2 L2477.4 1327.4 L2480.4 1287.5 L2483.4 1346.4 L2486.3 1464.9 L2489.3 1409.5 L2492.3 1422.0 L2495.3 1309.5 L2498.3 1401.8 L2501.3 1265.6 L2504.2 1470.4 L2507.2 1341.9 L2510.2 1352.5 L2513.2 1425.5 L2516.2 1276.5 L2519.2 1408.3 L2522.1 1346.2 L2525.1 1271.8 L2528.1 1274.0 L2531.1 1564.6 L2534.1 1272.0 L2537.1 1265.2 L2540.1 1418.3 L2543.0 1416.8 L2546.0 1286.7 L2549.0 1466.8 L2552.0 1441.1 L2555.0 1519.1 L2558.0 1374.1 L2560.9 1320.2 L2563.9 1281.7 L2566.9 1301.4 L2569.9 1256.4 L2572.9 1270.6 L2575.9 1323.9 L2578.8 1380.2 L2581.8 1281.0 L2584.8 1400.4 L2587.8 1477.2 L2590.8 1369.9 L2593.8 1380.3 L2596.7 1275.4 L2599.7 1408.5 L2602.7 1332.7 L2605.7 1276.0 L2608.7 1426.7 L2611.7 1419.5 L2614.7 1305.3 L2617.6 1270.0 L2620.6 1253.9 L2623.6 1276.5 L2626.6 1438.6 L2629.6 1526.5 L2632.6 1337.2 L2635.5 1334.0 L2638.5 1406.3 L2641.5 1283.9 L2644.5 1310.2 L2647.5 1378.4 L2650.5 1285.0 L2653.4 1406.4 L2656.4 1375.5 L2659.4 1293.2 L2662.4 1336.0 L2665.4 1274.6 L2668.4 1438.2 L2671.3 1278.2 L2674.3 1274.6 L2677.3 1380.1 L2680.3 1462.0 L2683.3 1402.2 L2686.3 1394.7 L2689.3 1410.9 L2692.2 1442.0 L2695.2 1367.0 L2698.2 1267.5 L2701.2 1367.6 L2704.2 1472.1 L2707.2 1361.3 L2710.1 1419.0 L2713.1 1317.1 L2716.1 1326.9 L2719.1 1275.2 L2722.1 1479.2 L2725.1 1371.3 L2728.0 1401.9 L2731.0 1255.8 L2734.0 1461.4 L2737.0 1280.1 L2740.0 1344.3 L2743.0 1375.8 L2745.9 1379.7 L2748.9 1355.9 L2751.9 1340.7 L2754.9 1378.7 L2757.9 1423.5 L2760.9 1351.1 L2763.9 1280.9 L2766.8 1478.3 L2769.8 1288.4 L2772.8 1425.7 L2775.8 1578.6 L2778.8 1287.1 L2781.8 1346.3 L2784.7 1269.5 L2787.7 1349.5 L2790.7 1364.0 L2793.7 1388.1 L2796.7 1408.5 L2799.7 1258.3 L2802.6 1438.5 L2805.6 1383.6 L2808.6 1279.4 L2811.6 1355.3 L2814.6 1362.7 L2817.6 1365.2 L2820.5 1572.9 L2823.5 1396.0 L2826.5 1386.7 L2829.5 1271.6 L2832.5 1423.9 L2835.5 1300.6 L2838.5 1257.4 L2841.4 1398.7 L2844.4 1423.2 L2847.4 1347.3 L2850.4 1401.4 L2853.4 1281.9 L2856.4 1283.0 L2859.3 1355.6 L2862.3 1343.1 L2865.3 1370.7 L2868.3 1447.2 L2871.3 1428.2 L2874.3 1386.6 L2877.2 1416.2 L2880.2 1283.1 L2883.2 1353.6 L2886.2 1342.8 L2889.2 1275.5 L2892.2 1390.4 L2895.1 1391.6 L2898.1 1380.9 L2901.1 1387.8 L2904.1 1334.6 L2907.1 1497.7 L2910.1 1272.9 L2913.1 1512.1 L2916.0 1278.0 L2919.0 1260.7 L2922.0 1425.6 L2925.0 1490.3 L2928.0 1432.6 L2931.0 1399.3 L2933.9 1279.0 L2936.9 1275.3 L2939.9 1329.5 L2942.9 1287.2 L2945.9 1353.6 L2948.9 1367.9 L2951.8 1425.0 L2954.8 1370.0 L2957.8 1374.8 L2960.8 1407.6 L2963.8 1430.2 L2966.8 1270.4 L2969.7 1357.3 L2972.7 1409.9 L2975.7 1450.0 L2978.7 1448.1 L2981.7 1356.1 L2984.7 1304.4 L2987.7 1427.9 L2990.6 1348.5 L2993.6 1350.0 L2996.6 1370.9 L2999.6 1364.8 L3002.6 1271.1 L3005.6 1356.5 L3008.5 1376.2 L3011.5 1275.9 L3014.5 1491.6 L3017.5 1378.0 L3020.5 1298.4 L3023.5 1281.2 L3026.4 1289.3 L3029.4 1284.0 L3032.4 1324.2 L3035.4 1417.3 L3038.4 1271.4 L3041.4 1307.9 L3044.3 1370.2 L3047.3 1294.8 L3050.3 1558.2 L3053.3 1343.2 L3056.3 1420.9 L3059.3 1282.1 L3062.3 1271.8 L3065.2 1385.0 L3068.2 1364.2 L3071.2 1352.8 L3074.2 1337.8 L3077.2 1433.7 L3080.2 1340.4 L3083.1 1474.0 L3086.1 1341.6 L3089.1 1485.0 L3092.1 1474.3 L3095.1 1356.6 L3098.1 1472.3 L3101.0 1429.8 L3104.0 1285.9 L3107.0 1334.2 L3110.0 1312.0 L3113.0 1309.2 L3116.0 1377.0 L3118.9 1382.3 L3121.9 1408.3 L3124.9 1440.4 L3127.9 1398.5 L3130.9 1338.8 L3131.9 1338.8 L3131.9 1674 Z" fill="#6ed0e0"/>
<path d="M1056.0 1674 L1056.0 1507.5 L1057.0 1507.5 L1060.0 1512.3 L1063.0 1441.0 L1066.0 1521.2 L1068.9 1453.5 L1071.9 1504.8 L1074.9 1538.3 L1077.9 1448.8 L1080.9 1514.4 L1083.9 1364.1 L1086.8 1293.6 L1089.8 1590.1 L1092.8 1532.0 L1095.8 1514.7 L1098.8 1436.3 L1101.8 1357.1 L1104.7 1455.7 L1107.7 1577.6 L1110.7 1498.8 L1113.7 1567.8 L1116.7 1566.4 L1119.7 1541.5 L1122.6 1424.9 L1125.6 1516.3 L1128.6 1432.7 L1131.6 1567.3 L1134.6 1301.1 L1137.6 1404.3 L1140.6 1490.2 L1143.5 1634.5 L1146.5 1458.7 L1149.5 1552.9 L1152.5 1387.9 L1155.5 1453.8 L1158.5 1398.8 L1161.4 1547.5 L1164.4 1558.1 L1167.4 1498.5 L1170.4 1535.8 L1173.4 1564.0 L1176.4 1346.3 L1179.3 1291.9 L1182.3 1537.7 L1185.3 1325.9 L1188.3 1603.0 L1191.3 1359.5 L1194.3 1549.4 L1197.2 1560.4 L1200.2 1541.0 L1203.2 1374.5 L1206.2 1563.7 L1209.2 1360.8 L1212.2 1603.7 L1215.2 1610.7 L1218.1 1500.5 L1221.1 1598.8 L1224.1 1522.8 L1227.1 1585.3 L1230.1 1568.5 L1233.1 1488.3 L1236.0 1529.3 L1239.0 1437.2 L1242.0 1541.2 L1245.0 1526.0 L1248.0 1617.9 L1251.0 1561.4 L1253.9 1507.5 L1256.9 1478.7 L1259.9 1506.0 L1262.9 1504.3 L1265.9 1617.6 L1268.9 1594.8 L1271.8 1627.5 L1274.8 1556.5 L1277.8 1430.7 L1280.8 1512.2 L1283.8 1594.9 L1286.8 1376.8 L1289.8 1413.1 L1292.7 1497.9 L1295.7 1563.5 L1298.7 1594.3 L1301.7 1458.4 L1304.7 1505.5 L1307.7 1513.6 L1310.6 1518.4 L1313.6 1518.9 L1316.6 1501.9 L1319.6 1455.2 L1322.6 1516.8 L1325.6 1453.7 L1328.5 1452.8 L1331.5 1637.5 L1334.5 1609.3 L1337.5 1426.2 L1340.5 1445.3 L1343.5 1583.9 L1346.4 1541.0 L1349.4 1564.9 L1352.4 1470.6 L1355.4 1538.8 L1358.4 1419.3 L1361.4 1520.7 L1364.4 1422.9 L1367.3 1595.9 L1370.3 1484.3 L1373.3 1442.2 L1376.3 1526.7 L1379.3 1536.4 L1382.3 1527.3 L1385.2 1466.9 L1388.2 1461.8 L1391.2 1506.2 L1394.2 1399.7 L1397.2 1578.4 L1400.2 1584.1 L1403.1 1468.0 L1406.1 1439.5 L1409.1 1536.2 L1412.1 1274.7 L1415.1 1418.0 L1418.1 1301.4 L1421.0 1640.6 L1424.0 1542.0 L1427.0 1580.5 L1430.0 1580.5 L1433.0 1390.1 L1436.0 1614.9 L1439.0 1559.8 L1441.9 1484.9 L1444.9 1617.9 L1447.9 1443.3 L1450.9 1482.0 L1453.9 1626.5 L1456.9 1436.4 L1459.8 1560.9 L1462.8 1416.1 L1465.8 1550.3 L1468.8 1518.0 L1471.8 1415.3 L1474.8 1559.2 L1477.7 1454.9 L1480.7 1577.1 L1483.7 1439.9 L1486.7 1390.4 L1489.7 1555.9 L1492.7 1311.8 L1495.6 1572.7 L1498.6 1355.3 L1501.6 1556.0 L1504.6 1570.9 L1507.6 1635.4 L1510.6 1400.2 L1513.6 1403.6 L1516.5 1331.8 L1519.5 1540.9 L1522.5 1542.9 L1525.5 1512.1 L1528.5 1308.8 L1531.5 1414.3 L1534.4 1375.5 L1537.4 1379.1 L1540.4 1611.8 L1543.4 1548.3 L1546.4 1530.8 L1549.4 1405.0 L1552.3 1501.1 L1555.3 1455.2 L1558.3 1581.5 L1561.3 1626.2 L1564.3 1538.5 L1567.3 1508.0 L1570.2 1596.3 L1573.2 1612.4 L1576.2 1460.0 L1579.2 1501.0 L1582.2 1568.7 L1585.2 1406.1 L1588.2 1347.0 L1591.1 1634.9 L1594.1 1420.8 L1597.1 1593.9 L1600.1 1298.8 L1603.1 1562.8 L1606.1 1632.4 L1609.0 1579.4 L1612.0 1424.8 L1615.0 1562.0 L1618.0 1294.4 L1621.0 1301.5 L1624.0 1593.1 L1626.9 1570.9 L1629.9 1590.2 L1632.9 1598.0 L1635.9 1423.6 L1638.9 1606.9 L1641.9 1444.5 L1644.8 1406.0 L1647.8 1600.2 L1650.8 1583.1 L1653.8 1486.6 L1656.8 1630.7 L1659.8 1452.1 L1662.8 1536.1 L1665.7 1425.6 L1668.7 1328.6 L1671.7 1327.1 L1674.7 1433.9 L1677.7 1576.5 L1680.7 1510.1 L1683.6 1497.1 L1686.6 1480.8 L1689.6 1467.2 L1692.6 1560.1 L1695.6 1503.4 L1698.6 1532.1 L1701.5 1560.1 L1704.5 1509.4 L1707.5 1438.8 L1710.5 1525.6 L1713.5 1580.1 L1716.5 1471.4 L1719.4 1399.1 L1722.4 1484.5 L1725.4 1276.1 L1728.4 1609.8 L1731.4 1279.6 L1734.4 1590.4 L1737.4 1489.2 L1740.3 1384.9 L1743.3 1324.6 L1746.3 1430.1 L1749.3 1498.9 L1752.3 1519.0 L1755.3 1557.8 L1758.2 1465.7 L1761.2 1644.7 L1764.2 1275.8 L1767.2 1518.8 L1770.2 1497.8 L1773.2 1587.4 L1776.1 1460.5 L1779.1 1397.8 L1782.1 1465.1 L1785.1 1507.5 L1788.1 1587.9 L1791.1 1563.3 L1794.0 1435.5 L1797.0 1488.6 L1800.0 1421.9 L1803.0 1408.6 L1806.0 1491.2 L1809.0 1572.3 L1812.0 1544.6 L1814.9 1530.2 L1817.9 1297.6 L1820.9 1408.9 L1823.9 1503.9 L1826.9 1394.6 L1829.9 1466.9 L1832.8 1386.4 L1835.8 1569.7 L1838.8 1529.5 L1841.8 1431.9 L1844.8 1503.6 L1847.8 1475.8 L1850.7 1455.8 L1853.7 1544.3 L1856.7 1529.6 L1859.7 1521.3 L1862.7 1553.3 L1865.7 1444.8 L1868.6 1604.8 L1871.6 1490.1 L1874.6 1618.1 L1877.6 1426.2 L1880.6 1475.0 L1883.6 1458.9 L1886.6 1587.8 L1889.5 1526.2 L1892.5 1495.7 L1895.5 1478.9 L1898.5 1495.1 L1901.5 1505.5 L1904.5 1438.5 L1907.4 1462.9 L1910.4 1526.8 L1913.4 1367.4 L1916.4 1254.2 L1919.4 1616.5 L1922.4 1555.2 L1925.3 1451.0 L1928.3 1598.2 L1931.3 1482.5 L1934.3 1587.7 L1937.3 1567.8 L1940.3 1609.1 L1943.2 1498.2 L1946.2 1362.5 L1949.2 1293.9 L1952.2 1550.1 L1955.2 1302.2 L1958.2 1468.7 L1961.2 1536.9 L1964.1 1538.9 L1967.1 1625.1 L1970.1 1300.4 L1973.1 1622.7 L1976.1 1470.7 L1979.1 1511.0 L1982.0 1568.0 L1985.0 1508.3 L1988.0 1409.7 L1991.0 1510.1 L1994.0 1575.5 L1997.0 1482.6 L1999.9 1317.3 L2002.9 1591.1 L2005.9 1384.9 L2008.9 1547.9 L2011.9 1556.5 L2014.9 1604.4 L2017.8 1524.4 L2020.8 1464.3 L2023.8 1325.6 L2026.8 1586.2 L2029.8 1520.5 L2032.8 1584.9 L2035.8 1571.0 L2038.7 1405.6 L2041.7 1285.3 L2044.7 1446.5 L2047.7 1495.1 L2050.7 1568.0 L2053.7 1525.0 L2056.6 1499.5 L2059.6 1603.9 L2062.6 1557.7 L2065.6 1291.4 L2068.6 1513.2 L2071.6 1458.0 L2074.5 1550.1 L2077.5 1409.9 L2080.5 1608.5 L2083.5 1534.2 L2086.5 1512.7 L2089.5 1566.6 L2092.4 1613.2 L2095.4 1291.2 L2098.4 1465.7 L2101.4 1590.3 L2104.4 1607.2 L2107.4 1595.1 L2110.4 1483.5 L2113.3 1494.8 L2116.3 1518.0 L2119.3 1439.8 L2122.3 1398.6 L2125.3 1496.6 L2128.3 1609.3 L2131.2 1359.5 L2134.2 1448.5 L2137.2 1514.3 L2140.2 1457.9 L2143.2 1493.5 L2146.2 1516.5 L2149.1 1566.7 L2152.1 1488.7 L2155.1 1311.7 L2158.1 1433.1 L2161.1 1552.2 L2164.1 1447.5 L2167.1 1489.0 L2170.0 1426.3 L2173.0 1482.8 L2176.0 1351.9 L2179.0 1465.9 L2182.0 1629.6 L2185.0 1314.7 L2187.9 1359.4 L2190.9 1492.3 L2193.9 1387.2 L2196.9 1482.5 L2199.9 1306.2 L2202.9 1638.3 L2205.8 1359.7 L2208.8 1418.7 L2211.8 1580.9 L2214.8 1526.9 L2217.8 1583.0 L2220.8 1329.5 L2223.7 1422.5 L2226.7 1355.0 L2229.7 1586.2 L2232.7 1498.4 L2235.7 1467.2 L2238.7 1479.5 L2241.7 1413.3 L2244.6 1471.5 L2247.6 1545.3 L2250.6 1342.1 L2253.6 1438.2 L2256.6 1450.3 L2259.6 1543.6 L2262.5 1450.5 L2265.5 1552.3 L2268.5 1425.1 L2271.5 1449.9 L2274.5 1448.1 L2277.5 1614.6 L2280.4 1476.7 L2283.4 1463.2 L2286.4 1317.6 L2289.4 1504.9 L2292.4 1597.2 L2295.4 1545.1 L2298.3 1572.7 L2301.3 1610.7 L2304.3 1631.4 L2307.3 1390.3 L2310.3 1559.8 L2313.3 1553.6 L2316.3 1645.8 L2319.2 1566.2 L2322.2 1495.3 L2325.2 1587.6 L2328.2 1568.9 L2331.2 1559.2 L2334.2 1507.1 L2337.1 1559.9 L2340.1 1489.4 L2343.1 1571.4 L2346.1 1555.3 L2349.1 1589.6 L2352.1 1482.9 L2355.0 1276.9 L2358.0 1620.2 L2361.0 1602.1 L2364.0 1390.8 L2367.0 1389.7 L2370.0 1627.3 L2372.9 1391.1 L2375.9 1566.6 L2378.9 1486.3 L2381.9 1519.5 L2384.9 1534.5 L2387.9 1604.9 L2390.9 1475.1 L2393.8 1473.8 L2396.8 1589.1 L2399.8 1403.1 L2402.8 1495.2 L2405.8 1448.0 L2408.8 1495.1 L2411.7 1541.2 L2414.7 1584.4 L2417.7 1476.9 L2420.7 1598.8 L2423.7 1506.9 L2426.7 1286.3 L2429.6 1483.5 L2432.6 1498.6 L2435.6 1586.6 L2438.6 1564.2 L2441.6 1431.0 L2444.6 1428.1 L2447.5 1608.2 L2450.5 1322.8 L2453.5 1540.4 L2456.5 1611.5 L2459.5 1584.8 L2462.5 1628.8 L2465.5 1558.9 L2468.4 1522.8 L2471.4 1413.4 L2474.4 1508.6 L2477.4 1431.8 L2480.4 1298.7 L2483.4 1498.6 L2486.3 1479.4 L2489.3 1607.5 L2492.3 1605.9 L2495.3 1314.5 L2498.3 1577.7 L2501.3 1488.4 L2504.2 1573.4 L2507.2 1409.4 L2510.2 1598.3 L2513.2 1597.4 L2516.2 1520.0 L2519.2 1525.5 L2522.1 1526.3 L2525.1 1286.8 L2528.1 1450.9 L2531.1 1587.0 L2534.1 1471.5 L2537.1 1545.8 L2540.1 1565.6 L2543.0 1428.1 L2546.0 1439.3 L2549.0 1474.8 L2552.0 1535.5 L2555.0 1523.5 L2558.0 1384.3 L2560.9 1371.6 L2563.9 1442.3 L2566.9 1437.8 L2569.9 1279.1 L2572.9 1555.0 L2575.9 1517.4 L2578.8 1482.7 L2581.8 1282.8 L2584.8 1566.5 L2587.8 1554.4 L2590.8 1540.6 L2593.8 1567.5 L2596.7 1467.8 L2599.7 1552.3 L2602.7 1482.7 L2605.7 1464.6 L2608.7 1522.3 L2611.7 1545.8 L2614.7 1451.5 L2617.6 1285.0 L2620.6 1257.3 L2623.6 1283.4 L2626.6 1568.3 L2629.6 1532.9 L2632.6 1509.9 L2635.5 1552.4 L2638.5 1490.5 L2641.5 1284.9 L2644.5 1464.9 L2647.5 1489.9 L2650.5 1290.7 L2653.4 1555.1 L2656.4 1576.7 L2659.4 1344.5 L2662.4 1582.1 L2665.4 1318.8 L2668.4 1551.9 L2671.3 1409.1 L2674.3 1275.4 L2677.3 1551.3 L2680.3 1560.5 L2683.3 1541.1 L2686.3 1522.9 L2689.3 1557.3 L2692.2 1625.3 L2695.2 1577.8 L2698.2 1473.7 L2701.2 1510.9 L2704.2 1620.4 L2707.2 1504.0 L2710.1 1577.7 L2713.1 1398.6 L2716.1 1426.3 L2719.1 1481.5 L2722.1 1576.0 L2725.1 1495.6 L2728.0 1409.4 L2731.0 1257.0 L2734.0 1561.2 L2737.0 1291.4 L2740.0 1492.9 L2743.0 1475.9 L2745.9 1614.8 L2748.9 1501.6 L2751.9 1519.7 L2754.9 1561.9 L2757.9 1530.8 L2760.9 1473.0 L2763.9 1307.3 L2766.8 1486.7 L2769.8 1545.6 L2772.8 1537.8 L2775.8 1591.8 L2778.8 1561.2 L2781.8 1500.1 L2784.7 1386.0 L2787.7 1531.3 L2790.7 1464.8 L2793.7 1565.7 L2796.7 1481.0 L2799.7 1334.9 L2802.6 1447.0 L2805.6 1553.5 L2808.6 1513.6 L2811.6 1478.1 L2814.6 1425.7 L2817.6 1501.3 L2820.5 1582.2 L2823.5 1550.1 L2826.5 1555.5 L2829.5 1554.1 L2832.5 1547.9 L2835.5 1551.2 L2838.5 1260.7 L2841.4 1567.6 L2844.4 1629.6 L2847.4 1472.6 L2850.4 1520.8 L2853.4 1444.6 L2856.4 1450.7 L2859.3 1485.8 L2862.3 1437.1 L2865.3 1518.6 L2868.3 1522.3 L2871.3 1435.5 L2874.3 1475.9 L2877.2 1429.3 L2880.2 1608.4 L2883.2 1474.8 L2886.2 1410.6 L2889.2 1502.6 L2892.2 1532.8 L2895.1 1466.3 L2898.1 1427.9 L2901.1 1451.6 L2904.1 1578.7 L2907.1 1589.6 L2910.1 1504.6 L2913.1 1531.5 L2916.0 1361.4 L2919.0 1405.5 L2922.0 1626.1 L2925.0 1495.0 L2928.0 1595.0 L2931.0 1493.8 L2933.9 1469.8 L2936.9 1489.4 L2939.9 1518.4 L2942.9 1289.1 L2945.9 1457.9 L2948.9 1611.3 L2951.8 1529.6 L2954.8 1575.0 L2957.8 1492.8 L2960.8 1561.8 L2963.8 1569.6 L2966.8 1468.7 L2969.7 1404.2 L2972.7 1593.8 L2975.7 1534.4 L2978.7 1576.6 L2981.7 1482.4 L2984.7 1329.8 L2987.7 1439.0 L2990.6 1465.5 L2993.6 1445.6 L2996.6 1420.7 L2999.6 1457.5 L3002.6 1278.7 L3005.6 1373.9 L3008.5 1557.1 L3011.5 1521.6 L3014.5 1619.1 L3017.5 1516.7 L3020.5 1452.3 L3023.5 1548.8 L3026.4 1298.8 L3029.4 1531.0 L3032.4 1403.3 L3035.4 1518.8 L3038.4 1311.9 L3041.4 1389.3 L3044.3 1461.9 L3047.3 1527.7 L3050.3 1567.2 L3053.3 1550.4 L3056.3 1525.4 L3059.3 1581.9 L3062.3 1290.1 L3065.2 1450.1 L3068.2 1538.5 L3071.2 1550.1 L3074.2 1481.8 L3077.2 1508.5 L3080.2 1465.8 L3083.1 1484.6 L3086.1 1515.5 L3089.1 1491.5 L3092.1 1478.1 L3095.1 1592.3 L3098.1 1485.2 L3101.0 1592.2 L3104.0 1413.0 L3107.0 1446.8 L3110.0 1322.1 L3113.0 1364.7 L3116.0 1496.1 L3118.9 1438.7 L3121.9 1512.2 L3124.9 1448.6 L3127.9 1548.4 L3130.9 1563.3 L3131.9 1563.3 L3131.9 1674 Z" fill="#eab839"/>
<path d="M1056.0 1674 L1056.0 1593.8 L1057.0 1593.8 L1060.0 1671.6 L1063.0 1671.4 L1066.0 1648.3 L1068.9 1591.3 L1071.9 1623.5 L1074.9 1661.7 L1077.9 1667.7 L1080.9 1657.0 L1083.9 1672.4 L1086.8 1647.9 L1089.8 1661.6 L1092.8 1605.9 L1095.8 1671.5 L1098.8 1613.6 L1101.8 1665.1 L1104.7 1670.7 L1107.7 1670.5 L1110.7 1669.3 L1113.7 1665.7 L1116.7 1665.2 L1119.7 1670.7 L1122.6 1585.4 L1125.6 1663.0 L1128.6 1539.3 L1131.6 1671.3 L1134.6 1673.1 L1137.6 1665.8 L1140.6 1570.9 L1143.5 1660.0 L1146.5 1560.4 L1149.5 1671.4 L1152.5 1516.4 L1155.5 1556.0 L1158.5 1667.8 L1161.4 1666.8 L1164.4 1666.6 L1167.4 1546.5 L1170.4 1666.7 L1173.4 1668.2 L1176.4 1672.9 L1179.3 1672.3 L1182.3 1654.1 L1185.3 1672.5 L1188.3 1670.4 L1191.3 1517.4 L1194.3 1667.6 L1197.2 1632.2 L1200.2 1667.0 L1203.2 1466.2 L1206.2 1667.9 L1209.2 1546.3 L1212.2 1669.9 L1215.2 1667.5 L1218.1 1615.3 L1221.1 1670.5 L1224.1 1663.8 L1227.1 1662.7 L1230.1 1671.3 L1233.1 1616.5 L1236.0 1609.7 L1239.0 1672.3 L1242.0 1669.1 L1245.0 1666.6 L1248.0 1669.5 L1251.0 1660.4 L1253.9 1619.1 L1256.9 1664.0 L1259.9 1662.9 L1262.9 1669.9 L1265.9 1670.1 L1268.9 1667.5 L1271.8 1669.4 L1274.8 1665.5 L1277.8 1600.8 L1280.8 1666.4 L1283.8 1667.8 L1286.8 1660.4 L1289.8 1536.4 L1292.7 1628.6 L1295.7 1664.0 L1298.7 1663.8 L1301.7 1672.2 L1304.7 1667.5 L1307.7 1664.3 L1310.6 1670.8 L1313.6 1664.0 L1316.6 1670.4 L1319.6 1669.0 L1322.6 1661.0 L1325.6 1519.7 L1328.5 1539.2 L1331.5 1670.3 L1334.5 1668.1 L1337.5 1671.5 L1340.5 1666.6 L1343.5 1667.2 L1346.4 1672.5 L1349.4 1670.2 L1352.4 1572.0 L1355.4 1663.6 L1358.4 1556.4 L1361.4 1668.0 L1364.4 1490.2 L1367.3 1670.1 L1370.3 1671.7 L1373.3 1497.2 L1376.3 1669.6 L1379.3 1672.2 L1382.3 1668.0 L1385.2 1669.9 L1388.2 1562.5 L1391.2 1563.0 L1394.2 1671.0 L1397.2 1665.9 L1400.2 1669.9 L1403.1 1542.2 L1406.1 1656.9 L1409.1 1590.9 L1412.1 1595.4 L1415.1 1577.5 L1418.1 1673.6 L1421.0 1667.1 L1424.0 1663.8 L1427.0 1667.0 L1430.0 1671.6 L1433.0 1670.4 L1436.0 1669.8 L1439.0 1663.4 L1441.9 1654.2 L1444.9 1668.5 L1447.9 1671.1 L1450.9 1669.2 L1453.9 1670.6 L1456.9 1666.1 L1459.8 1669.7 L1462.8 1669.3 L1465.8 1667.2 L1468.8 1664.2 L1471.8 1504.0 L1474.8 1625.0 L1477.7 1586.3 L1480.7 1669.7 L1483.7 1640.1 L1486.7 1555.4 L1489.7 1669.7 L1492.7 1654.5 L1495.6 1670.4 L1498.6 1645.2 L1501.6 1670.0 L1504.6 1665.3 L1507.6 1670.2 L1510.6 1571.3 L1513.6 1495.9 L1516.5 1663.2 L1519.5 1667.2 L1522.5 1670.3 L1525.5 1623.1 L1528.5 1441.6 L1531.5 1661.7 L1534.4 1480.9 L1537.4 1638.5 L1540.4 1665.1 L1543.4 1667.8 L1546.4 1589.5 L1549.4 1668.6 L1552.3 1594.8 L1555.3 1667.7 L1558.3 1668.5 L1561.3 1668.2 L1564.3 1670.1 L1567.3 1631.1 L1570.2 1663.3 L1573.2 1669.4 L1576.2 1667.5 L1579.2 1635.3 L1582.2 1668.9 L1585.2 1671.5 L1588.2 1671.0 L1591.1 1671.0 L1594.1 1672.0 L1597.1 1671.0 L1600.1 1672.1 L1603.1 1606.9 L1606.1 1670.1 L1609.0 1652.4 L1612.0 1669.1 L1615.0 1669.8 L1618.0 1672.4 L1621.0 1673.2 L1624.0 1666.9 L1626.9 1671.3 L1629.9 1670.0 L1632.9 1648.0 L1635.9 1661.7 L1638.9 1660.6 L1641.9 1670.3 L1644.8 1588.4 L1647.8 1667.0 L1650.8 1668.7 L1653.8 1668.3 L1656.8 1669.1 L1659.8 1608.3 L1662.8 1659.7 L1665.7 1667.1 L1668.7 1538.1 L1671.7 1659.5 L1674.7 1600.8 L1677.7 1669.9 L1680.7 1666.9 L1683.6 1531.9 L1686.6 1664.3 L1689.6 1666.2 L1692.6 1671.4 L1695.6 1672.2 L1698.6 1610.8 L1701.5 1668.9 L1704.5 1574.5 L1707.5 1669.7 L1710.5 1614.8 L1713.5 1670.8 L1716.5 1670.0 L1719.4 1667.7 L1722.4 1670.4 L1725.4 1640.9 L1728.4 1670.9 L1731.4 1604.3 L1734.4 1668.1 L1737.4 1660.8 L1740.3 1572.8 L1743.3 1566.9 L1746.3 1664.2 L1749.3 1583.9 L1752.3 1664.3 L1755.3 1671.1 L1758.2 1671.8 L1761.2 1670.6 L1764.2 1667.0 L1767.2 1669.5 L1770.2 1576.0 L1773.2 1669.2 L1776.1 1671.7 L1779.1 1580.7 L1782.1 1631.5 L1785.1 1627.6 L1788.1 1669.2 L1791.1 1671.4 L1794.0 1667.8 L1797.0 1672.1 L1800.0 1670.1 L1803.0 1489.0 L1806.0 1663.7 L1809.0 1665.7 L1812.0 1670.5 L1814.9 1667.3 L1817.9 1593.6 L1820.9 1531.0 L1823.9 1594.7 L1826.9 1664.2 L1829.9 1672.0 L1832.8 1569.2 L1835.8 1671.6 L1838.8 1669.1 L1841.8 1559.3 L1844.8 1670.8 L1847.8 1572.8 L1850.7 1666.5 L1853.7 1663.4 L1856.7 1646.7 L1859.7 1545.3 L1862.7 1666.1 L1865.7 1519.2 L1868.6 1666.7 L1871.6 1666.1 L1874.6 1669.3 L1877.6 1668.5 L1880.6 1663.5 L1883.6 1515.2 L1886.6 1665.7 L1889.5 1575.9 L1892.5 1671.1 L1895.5 1557.4 L1898.5 1670.5 L1901.5 1668.7 L1904.5 1667.3 L1907.4 1663.5 L1910.4 1667.8 L1913.4 1627.4 L1916.4 1672.8 L1919.4 1668.0 L1922.4 1670.4 L1925.3 1664.6 L1928.3 1671.5 L1931.3 1604.8 L1934.3 1663.4 L1937.3 1662.6 L1940.3 1665.7 L1943.2 1527.7 L1946.2 1527.5 L1949.2 1401.1 L1952.2 1671.9 L1955.2 1650.9 L1958.2 1540.1 L1961.2 1637.7 L1964.1 1667.7 L1967.1 1671.9 L1970.1 1668.6 L1973.1 1671.8 L1976.1 1571.9 L1979.1 1668.3 L1982.0 1670.0 L1985.0 1664.6 L1988.0 1669.0 L1991.0 1667.8 L1994.0 1629.1 L1997.0 1671.4 L1999.9 1672.7 L2002.9 1670.7 L2005.9 1664.4 L2008.9 1663.8 L2011.9 1669.8 L2014.9 1669.3 L2017.8 1670.4 L2020.8 1585.5 L2023.8 1618.8 L2026.8 1665.1 L2029.8 1603.2 L2032.8 1669.6 L2035.8 1668.0 L2038.7 1669.3 L2041.7 1632.5 L2044.7 1659.6 L2047.7 1666.1 L2050.7 1667.9 L2053.7 1666.1 L2056.6 1663.1 L2059.6 1663.2 L2062.6 1669.7 L2065.6 1673.0 L2068.6 1619.6 L2071.6 1621.3 L2074.5 1667.7 L2077.5 1654.7 L2080.5 1663.7 L2083.5 1665.9 L2086.5 1596.5 L2089.5 1631.3 L2092.4 1660.7 L2095.4 1672.6 L2098.4 1627.4 L2101.4 1667.0 L2104.4 1667.4 L2107.4 1671.2 L2110.4 1667.1 L2113.3 1621.0 L2116.3 1669.2 L2119.3 1558.9 L2122.3 1573.9 L2125.3 1567.0 L2128.3 1666.3 L2131.2 1659.1 L2134.2 1547.1 L2137.2 1607.8 L2140.2 1668.1 L2143.2 1669.1 L2146.2 1600.4 L2149.1 1601.2 L2152.1 1667.2 L2155.1 1671.2 L2158.1 1571.3 L2161.1 1665.4 L2164.1 1672.2 L2167.1 1667.0 L2170.0 1493.3 L2173.0 1610.4 L2176.0 1648.9 L2179.0 1671.8 L2182.0 1668.4 L2185.0 1659.7 L2187.9 1651.6 L2190.9 1670.7 L2193.9 1665.5 L2196.9 1513.4 L2199.9 1469.2 L2202.9 1670.8 L2205.8 1509.0 L2208.8 1668.3 L2211.8 1670.9 L2214.8 1566.9 L2217.8 1672.0 L2220.8 1596.7 L2223.7 1627.8 L2226.7 1669.5 L2229.7 1662.1 L2232.7 1568.6 L2235.7 1589.7 L2238.7 1566.1 L2241.7 1572.2 L2244.6 1665.8 L2247.6 1660.5 L2250.6 1551.7 L2253.6 1670.4 L2256.6 1494.9 L2259.6 1669.2 L2262.5 1672.5 L2265.5 1654.8 L2268.5 1513.2 L2271.5 1644.6 L2274.5 1671.5 L2277.5 1669.6 L2280.4 1670.6 L2283.4 1664.0 L2286.4 1530.1 L2289.4 1574.4 L2292.4 1665.8 L2295.4 1669.5 L2298.3 1666.6 L2301.3 1671.9 L2304.3 1666.1 L2307.3 1643.1 L2310.3 1666.7 L2313.3 1670.2 L2316.3 1671.4 L2319.2 1663.5 L2322.2 1663.9 L2325.2 1668.8 L2328.2 1671.2 L2331.2 1669.9 L2334.2 1669.1 L2337.1 1669.4 L2340.1 1670.5 L2343.1 1662.4 L2346.1 1671.3 L2349.1 1670.6 L2352.1 1554.5 L2355.0 1641.9 L2358.0 1670.1 L2361.0 1670.8 L2364.0 1520.9 L2367.0 1489.7 L2370.0 1671.6 L2372.9 1641.8 L2375.9 1662.1 L2378.9 1556.3 L2381.9 1670.1 L2384.9 1567.7 L2387.9 1667.1 L2390.9 1605.2 L2393.8 1663.7 L2396.8 1668.0 L2399.8 1625.8 L2402.8 1665.3 L2405.8 1666.6 L2408.8 1630.6 L2411.7 1670.4 L2414.7 1667.2 L2417.7 1669.1 L2420.7 1671.0 L2423.7 1603.3 L2426.7 1672.9 L2429.6 1545.9 L2432.6 1667.6 L2435.6 1671.1 L2438.6 1618.7 L2441.6 1535.7 L2444.6 1660.4 L2447.5 1668.0 L2450.5 1670.8 L2453.5 1666.8 L2456.5 1671.7 L2459.5 1670.9 L2462.5 1670.4 L2465.5 1666.4 L2468.4 1666.5 L2471.4 1668.1 L2474.4 1659.5 L2477.4 1571.7 L2480.4 1488.7 L2483.4 1669.3 L2486.3 1665.2 L2489.3 1668.0 L2492.3 1669.7 L2495.3 1670.7 L2498.3 1670.6 L2501.3 1666.9 L2504.2 1669.8 L2507.2 1603.8 L2510.2 1666.5 L2513.2 1669.5 L2516.2 1670.5 L2519.2 1663.8 L2522.1 1672.3 L2525.1 1663.3 L2528.1 1666.5 L2531.1 1658.2 L2534.1 1590.5 L2537.1 1593.1 L2540.1 1670.3 L2543.0 1668.1 L2546.0 1665.2 L2549.0 1664.4 L2552.0 1670.6 L2555.0 1659.9 L2558.0 1666.8 L2560.9 1672.5 L2563.9 1498.8 L2566.9 1662.8 L2569.9 1671.7 L2572.9 1670.0 L2575.9 1667.8 L2578.8 1669.0 L2581.8 1665.1 L2584.8 1671.9 L2587.8 1666.8 L2590.8 1668.1 L2593.8 1667.1 L2596.7 1543.6 L2599.7 1668.1 L2602.7 1551.3 L2605.7 1520.6 L2608.7 1670.3 L2611.7 1630.2 L2614.7 1669.6 L2617.6 1673.0 L2620.6 1672.5 L2623.6 1425.2 L2626.6 1669.7 L2629.6 1670.6 L2632.6 1667.0 L2635.5 1663.1 L2638.5 1671.7 L2641.5 1640.6 L2644.5 1598.9 L2647.5 1663.0 L2650.5 1471.5 L2653.4 1668.3 L2656.4 1668.5 L2659.4 1672.4 L2662.4 1668.6 L2665.4 1672.5 L2668.4 1666.3 L2671.3 1671.1 L2674.3 1673.1 L2677.3 1670.0 L2680.3 1625.8 L2683.3 1669.9 L2686.3 1668.7 L2689.3 1615.1 L2692.2 1664.2 L2695.2 1670.9 L2698.2 1667.2 L2701.2 1583.4 L2704.2 1664.8 L2707.2 1669.2 L2710.1 1669.3 L2713.1 1570.5 L2716.1 1592.2 L2719.1 1665.4 L2722.1 1664.7 L2725.1 1583.2 L2728.0 1668.9 L2731.0 1671.6 L2734.0 1604.6 L2737.0 1663.9 L2740.0 1672.2 L2743.0 1665.2 L2745.9 1668.0 L2748.9 1570.8 L2751.9 1573.9 L2754.9 1663.9 L2757.9 1667.5 L2760.9 1666.2 L2763.9 1672.5 L2766.8 1668.0 L2769.8 1666.6 L2772.8 1669.2 L2775.8 1667.7 L2778.8 1670.1 L2781.8 1667.2 L2784.7 1665.5 L2787.7 1580.5 L2790.7 1569.4 L2793.7 1635.1 L2796.7 1668.4 L2799.7 1612.9 L2802.6 1668.1 L2805.6 1671.9 L2808.6 1666.2 L2811.6 1645.0 L2814.6 1670.6 L2817.6 1667.2 L2820.5 1668.8 L2823.5 1667.6 L2826.5 1667.7 L2829.5 1668.6 L2832.5 1607.6 L2835.5 1662.9 L2838.5 1562.9 L2841.4 1669.0 L2844.4 1669.8 L2847.4 1591.6 L2850.4 1642.4 L2853.4 1667.8 L2856.4 1658.4 L2859.3 1613.9 L2862.3 1603.2 L2865.3 1672.3 L2868.3 1615.8 L2871.3 1668.9 L2874.3 1671.5 L2877.2 1660.7 L2880.2 1668.2 L2883.2 1665.6 L2886.2 1608.0 L2889.2 1667.5 L2892.2 1669.0 L2895.1 1672.0 L2898.1 1591.1 L2901.1 1601.1 L2904.1 1667.3 L2907.1 1670.5 L2910.1 1669.3 L2913.1 1659.7 L2916.0 1482.1 L2919.0 1607.8 L2922.0 1667.1 L2925.0 1592.4 L2928.0 1669.0 L2931.0 1604.7 L2933.9 1665.4 L2936.9 1663.8 L2939.9 1656.0 L2942.9 1673.2 L2945.9 1671.6 L2948.9 1670.2 L2951.8 1597.5 L2954.8 1664.8 L2957.8 1670.7 L2960.8 1671.0 L2963.8 1658.5 L2966.8 1663.6 L2969.7 1671.9 L2972.7 1670.8 L2975.7 1666.0 L2978.7 1671.2 L2981.7 1561.7 L2984.7 1646.0 L2987.7 1665.5 L2990.6 1541.9 L2993.6 1508.2 L2996.6 1554.5 L2999.6 1670.9 L3002.6 1446.3 L3005.6 1658.2 L3008.5 1665.0 L3011.5 1619.2 L3014.5 1670.5 L3017.5 1574.1 L3020.5 1662.4 L3023.5 1619.9 L3026.4 1669.6 L3029.4 1659.3 L3032.4 1571.5 L3035.4 1669.5 L3038.4 1673.2 L3041.4 1655.6 L3044.3 1544.2 L3047.3 1668.2 L3050.3 1669.5 L3053.3 1631.2 L3056.3 1661.4 L3059.3 1670.0 L3062.3 1598.4 L3065.2 1556.0 L3068.2 1620.8 L3071.2 1628.5 L3074.2 1624.4 L3077.2 1670.4 L3080.2 1548.8 L3083.1 1590.5 L3086.1 1601.9 L3089.1 1668.0 L3092.1 1593.2 L3095.1 1667.8 L3098.1 1571.8 L3101.0 1668.9 L3104.0 1661.1 L3107.0 1559.9 L3110.0 1654.5 L3113.0 1615.5 L3116.0 1556.5 L3118.9 1557.6 L3121.9 1596.2 L3124.9 1667.9 L3127.9 1666.3 L3130.9 1668.5 L3131.9 1668.5 L3131.9 1674 Z" fill="#7eb26d"/>
<rect x="1056.0" y="1245" width="2075.9" height="2" fill="#ea5043"/>
<path d="M3135.9 1674 L3135.9 1245.0 L3136.9 1245.0 L3139.8 1245.0 L3142.8 1245.0 L3145.8 1245.0 L3148.8 1245.0 L3151.8 1245.0 L3154.8 1245.0 L3157.7 1245.0 L3160.7 1245.0 L3163.7 1245.0 L3166.7 1245.0 L3169.7 1245.0 L3172.7 1245.0 L3175.6 1245.0 L3178.6 1245.0 L3181.6 1245.0 L3184.6 1245.0 L3187.6 1245.0 L3190.6 1245.0 L3193.5 1245.0 L3196.5 1245.0 L3199.5 1245.0 L3202.5 1245.0 L3203.5 1245.0 L3203.5 1674 Z" fill="#e24d42"/>
<path d="M3135.9 1674 L3135.9 1245.2 L3136.9 1245.2 L3139.8 1245.5 L3142.8 1245.2 L3145.8 1245.4 L3148.8 1245.7 L3151.8 1245.3 L3154.8 1246.4 L3157.7 1246.0 L3160.7 1245.8 L3163.7 1245.6 L3166.7 1245.4 L3169.7 1245.8 L3172.7 1246.1 L3175.6 1245.0 L3178.6 1245.2 L3181.6 1245.2 L3184.6 1245.5 L3187.6 1245.6 L3190.6 1248.7 L3193.5 1245.5 L3196.5 1245.4 L3199.5 1245.1 L3202.5 1245.2 L3203.5 1245.2 L3203.5 1674 Z" fill="#ef843c"/>
<path d="M3135.9 1674 L3135.9 1256.9 L3136.9 1256.9 L3139.8 1398.2 L3142.8 1414.3 L3145.8 1410.2 L3148.8 1327.3 L3151.8 1351.6 L3154.8 1301.9 L3157.7 1434.4 L3160.7 1414.8 L3163.7 1446.8 L3166.7 1432.1 L3169.7 1346.1 L3172.7 1273.2 L3175.6 1282.5 L3178.6 1383.1 L3181.6 1396.9 L3184.6 1388.2 L3187.6 1548.4 L3190.6 1349.2 L3193.5 1367.7 L3196.5 1314.9 L3199.5 1249.5 L3202.5 1391.5 L3203.5 1391.5 L3203.5 1674 Z" fill="#6ed0e0"/>
<path d="M3135.9 1674 L3135.9 1387.2 L3136.9 1387.2 L3139.8 1616.4 L3142.8 1441.3 L3145.8 1506.8 L3148.8 1435.6 L3151.8 1472.7 L3154.8 1454.2 L3157.7 1508.3 L3160.7 1613.3 L3163.7 1564.4 L3166.7 1533.7 L3169.7 1622.9 L3172.7 1281.3 L3175.6 1297.5 L3178.6 1588.3 L3181.6 1496.4 L3184.6 1592.5 L3187.6 1560.0 L3190.6 1366.2 L3193.5 1512.1 L3196.5 1444.7 L3199.5 1274.5 L3202.5 1538.9 L3203.5 1538.9 L3203.5 1674 Z" fill="#eab839"/>
<path d="M3135.9 1674 L3135.9 1590.2 L3136.9 1590.2 L3139.8 1665.9 L3142.8 1611.6 L3145.8 1666.7 L3148.8 1552.3 L3151.8 1586.5 L3154.8 1657.6 L3157.7 1671.3 L3160.7 1669.0 L3163.7 1668.9 L3166.7 1607.0 L3169.7 1667.4 L3172.7 1472.3 L3175.6 1672.8 L3178.6 1670.5 L3181.6 1668.0 L3184.6 1668.0 L3187.6 1662.7 L3190.6 1635.8 L3193.5 1570.2 L3196.5 1669.5 L3199.5 1673.4 L3202.5 1589.4 L3203.5 1589.4 L3203.5 1674 Z" fill="#7eb26d"/>
<rect x="3135.9" y="1245" width="67.6" height="2" fill="#ea5043"/>
</svg>
<div class="t" style="left:1046px;top:1661.26px;font-size:24.5px;line-height:24.5px;color:#ccccdc;font-weight:400;transform:translateX(-100%);">0<span style="display:inline-block;transform:scaleX(.72);transform-origin:0 50%;margin-right:-6.1px">%</span></div>
<div class="t" style="left:1046px;top:1575.66px;font-size:24.5px;line-height:24.5px;color:#ccccdc;font-weight:400;transform:translateX(-100%);">20<span style="display:inline-block;transform:scaleX(.72);transform-origin:0 50%;margin-right:-6.1px">%</span></div>
<div class="t" style="left:1046px;top:1490.06px;font-size:24.5px;line-height:24.5px;color:#ccccdc;font-weight:400;transform:translateX(-100%);">40<span style="display:inline-block;transform:scaleX(.72);transform-origin:0 50%;margin-right:-6.1px">%</span></div>
<div class="t" style="left:1046px;top:1404.46px;font-size:24.5px;line-height:24.5px;color:#ccccdc;font-weight:400;transform:translateX(-100%);">60<span style="display:inline-block;transform:scaleX(.72);transform-origin:0 50%;margin-right:-6.1px">%</span></div>
<div class="t" style="left:1046px;top:1318.86px;font-size:24.5px;line-height:24.5px;color:#ccccdc;font-weight:400;transform:translateX(-100%);">80<span style="display:inline-block;transform:scaleX(.72);transform-origin:0 50%;margin-right:-6.1px">%</span></div>
<div class="t" style="left:1046px;top:1233.26px;font-size:24.5px;line-height:24.5px;color:#ccccdc;font-weight:400;transform:translateX(-100%);">100<span style="display:inline-block;transform:scaleX(.72);transform-origin:0 50%;margin-right:-6.1px">%</span></div>
<div class="t" style="left:1149.0px;top:1692.18px;font-size:24px;line-height:24px;color:#ccccdc;font-weight:400;transform:translateX(-50%);">04/15 16:00</div>
<div class="t" style="left:1327.9px;top:1692.18px;font-size:24px;line-height:24px;color:#ccccdc;font-weight:400;transform:translateX(-50%);">04/15 20:00</div>
<div class="t" style="left:1506.8px;top:1692.18px;font-size:24px;line-height:24px;color:#ccccdc;font-weight:400;transform:translateX(-50%);">04/16 00:00</div>
<div class="t" style="left:1685.7px;top:1692.18px;font-size:24px;line-height:24px;color:#ccccdc;font-weight:400;transform:translateX(-50%);">04/16 04:00</div>
<div class="t" style="left:1864.6px;top:1692.18px;font-size:24px;line-height:24px;color:#ccccdc;font-weight:400;transform:translateX(-50%);">04/16 08:00</div>
<div class="t" style="left:2043.5px;top:1692.18px;font-size:24px;line-height:24px;color:#ccccdc;font-weight:400;transform:translateX(-50%);">04/16 12:00</div>
<div class="t" style="left:2222.4px;top:1692.18px;font-size:24px;line-height:24px;color:#ccccdc;font-weight:400;transform:translateX(-50%);">04/16 16:00</div>
<div class="t" style="left:2401.3px;top:1692.18px;font-size:24px;line-height:24px;color:#ccccdc;font-weight:400;transform:translateX(-50%);">04/16 20:00</div>
<div class="t" style="left:2580.2px;top:1692.18px;font-size:24px;line-height:24px;color:#ccccdc;font-weight:400;transform:translateX(-50%);">04/17 00:00</div>
<div class="t" style="left:2759.1000000000004px;top:1692.18px;font-size:24px;line-height:24px;color:#ccccdc;font-weight:400;transform:translateX(-50%);">04/17 04:00</div>
<div class="t" style="left:2938.0px;top:1692.18px;font-size:24px;line-height:24px;color:#ccccdc;font-weight:400;transform:translateX(-50%);">04/17 08:00</div>
<div class="t" style="left:3116.9px;top:1692.18px;font-size:24px;line-height:24px;color:#ccccdc;font-weight:400;transform:translateX(-50%);">04/17 12:00</div>
<div class="t" style="left:3554px;top:1245.84px;font-size:25px;line-height:25px;color:#3c9be0;font-weight:400;-webkit-text-stroke:0.5px #3c9be0;transform:translateX(-100%);">max</div>
<div class="t" style="left:3676px;top:1245.84px;font-size:25px;line-height:25px;color:#3c9be0;font-weight:400;-webkit-text-stroke:0.5px #3c9be0;transform:translateX(-100%);">avg</div>
<div class="" style="left:3283px;top:1301.7px;width:28px;height:8px;background:#7eb26d;border-radius:2px"></div>
<div class="t" style="left:3331px;top:1291.84px;font-size:25px;line-height:25px;color:#ccccdc;font-weight:400;">connect</div>
<div class="t" style="left:3570px;top:1292.09px;font-size:24.7px;line-height:24.7px;color:#ccccdc;font-weight:400;transform:translateX(-100%);">221 ms</div>
<div class="t" style="left:3692px;top:1292.09px;font-size:24.7px;line-height:24.7px;color:#ccccdc;font-weight:400;transform:translateX(-100%);">31.9 ms</div>
<div class="" style="left:3279px;top:1330px;width:418px;height:52px;background:#22252b"></div>
<div class="" style="left:3283px;top:1353.7px;width:28px;height:8px;background:#eab839;border-radius:2px"></div>
<div class="t" style="left:3331px;top:1343.84px;font-size:25px;line-height:25px;color:#ccccdc;font-weight:400;">processing</div>
<div class="t" style="left:3570px;top:1344.09px;font-size:24.7px;line-height:24.7px;color:#ccccdc;font-weight:400;transform:translateX(-100%);">1.98 s</div>
<div class="t" style="left:3692px;top:1344.09px;font-size:24.7px;line-height:24.7px;color:#ccccdc;font-weight:400;transform:translateX(-100%);">192 ms</div>
<div class="" style="left:3283px;top:1405.7px;width:28px;height:8px;background:#6ed0e0;border-radius:2px"></div>
<div class="t" style="left:3331px;top:1395.84px;font-size:25px;line-height:25px;color:#ccccdc;font-weight:400;">resolve</div>
<div class="t" style="left:3570px;top:1396.09px;font-size:24.7px;line-height:24.7px;color:#ccccdc;font-weight:400;transform:translateX(-100%);">447 ms</div>
<div class="t" style="left:3692px;top:1396.09px;font-size:24.7px;line-height:24.7px;color:#ccccdc;font-weight:400;transform:translateX(-100%);">96.1 ms</div>
<div class="" style="left:3279px;top:1434px;width:418px;height:52px;background:#22252b"></div>
<div class="" style="left:3283px;top:1457.7px;width:28px;height:8px;background:#ef843c;border-radius:2px"></div>
<div class="t" style="left:3331px;top:1447.84px;font-size:25px;line-height:25px;color:#ccccdc;font-weight:400;">tls</div>
<div class="t" style="left:3570px;top:1448.09px;font-size:24.7px;line-height:24.7px;color:#ccccdc;font-weight:400;transform:translateX(-100%);">591 ms</div>
<div class="t" style="left:3692px;top:1448.09px;font-size:24.7px;line-height:24.7px;color:#ccccdc;font-weight:400;transform:translateX(-100%);">68.5 ms</div>
<div class="" style="left:3283px;top:1509.7px;width:28px;height:8px;background:#e24d42;border-radius:2px"></div>
<div class="t" style="left:3331px;top:1499.84px;font-size:25px;line-height:25px;color:#ccccdc;font-weight:400;">transfer</div>
<div class="t" style="left:3570px;top:1500.09px;font-size:24.7px;line-height:24.7px;color:#ccccdc;font-weight:400;transform:translateX(-100%);">229 ms</div>
<div class="t" style="left:3692px;top:1500.09px;font-size:24.7px;line-height:24.7px;color:#ccccdc;font-weight:400;transform:translateX(-100%);">2.97 ms</div>
</body></html>
